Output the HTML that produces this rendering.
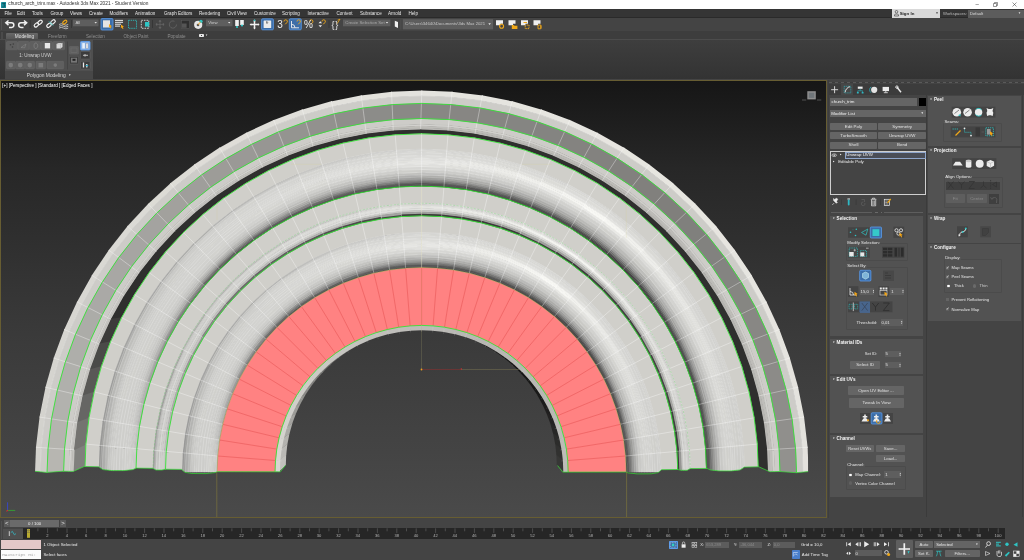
<!DOCTYPE html>
<html><head><meta charset="utf-8"><title>3ds Max</title>
<style>
*{box-sizing:border-box;margin:0;padding:0}
html,body{width:1024px;height:560px;overflow:hidden;background:#444;font-family:"Liberation Sans",sans-serif;font-size:4.6px;color:#e6e6e6;line-height:1}
.a{position:absolute}
.t{position:absolute;white-space:nowrap;line-height:1}
#title{left:0;top:0;width:1024px;height:9px;background:#fff}
#menu{left:0;top:9px;width:1024px;height:9px;background:#353535;border-bottom:.8px solid #2a2a2a}
#tool{left:0;top:18px;width:1024px;height:13px;background:#444}
#ribtab{left:0;top:31px;width:1024px;height:8.5px;background:#3d3d3d}
#rib{left:0;top:39.5px;width:1024px;height:39.3px;background:linear-gradient(#3e3e3e,#333)}
#vp{left:0;top:80.1px;width:826.9px;height:437.7px;background:#675d32;overflow:hidden}
#vpin{left:.8px;top:.8px;width:825.3px;height:436.1px;background:linear-gradient(#161616 0%,#272727 20%,#313131 40%,#3b3b3b 60%,#444 85%,#4a4a4a 100%);overflow:hidden}
#cmd{left:828px;top:80px;width:196px;height:438px;background:#444}
.ro{position:absolute;background:#525252}
.btn{position:absolute;background:#656565;border-radius:.6px;text-align:center;color:#e6e6e6}
.fld{position:absolute;background:#666}
.dk{position:absolute;background:#3a3a3a}
.b{font-weight:bold;color:#fff}
#menu,#tool,#ribtab,#rib,#cmd,#bot,#title,#vp{will-change:transform}
</style></head><body>
<div id="title" class="a">
 <svg class="a" style="left:.8px;top:1.6px" width="5.6" height="6.4" viewBox="0 0 5.6 6.4"><rect width="5.6" height="6.4" rx=".8" fill="#1b8e9c"/><path d="M1.3 1.4h2.8l-1.4 1.7c1.9 0 1.9 2.3-1.4 1.9" stroke="#0c4f5a" stroke-width=".9" fill="none"/></svg>
 <span class="t" style="left:8.3px;top:2.2px;color:#2e2e2e;font-size:4.78px">church_arch_trim.max - Autodesk 3ds Max 2021 - Student Version</span>
 <span class="t" style="left:975.5px;top:1.2px;color:#222;font-size:6px">–</span>
 <svg class="a" style="left:993px;top:2px" width="5" height="5" viewBox="0 0 5 5"><path d="M.5 1.5h3v3h-3zM1.5 1.5v-1h3v3h-1" stroke="#333" stroke-width=".5" fill="none"/></svg>
 <svg class="a" style="left:1012px;top:2px" width="5" height="5" viewBox="0 0 5 5"><path d="M.5 .5l4 4M4.5 .5l-4 4" stroke="#333" stroke-width=".5" fill="none"/></svg>
</div>
<div id="menu" class="a">
 <span class="t" style="left:4.5px;top:2.9px">File</span>
 <span class="t" style="left:17px;top:2.9px">Edit</span>
 <span class="t" style="left:32px;top:2.9px">Tools</span>
 <span class="t" style="left:50.5px;top:2.9px">Group</span>
 <span class="t" style="left:70px;top:2.9px">Views</span>
 <span class="t" style="left:89px;top:2.9px">Create</span>
 <span class="t" style="left:109.5px;top:2.9px">Modifiers</span>
 <span class="t" style="left:135px;top:2.9px">Animation</span>
 <span class="t" style="left:164px;top:2.9px">Graph Editors</span>
 <span class="t" style="left:199px;top:2.9px">Rendering</span>
 <span class="t" style="left:227px;top:2.9px">Civil View</span>
 <span class="t" style="left:254px;top:2.9px">Customize</span>
 <span class="t" style="left:282px;top:2.9px">Scripting</span>
 <span class="t" style="left:307.5px;top:2.9px">Interactive</span>
 <span class="t" style="left:336.5px;top:2.9px">Content</span>
 <span class="t" style="left:360px;top:2.9px">Substance</span>
 <span class="t" style="left:388px;top:2.9px">Arnold</span>
 <span class="t" style="left:408.5px;top:2.9px">Help</span>
 <div class="a" style="left:892px;top:0;width:48px;height:9px;background:#d9d9d9"></div>
 <svg class="a" style="left:893.5px;top:1.2px" width="5" height="6.5" viewBox="0 0 5 6.5"><circle cx="2.5" cy="1.8" r="1.3" fill="none" stroke="#333" stroke-width=".6"/><path d="M.4 6v-1.2c0-1 4.2-1 4.2 0V6z" fill="none" stroke="#333" stroke-width=".6"/></svg>
 <span class="t" style="left:899.7px;top:2.9px;color:#222;font-weight:bold;font-size:4.4px">Sign In</span>
 <span class="t" style="left:935.5px;top:3px;color:#222;font-size:3px">&#9660;</span>
 <span class="t" style="left:943px;top:2.9px;color:#bdbdbd;font-size:4.2px">Workspaces:</span>
 <div class="a" style="left:967.5px;top:.5px;width:56.5px;height:8px;background:#5c5c5c"></div>
 <span class="t" style="left:970px;top:2.9px;color:#ddd;font-size:4.2px">Default</span>
 <span class="t" style="left:1018px;top:3px;color:#ddd;font-size:3px">&#9660;</span>
</div>
<div id="tool" class="a">
<svg class="a" style="left:0;top:0" width="1024" height="13" viewBox="0 18 1024 13">
<g fill="#6a6a6a"><rect x="1.2" y="19" width=".7" height="11" opacity=".6"/></g>
<!-- undo / redo -->
<path d="M8.5 20.5L5.8 22.8L8.5 25.1M6.2 22.8H11.6c3 0 3 4.6 0 4.6H9" stroke="#f0f0f0" stroke-width="1.5" fill="none"/>
<path d="M24 20.5L26.7 22.8L24 25.1M26.3 22.8H20.9c-3 0 -3 4.6 0 4.6H23.5" stroke="#f0f0f0" stroke-width="1.5" fill="none"/>
<rect x="29.8" y="20" width=".6" height="8" fill="#2e2e2e"/>
<!-- link / unlink / bind -->
<g stroke="#f0f0f0" stroke-width="1.2" fill="none"><rect x="34" y="23.4" width="5" height="3" rx="1.5" transform="rotate(-40 36.5 24.9)"/><rect x="37.5" y="20.8" width="5" height="3" rx="1.5" transform="rotate(-40 40 22.3)"/>
<rect x="46.5" y="23.8" width="5" height="3" rx="1.5" transform="rotate(-40 49 25.3)"/><rect x="50.5" y="20.4" width="5" height="3" rx="1.5" transform="rotate(-40 53 21.9)"/></g>
<path d="M49 21.5l4 4" stroke="#35c6c6" stroke-width=".9"/>
<path d="M59 24.5q2.3-1.5 4.6 0t4.6 0M59 26.3q2.3-1.5 4.6 0t4.6 0M59 28.1q2.3-1.5 4.6 0t4.6 0" stroke="#e8e8e8" stroke-width=".7" fill="none"/>
<rect x="62.5" y="20.8" width="4.6" height="2.6" rx="1.3" transform="rotate(-40 64.8 22.1)" stroke="#f0a818" stroke-width="1.1" fill="none"/>
<rect x="71.3" y="20" width=".6" height="8" fill="#2e2e2e"/>
<!-- All dropdown -->
<rect x="73" y="19.5" width="25.5" height="6.8" fill="#5e5e5e"/>
<path d="M94.5 22l1.2 1.5l1.2-1.5z" fill="#e8e8e8"/>
<!-- select object active -->
<rect x="101" y="18.6" width="12" height="11.4" rx="1" fill="#3d6ea8" stroke="#5b9bea" stroke-width=".8"/>
<rect x="103" y="20.3" width="7" height="7.2" fill="#e4e4e4"/>
<path d="M109 24l3 2.2l-1.3.3l.8 1.7l-.9.4l-.8-1.7l-.9.9z" fill="#f5a614"/>
<!-- select by name -->
<path d="M115 20.4h8M115 22.3h8M115 24.2h6M115 26.1h5" stroke="#ececec" stroke-width="1"/>
<path d="M121 24.5l3 2.2l-1.3.3l.8 1.7l-.9.4l-.8-1.7l-.9.9z" fill="#f5a614"/>
<!-- rect region -->
<rect x="128.5" y="20.3" width="8" height="8" fill="none" stroke="#2fc4c4" stroke-width=".8" stroke-dasharray="1.4 .8"/>
<!-- window crossing -->
<rect x="141.3" y="20.3" width="7.5" height="8" fill="none" stroke="#efefef" stroke-width=".8" stroke-dasharray="1.6 1"/>
<rect x="145" y="22" width="4.2" height="4.6" fill="#2fc4c4"/>
<rect x="152.3" y="20" width=".6" height="8" fill="#2e2e2e"/>
<!-- move rotate scale (dim) -->
<path d="M160 20.4v8M156 24.4h8M160 20.2l-1 1.2h2zM160 28.6l-1-1.2h2zM155.8 24.4l1.2-1v2zM164.2 24.4l-1.2-1v2z" stroke="#666" stroke-width=".7" fill="#666"/>
<path d="M176.5 24.5a3.6 3.6 0 1 1-2-3.2" stroke="#666" stroke-width=".8" fill="none"/>
<rect x="181.5" y="20.3" width="8" height="8" fill="#2f2f2f" stroke="#5a5a5a" stroke-width=".5"/><rect x="182" y="23.5" width="4.6" height="4.3" fill="#555"/>
<!-- placement -->
<circle cx="198.2" cy="24.8" r="4.1" fill="#e6e6e6"/><circle cx="198" cy="25" r="1.3" fill="#555"/><circle cx="201" cy="21.3" r="1.6" fill="#2fc4c4"/><path d="M198 24.8l2.6-3" stroke="#f0a010" stroke-width=".9"/>
<!-- View dropdown -->
<rect x="206" y="19.5" width="26.5" height="6.8" fill="#5e5e5e"/>
<path d="M228 22l1.2 1.5l1.2-1.5z" fill="#e8e8e8"/>
<!-- pivot -->
<rect x="235.2" y="20" width="3.6" height="6" fill="#efefef"/><rect x="240.2" y="20" width="3.6" height="5" fill="#efefef"/><circle cx="237" cy="27" r="1.1" fill="#2fc4c4"/><circle cx="242" cy="25.5" r="1.1" fill="#2fc4c4"/>
<!-- move gizmo -->
<path d="M254.5 21v7M251 24.5h7.4" stroke="#f2f2f2" stroke-width="1.5"/><path d="M254.5 19.6l-1.3 1.6h2.6zM254.5 29.4l-1.3-1.6h2.6zM249.6 24.5l1.6-1.3v2.6zM259.6 24.5l-1.6-1.3v2.6z" fill="#f2f2f2"/><circle cx="254.5" cy="20.3" r=".9" fill="#2fc4c4"/>
<!-- active kbd -->
<rect x="261.6" y="18.8" width="11.8" height="11" rx="1" fill="#3d6ea8" stroke="#5b9bea" stroke-width=".8"/>
<rect x="263.6" y="20.4" width="7.6" height="7.6" rx=".6" fill="#ececec"/><path d="M267 21.7v2.2M266.2 22.4l.8-.8l.8.8" stroke="#333" stroke-width=".7" fill="none"/>
<!-- angle snap active bg -->
<rect x="289.3" y="18.8" width="12" height="11" rx="1" fill="#3d6ea8" stroke="#5b9bea" stroke-width=".8"/>
<path d="M291.5 21v6.8h7.5M291.5 24.3a3.5 3.5 0 0 1 3.5 3.5" stroke="#efefef" stroke-width=".9" fill="none"/>
<g stroke="#f0a818" stroke-width=".9" fill="none"><path d="M284 21.5a1.7 1.7 0 1 1 2.2 1.6l-1 1.2"/><path d="M297 21.5a1.7 1.7 0 1 1 2.2 1.6l-1 1.2"/><path d="M309.6 21.5a1.7 1.7 0 1 1 2.2 1.6l-1 1.2"/><path d="M322 21.5a1.7 1.7 0 1 1 2.2 1.6l-1 1.2"/></g>
<path d="M337.5 20.2l2.5-1l-3 4.5" stroke="#f0a818" stroke-width=".8" fill="none"/>
<path d="M318.5 23.2l1.8-2l1.8 2zM318.5 25.3l1.8 2l1.8-2z" fill="#e8e8e8"/>
<rect x="328.7" y="20" width=".6" height="8" fill="#2e2e2e"/>
<!-- create selection set -->
<rect x="343" y="19.5" width="47.4" height="6.8" fill="#5e5e5e"/>
<path d="M385.8 22l1.2 1.5l1.2-1.5z" fill="#e8e8e8"/>
<!-- mirror -->
<path d="M394.8 20.8l3.2 1.2v6l-3.2-1.6z" fill="#f0f0f0"/>
<rect x="400.6" y="19.5" width=".6" height="10" fill="#5a5a5a"/>
<!-- path dropdown -->
<rect x="402.8" y="19.2" width="90.3" height="10.2" fill="#5e5e5e"/>
<path d="M488.3 23.3l1.3 1.6l1.3-1.6z" fill="#e8e8e8"/>
<!-- right icons -->
<g fill="#efefef"><path d="M496 20.3h7v3.4h-2.5v1.6h-4.5z"/><path d="M508.5 20.3h7v3.4h-2.5v1.6h-4.5z"/><path d="M521 20.3h7v3.4h-2.5v1.6h-4.5z"/><path d="M533.5 20.3h7v3.4h-2.5v1.6h-4.5z"/></g>
<circle cx="501.6" cy="26.2" r="2" fill="none" stroke="#f0a818" stroke-width="1.1"/>
<path d="M511.8 25h2l.6.8h3v3.2h-5.6z" fill="#f0a818"/>
<rect x="525.2" y="25" width="3.8" height="3.6" fill="none" stroke="#f0a818" stroke-width=".9" stroke-dasharray="1.2 .6"/><rect x="523.5" y="22" width="3.5" height="1" fill="#f0a818"/>
<path d="M538 25h2.8v3.8h-2.8zM541 25.5v3" stroke="#f0a818" stroke-width=".9" fill="none"/>
</svg>
<span class="t" style="left:75.5px;top:3.1px;color:#cfcfcf;font-size:4.3px">All</span>
<span class="t" style="left:208.3px;top:3.1px;color:#cfcfcf;font-size:4.3px">View</span>
<span class="t" style="left:277.3px;top:2.2px;color:#efefef;font-size:10px">3</span>
<span class="t" style="left:304px;top:2.2px;color:#efefef;font-size:10px">%</span>
<span class="t" style="left:331.6px;top:2.6px;color:#e8e8e8;font-size:9px;letter-spacing:.6px">{}</span>
<span class="t" style="left:345.3px;top:3.1px;color:#a9a9a9;font-size:4.3px">Create Selection Set</span>
<span class="t" style="left:405px;top:4.2px;color:#c6c6c6;font-size:4.250px">C:\Users\34640\Documents\3ds Max 2021</span>
</div>
<div id="ribtab" class="a">
<div class="a" style="left:1px;top:1px;width:1.6px;height:47px;background:#4a4a4a"></div><div class="a" style="left:0;top:7.6px;width:1024px;height:.7px;background:#4c4c4c"></div>
<div class="a" style="left:6px;top:1.7px;width:32px;height:6.8px;background:linear-gradient(#686868,#565656);border-radius:1px 1px 0 0"></div>
<span class="t" style="left:14.8px;top:3.5px;color:#e2e2e2;font-size:4.75px">Modeling</span>
<span class="t" style="left:48px;top:3.6px;color:#8e8e8e;font-size:4.6px">Freeform</span>
<span class="t" style="left:86px;top:3.6px;color:#8e8e8e;font-size:4.6px">Selection</span>
<span class="t" style="left:123.5px;top:3.6px;color:#8e8e8e;font-size:4.6px">Object Paint</span>
<span class="t" style="left:167.5px;top:3.6px;color:#8e8e8e;font-size:4.6px">Populate</span>
<div class="a" style="left:198.8px;top:3.2px;width:5px;height:3.2px;background:#e8e8e8;border-radius:.8px"></div>
<div class="a" style="left:200.6px;top:4.2px;width:1.4px;height:1.2px;background:#444"></div>
<span class="t" style="left:205.3px;top:3.6px;color:#ddd;font-size:2.6px">&#9660;</span>
</div>
<div id="rib" class="a">
<div class="a" style="left:5px;top:0;width:88px;height:39.2px;background:#4f4f4f"></div>
<div class="a" style="left:5px;top:30.5px;width:88px;height:8.7px;background:#474747"></div>
<span class="t" style="left:26.8px;top:33.6px;color:#d8d8d8;font-size:4.9px">Polygon Modeling</span>
<span class="t" style="left:68.3px;top:34.2px;color:#ddd;font-size:3px">&#9660;</span>
<span class="t" style="left:19.3px;top:13.7px;color:#cfcfcf;font-size:4.5px">1: Unwrap UVW</span>
<svg class="a" style="left:0;top:0" width="100" height="41" viewBox="0 39.5 100 41">
<g fill="#5f5f5f" stroke="#6f6f6f" stroke-width=".4">
<rect x="6.5" y="41" width="11" height="8.3" rx=".8"/><rect x="18" y="41" width="11" height="8.3" rx=".8"/><rect x="29.5" y="41" width="11" height="8.3" rx=".8"/><rect x="41" y="41" width="11.5" height="8.3" rx=".8"/><rect x="53" y="41" width="11.5" height="8.3" rx=".8"/>
<rect x="6.5" y="60.8" width="8.7" height="7.6" rx=".8"/><rect x="15.7" y="60.8" width="9" height="7.6" rx=".8"/><rect x="25.2" y="60.8" width="9.3" height="7.6" rx=".8"/><rect x="36" y="60.8" width="9.6" height="7.6" rx=".8"/><rect x="47" y="60.8" width="16.6" height="7.6" rx=".8"/>
<rect x="69.4" y="46" width="9.2" height="7.6" rx=".6"/>
<rect x="69.4" y="55.8" width="9.2" height="7.7" rx=".6" fill="#3c3c3c"/>
<rect x="80.5" y="51" width="9.5" height="7.5" rx=".6" fill="#3c3c3c"/><rect x="80.5" y="60.8" width="9.5" height="7.7" rx=".6" fill="#3c3c3c"/>
</g>
<rect x="67.2" y="41" width=".5" height="28" fill="#3a3a3a"/>
<g fill="#3e3e3e"><circle cx="10.5" cy="44.3" r=".8"/><circle cx="13.3" cy="43.5" r=".8"/><circle cx="12.5" cy="46.5" r=".8"/></g>
<path d="M21 47l5-3.5l-1.3 3.8z" stroke="#8a8a8a" stroke-width=".5" fill="none"/>
<path d="M35.5 42.5c3 0 3 5.5 0 5.5c-2 0-2-5.5 0-5.5z" stroke="#8a8a8a" stroke-width=".6" fill="none"/>
<rect x="44.8" y="42.5" width="5.3" height="5.4" fill="#e9e9e9"/>
<path d="M56.5 43.5l2-1h4v4l-2 1.5h-4z" fill="#dadada"/><path d="M56.5 43.5h4v4.5M60.5 43.5l2-1" stroke="#aaa" stroke-width=".4" fill="none"/>
<g fill="#7c7c7c"><circle cx="10.8" cy="64.6" r="2.3"/><circle cx="20.2" cy="64.6" r="2.4"/><circle cx="29.8" cy="64.6" r="2.3"/><rect x="38.5" y="62.5" width="4.6" height="4.4"/><circle cx="55.3" cy="64.6" r="1.8"/></g>
<rect x="71" y="47.5" width="6" height="4.5" fill="none" stroke="#6e6e6e" stroke-width=".6"/>
<rect x="71" y="57.3" width="6" height="4.8" fill="#777"/><rect x="72.5" y="58.3" width="3" height="2" fill="#222"/>
<rect x="80.5" y="41" width="9.5" height="8.5" rx=".8" fill="#8db4e6" stroke="#5b9bea" stroke-width=".9"/>
<rect x="82.3" y="42.6" width="2.6" height="5.4" fill="#e8f0fa"/><rect x="86" y="42.6" width="2" height="5.4" fill="#f2f2f2" stroke="#667" stroke-width=".3"/>
<path d="M83 54.8h5M85 53.5v2.6" stroke="#ccc" stroke-width=".9"/>
<path d="M83.5 62v5M86.8 63.5v3.5" stroke="#eaeaea" stroke-width="1.3"/><rect x="85.6" y="64.5" width="2.6" height="1.2" fill="#2fa8c4"/>
</svg>
</div>
<div id="vp" class="a"><div id="vpin" class="a">
<svg class="a" style="left:-.8px;top:-80.9px" width="1024" height="560" viewBox="0 0 1024 560">
<defs><clipPath id="cl"><path d="M33 80L33 300L35 471.3L46.7 472.4L63.5 471.2L73.3 471.4L84.3 466.5L98.7 466.8L103 469.6L112 470.6L124 470.6L133 469.6L136.1 468.1L152.8 468.3L156 470L162 470L165.4 469.2L181.5 469.4L185 472.3L192 473.5L206 473.6L215 472.6L217.2 471.7L275 471.8L280.4 471.8L285.5 465.2L557.6 465.5L562.7 472.1L568.1 472.1L625.9 472L628.1 472.9L637.1 473.9L651.1 473.8L658.1 472.6L661.6 469.7L677.7 469.5L681.1 470.3L687.1 470.3L690.3 468.6L707 468.4L710.1 469.9L719.1 470.9L731.1 470.9L740.1 469.9L744.4 467.1L758.8 466.8L769.8 471.7L779.6 471.5L796.4 472.7L808.1 471.6L810.1 300L811 80Z"/></clipPath></defs>
<g clip-path="url(#cl)">
<path fill="#373736" d="M564.8 472.2L564.4 460.6L556.4 454.5L556.8 465.5Z"/>
<path fill="#313130" d="M564.4 461L563.1 449.4L555.2 443.9L556.4 454.9Z"/>
<path fill="#2c2c2b" d="M563.1 449.8L560.8 438.4L553.1 433.5L555.2 444.3Z"/>
<path fill="#272726" d="M560.9 438.8L557.8 427.5L550.2 423.2L553.1 433.8Z"/>
<path fill="#232222" d="M557.9 427.9L553.9 417L546.5 413.3L550.3 423.6Z"/>
<path fill="#1f1e1e" d="M554 417.4L549.1 406.8L542 403.6L546.6 413.6Z"/>
<path fill="#1b1b1b" d="M549.3 407.1L543.6 397L536.8 394.3L542.2 403.9Z"/>
<path fill="#191918" d="M543.8 397.3L537.4 387.6L530.9 385.5L537 394.6Z"/>
<path fill="#171716" d="M537.6 388L530.4 378.8L524.3 377.1L531.1 385.8Z"/>
<path fill="#151515" d="M530.7 379.1L522.8 370.6L517 369.3L524.5 377.4Z"/>
<path fill="#151414" d="M523 370.8L514.5 362.9L509.2 362.1L517.3 369.6Z"/>
<path fill="#141414" d="M514.8 363.2L505.6 356L500.8 355.5L509.5 362.3Z"/>
<path fill="#151514" d="M506 356.2L496.3 349.8L492 349.6L501.1 355.7Z"/>
<path fill="#161616" d="M496.6 350L486.5 344.3L482.7 344.4L492.3 349.8Z"/>
<path fill="#181817" d="M486.8 344.5L476.2 339.6L473 340L483 344.6Z"/>
<path fill="#1b1b1a" d="M476.6 339.7L465.7 335.7L463 336.3L473.3 340.1Z"/>
<path fill="#1e1e1d" d="M466.1 335.8L454.8 332.7L452.8 333.5L463.4 336.4Z"/>
<path fill="#222121" d="M455.2 332.8L443.8 330.5L442.3 331.4L453.1 333.5Z"/>
<path fill="#262625" d="M444.2 330.5L432.6 329.2L431.7 330.2L442.7 331.4Z"/>
<path fill="#2b2b2a" d="M433 329.2L421.4 328.8L421.1 329.8L432.1 330.2Z"/>
<path fill="#30302f" d="M421.8 328.8L410.2 329.2L410.5 330.2L421.5 329.8Z"/>
<path fill="#363635" d="M410.6 329.2L399 330.5L399.9 331.4L410.9 330.2Z"/>
<path fill="#3c3c3b" d="M399.4 330.5L388 332.8L389.5 333.5L400.3 331.4Z"/>
<path fill="#434341" d="M388.4 332.7L377.1 335.8L379.2 336.4L389.8 333.5Z"/>
<path fill="#4a4a48" d="M377.5 335.7L366.6 339.7L369.3 340.1L379.6 336.3Z"/>
<path fill="#525150" d="M367 339.6L356.4 344.5L359.6 344.6L369.6 340Z"/>
<path fill="#5a5957" d="M356.7 344.3L346.6 350L350.3 349.8L359.9 344.4Z"/>
<path fill="#62615f" d="M346.9 349.8L337.2 356.2L341.5 355.7L350.6 349.6Z"/>
<path fill="#6a6967" d="M337.6 356L328.4 363.2L333.1 362.3L341.8 355.5Z"/>
<path fill="#72716f" d="M328.7 362.9L320.2 370.8L325.3 369.6L333.4 362.1Z"/>
<path fill="#7a7a77" d="M320.4 370.6L312.5 379.1L318.1 377.4L325.6 369.3Z"/>
<path fill="#83827f" d="M312.8 378.8L305.6 388L311.5 385.8L318.3 377.1Z"/>
<path fill="#8b8a87" d="M305.8 387.6L299.4 397.3L305.6 394.6L311.7 385.5Z"/>
<path fill="#93938f" d="M299.6 397L293.9 407.1L300.4 403.9L305.8 394.3Z"/>
<path fill="#9c9b97" d="M294.1 406.8L289.2 417.4L296 413.6L300.6 403.6Z"/>
<path fill="#a4a39f" d="M289.3 417L285.3 427.9L292.3 423.6L296.1 413.3Z"/>
<path fill="#ababa7" d="M285.4 427.5L282.3 438.8L289.5 433.8L292.4 423.2Z"/>
<path fill="#b3b2ae" d="M282.4 438.4L280.1 449.8L287.4 444.3L289.5 433.5Z"/>
<path fill="#bab9b5" d="M280.1 449.4L278.8 461L286.2 454.9L287.4 443.9Z"/>
<path fill="#c1c0bc" d="M278.8 460.6L278.4 472.2L285.8 465.5L286.2 454.5Z"/>
<path fill="#e3e1dc" d="M808.8 478.1L807.6 446.7L802.1 447.1L803.3 478.1Z"/>
<path fill="#e3e2dd" d="M807.7 447.8L804 416.5L798.6 417.4L802.2 448.2ZM422.3 90.6L390.9 91.8L391.3 97.3L422.3 96.1Z"/>
<path fill="#e4e3de" d="M804.2 417.6L798 386.7L792.7 388L798.7 418.4ZM452.7 91.8L421.3 90.6L421.3 96.1L452.3 97.3Z"/>
<path fill="#e5e3de" d="M798.3 387.8L789.7 357.5L784.5 359.2L792.9 389Z"/>
<path fill="#e5e4df" d="M790.1 358.5L779.2 329L774.1 331.1L784.8 360.2ZM512.7 101.4L481.8 95.2L481 100.7L511.4 106.7Z"/>
<path fill="#e6e4df" d="M779.6 330L766.4 301.4L761.5 303.9L774.5 332.1Z"/>
<path fill="#e6e5e0" d="M766.9 302.4L751.5 274.9L746.8 277.8L762 304.9ZM752.1 275.8L734.6 249.7L730.2 252.9L747.4 278.7ZM598 133L569.4 119.8L567.3 124.9L595.5 137.9ZM570.4 120.2L540.9 109.3L539.2 114.6L568.3 125.3Z"/>
<path fill="#e7e5e0" d="M735.2 250.5L715.8 225.8L711.6 229.4L730.8 253.8ZM624.5 147.9L597 132.5L594.5 137.4L621.6 152.6Z"/>
<path fill="#e7e6e0" d="M716.5 226.6L695.1 203.5L691.2 207.4L712.3 230.2ZM695.9 204.3L672.8 182.9L669.2 187.1L692 208.2ZM673.6 183.6L648.9 164.2L645.6 168.6L670 187.8ZM649.7 164.8L623.6 147.3L620.7 152L646.5 169.2Z"/>
<path fill="#e6e5df" d="M541.9 109.7L511.6 101.1L510.4 106.5L540.2 114.9Z"/>
<path fill="#e5e4de" d="M482.9 95.4L451.6 91.7L451.2 97.2L482 100.8Z"/>
<path fill="#e3e2dc" d="M392 91.7L360.7 95.4L361.6 100.8L392.4 97.2Z"/>
<path fill="#e2e1dc" d="M361.8 95.2L330.9 101.4L332.2 106.7L362.6 100.7Z"/>
<path fill="#e1e0db" d="M332 101.1L301.7 109.7L303.4 114.9L333.2 106.5Z"/>
<path fill="#e0dfda" d="M302.7 109.3L273.2 120.2L275.3 125.3L304.4 114.6Z"/>
<path fill="#dfded9" d="M274.2 119.8L245.6 133L248.1 137.9L276.3 124.9Z"/>
<path fill="#dfddd8" d="M246.6 132.5L219.1 147.9L222 152.6L249.1 137.4Z"/>
<path fill="#dedcd7" d="M220 147.3L193.9 164.8L197.1 169.2L222.9 152Z"/>
<path fill="#dddcd6" d="M194.7 164.2L170 183.6L173.6 187.8L198 168.6Z"/>
<path fill="#dcdbd5" d="M170.8 182.9L147.7 204.3L151.6 208.2L174.4 187.1Z"/>
<path fill="#dbdad5" d="M148.5 203.5L127.1 226.6L131.3 230.2L152.4 207.4Z"/>
<path fill="#dad9d4" d="M127.8 225.8L108.4 250.5L112.8 253.8L132 229.4Z"/>
<path fill="#d9d8d3" d="M109 249.7L91.5 275.8L96.2 278.7L113.4 252.9Z"/>
<path fill="#d8d7d2" d="M92.1 274.9L76.7 302.4L81.6 304.9L96.8 277.8ZM275.2 460.3L274.8 472.2L279.9 472.2L280.3 460.7Z"/>
<path fill="#d7d6d1" d="M77.2 301.4L64 330L69.1 332.1L82.1 303.9ZM276.6 448.8L275.2 460.7L280.3 461.1L281.6 449.6Z"/>
<path fill="#d6d5d0" d="M64.4 329L53.5 358.5L58.8 360.2L69.5 331.1ZM278.9 437.5L276.5 449.2L281.6 450L283.8 438.7Z"/>
<path fill="#d5d4cf" d="M53.9 357.5L45.3 387.8L50.7 389L59.1 359.2Z"/>
<path fill="#d4d3ce" d="M45.6 386.7L39.4 417.6L44.9 418.4L50.9 388ZM282 426.4L278.8 437.9L283.7 439.1L286.8 428Z"/>
<path fill="#d3d2cd" d="M39.6 416.5L35.9 447.8L41.4 448.2L45 417.4ZM286 415.6L281.9 426.8L286.7 428.4L290.7 417.6Z"/>
<path fill="#d2d1cc" d="M36 446.7L34.8 478.1L40.3 478.1L41.5 447.1Z"/>
<path fill="#cdccc8" d="M803.8 478.1L802.6 447.1L795.4 448.5L796.5 478.9ZM802.7 448.2L799.1 417.3L791.9 419.3L795.4 449.5ZM799.2 418.4L793.2 387.9L786.1 390.4L792 420.3ZM793.4 388.9L785 359L778 362.1L786.3 391.4ZM785.3 360L774.6 330.9L767.8 334.5L778.4 363.1ZM775 331.9L762 303.7L755.5 307.8L768.2 335.5ZM762.5 304.6L747.3 277.5L741.1 282.1L755.9 308.7ZM747.8 278.4L730.6 252.6L724.7 257.7L741.6 283ZM731.2 253.5L712 229.1L706.4 234.6L725.3 258.6ZM712.7 229.9L691.6 207.1L686.4 213L707.1 235.4ZM692.3 207.8L669.5 186.7L664.8 193.1L687.2 213.8ZM670.3 187.4L645.9 168.2L641.6 174.9L665.6 193.8ZM646.8 168.8L621 151.6L617.2 158.6L642.5 175.5ZM621.9 152.1L594.8 136.9L591.5 144.3L618.1 159.1ZM595.7 137.4L567.5 124.4L564.7 132L592.4 144.7ZM568.5 124.8L539.4 114.1L537.1 121.8L565.7 132.4ZM540.4 114.4L510.5 106L508.8 113.9L538.1 122.2ZM511.5 106.2L481 100.2L479.9 108.2L509.8 114.1ZM482.1 100.3L451.2 96.7L450.7 104.8L480.9 108.3ZM452.3 96.8L421.3 95.6L421.3 103.7L451.7 104.8ZM422.3 95.6L391.3 96.8L391.9 104.8L422.3 103.7ZM392.4 96.7L361.5 100.3L362.7 108.3L392.9 104.8ZM362.6 100.2L332.1 106.2L333.8 114.1L363.7 108.2ZM333.1 106L303.2 114.4L305.5 122.2L334.8 113.9ZM304.2 114.1L275.1 124.8L277.9 132.4L306.5 121.8ZM276.1 124.4L247.9 137.4L251.2 144.7L278.9 132ZM248.8 136.9L221.7 152.1L225.5 159.1L252.1 144.3ZM222.6 151.6L196.8 168.8L201.1 175.5L226.4 158.6ZM197.7 168.2L173.3 187.4L178 193.8L202 174.9ZM174.1 186.7L151.3 207.8L156.4 213.8L178.8 193.1ZM152 207.1L130.9 229.9L136.5 235.4L157.2 213ZM131.6 229.1L112.4 253.5L118.3 258.6L137.2 234.6ZM113 252.6L95.8 278.4L102 283L118.9 257.7ZM96.3 277.5L81.1 304.6L87.7 308.7L102.5 282.1ZM81.6 303.7L68.6 331.9L75.4 335.5L88.1 307.8ZM69 330.9L58.3 360L65.2 363.1L75.8 334.5ZM58.6 359L50.2 388.9L57.3 391.4L65.6 362.1ZM50.4 387.9L44.4 418.4L51.6 420.3L57.5 390.4ZM44.5 417.3L40.9 448.2L48.2 449.5L51.7 419.3ZM41 447.1L39.8 478.1L47.1 478.9L48.2 448.5ZM780.4 477.4L779.3 448.3L773.8 449.4L774.9 478.1ZM779.4 449.3L776 420.3L770.5 421.9L773.9 450.4ZM776.1 421.3L770.4 392.7L765.1 394.7L770.7 422.8ZM770.7 393.7L762.7 365.6L757.5 368L765.3 395.6ZM763.1 366.5L753 339.2L747.9 342L757.8 368.9ZM753.3 340.1L741.1 313.6L736.2 316.8L748.3 342.9ZM741.6 314.5L727.3 289.1L722.7 292.7L736.7 317.7ZM727.9 289.9L711.7 265.7L707.2 269.6L723.2 293.5ZM712.2 266.5L694.2 243.6L690 247.9L707.8 270.4ZM694.8 244.4L675 222.9L671.2 227.5L690.7 248.6ZM675.8 223.7L654.3 203.9L650.8 208.7L671.9 228.2ZM655.1 204.5L632.2 186.5L629 191.6L651.5 209.4ZM633 187L608.8 170.8L605.9 176.2L629.8 192.2ZM609.6 171.4L584.2 157.1L581.7 162.7L606.7 176.7ZM585.1 157.6L558.6 145.4L556.5 151.1L582.6 163.2ZM559.5 145.7L532.2 135.6L530.5 141.6L557.4 151.5ZM533.1 136L505 128L503.8 134.1L531.4 141.9ZM506 128.3L477.4 122.6L476.6 128.7L504.7 134.3ZM478.4 122.7L449.4 119.3L449 125.5L477.5 128.9ZM450.4 119.4L421.3 118.3L421.3 124.5L450 125.6ZM422.3 118.3L393.2 119.4L393.6 125.6L422.3 124.5ZM394.2 119.3L365.2 122.7L366.1 128.9L394.6 125.5ZM366.2 122.6L337.6 128.3L338.9 134.3L367 128.7ZM338.6 128L310.5 136L312.2 141.9L339.8 134.1ZM311.4 135.6L284.1 145.7L286.2 151.5L313.1 141.6ZM285 145.4L258.5 157.6L261 163.2L287.1 151.1ZM259.4 157.1L234 171.4L236.9 176.7L261.9 162.7ZM234.8 170.8L210.6 187L213.8 192.2L237.7 176.2ZM211.4 186.5L188.5 204.5L192.1 209.4L214.6 191.6ZM189.3 203.9L167.8 223.7L171.7 228.2L192.8 208.7ZM168.6 222.9L148.8 244.4L152.9 248.6L172.4 227.5ZM149.4 243.6L131.4 266.5L135.8 270.4L153.6 247.9ZM131.9 265.7L115.7 289.9L120.4 293.5L136.4 269.6ZM116.3 289.1L102 314.5L106.9 317.7L120.9 292.7ZM102.5 313.6L90.3 340.1L95.3 342.9L107.4 316.8ZM90.6 339.2L80.5 366.5L85.8 368.9L95.7 342ZM80.9 365.6L72.9 393.7L78.3 395.6L86.1 368ZM73.2 392.7L67.5 421.3L72.9 422.8L78.5 394.7ZM67.6 420.3L64.2 449.3L69.7 450.4L73.1 421.9ZM64.3 448.3L63.2 477.4L68.7 478.1L69.8 449.4Z"/>
<path fill="#92918e" d="M797 478.9L795.9 448.4L778.8 448.3L779.9 477.4ZM334.7 113.4L305.3 121.7L310.7 136.4L338.7 128.5Z"/>
<path fill="#908f8c" d="M795.9 449.5L792.3 419.2L775.5 420.4L778.9 449.3Z"/>
<path fill="#8e8d8a" d="M792.5 420.2L786.6 390.3L769.9 392.8L775.6 421.4Z"/>
<path fill="#8c8b88" d="M786.8 391.3L778.5 361.9L762.3 365.8L770.2 393.8Z"/>
<path fill="#8a8986" d="M778.8 362.9L768.3 334.3L752.5 339.4L762.6 366.7ZM422.3 103.2L391.8 104.3L393.2 119.9L422.3 118.8Z"/>
<path fill="#888784" d="M768.7 335.3L755.9 307.6L740.7 313.9L752.9 340.3ZM451.8 104.3L421.3 103.2L421.3 118.8L450.4 119.9Z"/>
<path fill="#868682" d="M756.4 308.5L741.5 281.9L726.9 289.3L741.1 314.7ZM509.9 113.6L480 107.7L477.3 123.1L505.9 128.8Z"/>
<path fill="#848481" d="M742 282.8L725.1 257.4L711.3 266L727.4 290.2ZM565.9 131.9L537.3 121.4L532 136.1L559.3 146.2Z"/>
<path fill="#82827f" d="M725.7 258.3L706.8 234.3L693.8 243.9L711.8 266.8Z"/>
<path fill="#80807d" d="M707.5 235.1L686.8 212.7L674.7 223.3L694.5 244.7ZM74.1 449.3L73 477.6L85.2 471L86.2 443.6Z"/>
<path fill="#807f7c" d="M687.5 213.4L665.1 192.7L654 204.2L675.4 224Z"/>
<path fill="#81807d" d="M665.9 193.4L641.9 174.5L631.9 186.9L654.8 204.9Z"/>
<path fill="#82817e" d="M642.8 175.1L617.4 158.2L608.5 171.3L632.7 187.4Z"/>
<path fill="#83827f" d="M618.3 158.7L591.7 143.8L584 157.6L609.4 171.8Z"/>
<path fill="#848380" d="M592.6 144.3L564.9 131.5L558.4 145.8L584.8 158Z"/>
<path fill="#858582" d="M538.3 121.7L508.9 113.4L504.9 128.5L532.9 136.4Z"/>
<path fill="#878683" d="M481 107.9L450.7 104.3L449.4 119.8L478.3 123.2Z"/>
<path fill="#8c8c89" d="M392.9 104.3L362.6 107.9L365.3 123.2L394.2 119.8Z"/>
<path fill="#8f8e8b" d="M363.6 107.7L333.7 113.6L337.7 128.8L366.3 123.1Z"/>
<path fill="#949490" d="M306.3 121.4L277.7 131.9L284.3 146.2L311.6 136.1Z"/>
<path fill="#979693" d="M278.7 131.5L251 144.3L258.8 158L285.2 145.8Z"/>
<path fill="#9a9996" d="M251.9 143.8L225.3 158.7L234.2 171.8L259.6 157.6Z"/>
<path fill="#9d9c98" d="M226.2 158.2L200.8 175.1L210.9 187.4L235.1 171.3Z"/>
<path fill="#9f9e9b" d="M201.7 174.5L177.7 193.4L188.8 204.9L211.7 186.9Z"/>
<path fill="#a2a19d" d="M178.5 192.7L156.1 213.4L168.2 224L189.6 204.2Z"/>
<path fill="#a4a3a0" d="M156.8 212.7L136.1 235.1L149.1 244.7L168.9 223.3Z"/>
<path fill="#a6a5a2" d="M136.8 234.3L117.9 258.3L131.8 266.8L149.8 243.9Z"/>
<path fill="#a8a7a4" d="M118.5 257.4L101.6 282.8L116.2 290.2L132.3 266Z"/>
<path fill="#aaa9a6" d="M102.1 281.9L87.2 308.5L102.5 314.7L116.7 289.3Z"/>
<path fill="#acaca8" d="M87.7 307.6L74.9 335.3L90.7 340.3L102.9 313.9Z"/>
<path fill="#aeaeaa" d="M75.3 334.3L64.8 362.9L81 366.7L91.1 339.4Z"/>
<path fill="#b0b0ac" d="M65.1 361.9L56.8 391.3L73.4 393.8L81.3 365.8Z"/>
<path fill="#b2b2ae" d="M57 390.3L51.1 420.2L68 421.4L73.7 392.8Z"/>
<path fill="#b5b4af" d="M51.3 419.2L47.7 449.5L64.7 449.3L68.1 420.4Z"/>
<path fill="#b7b6b1" d="M47.7 448.4L46.6 478.9L63.7 477.4L64.8 448.3Z"/>
<path fill="#c7c6c1" d="M775.4 478.1L774.3 449.4L771.4 449.4L772.5 477.9ZM774.4 450.3L771 421.8L768.1 422L771.5 450.4ZM394.5 125L366 128.4L366 130.7L394.3 127.3ZM367 128.2L338.8 133.8L338.9 136.1L367 130.5ZM173.1 228.4L153.7 249.4L155.2 250.9L174.5 230Z"/>
<path fill="#c6c5c1" d="M771.2 422.8L765.6 394.6L762.7 395L768.3 423ZM450 125.1L421.3 124L420.9 126.3L449.4 127.4ZM422.3 124L393.6 125.1L393.4 127.4L421.9 126.3ZM345 346.7L335.1 353.3L338.1 357.4L347.7 351Z"/>
<path fill="#c6c5c0" d="M765.8 395.5L758 367.8L755.2 368.5L763 395.9ZM758.3 368.8L748.3 341.8L745.6 342.6L755.5 369.4ZM748.7 342.7L736.7 316.6L734.1 317.6L746 343.5ZM531.6 141.4L503.9 133.6L502.9 135.9L530.4 143.6ZM504.8 133.8L476.6 128.2L475.8 130.5L503.9 136.1ZM477.6 128.4L449.1 125L448.5 127.3L476.8 130.7ZM193.4 209.7L172.4 229.1L173.8 230.7L194.6 211.5Z"/>
<path fill="#c5c4c0" d="M737.1 317.5L723.1 292.4L720.5 293.5L734.5 318.5ZM723.6 293.2L707.6 269.3L705.2 270.6L721.1 294.4ZM708.2 270.1L690.4 247.5L688.1 249L705.8 271.4ZM691 248.3L671.5 227.2L669.4 228.8L688.7 249.8ZM672.2 227.9L651.1 208.4L649.1 210.1L670 229.5ZM651.9 209L629.3 191.2L627.4 193.1L649.8 210.7ZM630.1 191.8L606.2 175.8L604.5 177.8L628.2 193.6ZM607 176.3L581.9 162.3L580.4 164.3L605.3 178.3ZM582.8 162.7L556.7 150.7L555.3 152.8L581.3 164.8ZM557.6 151.1L530.6 141.1L529.4 143.3L556.2 153.2ZM215.1 192.7L192.6 210.4L193.9 212.1L216.2 194.5Z"/>
<path fill="#c7c6c2" d="M339.7 133.6L312 141.4L312.4 143.6L339.9 135.9ZM154.3 248.7L136.6 271.1L138.2 272.4L155.8 250.1ZM137.2 270.3L121.3 294.1L123 295.3L138.8 271.6ZM121.8 293.3L107.9 318.2L109.7 319.2L123.6 294.4ZM108.3 317.4L96.3 343.3L98.2 344.1L110.1 318.3ZM96.7 342.4L86.8 369.2L88.8 369.8L98.6 343.2ZM87.1 368.3L79.4 395.8L81.4 396.2L89.1 368.9ZM79.6 394.9L74 422.9L76.1 423.1L81.6 395.3ZM74.2 421.9L70.8 450.3L72.9 450.4L76.2 422.2ZM70.9 449.4L69.8 477.9L71.9 477.8L73 449.4Z"/>
<path fill="#c8c7c2" d="M313 141.1L286 151.1L286.6 153.2L313.4 143.3ZM286.9 150.7L260.8 162.7L261.5 164.8L287.5 152.8ZM335.4 353.1L326.1 360.5L329.4 364.3L338.4 357.2Z"/>
<path fill="#c8c7c3" d="M261.7 162.3L236.6 176.3L237.5 178.3L262.4 164.3Z"/>
<path fill="#c9c8c3" d="M237.4 175.8L213.5 191.8L214.6 193.6L238.3 177.8Z"/>
<path fill="#c9c8c4" d="M214.3 191.2L191.7 209L193 210.7L215.4 193.1ZM326.4 360.2L317.6 368.3L321.2 371.9L329.7 364.1Z"/>
<path fill="#cac9c4" d="M192.5 208.4L171.4 227.9L172.8 229.5L193.7 210.1ZM172.1 227.2L152.6 248.3L154.1 249.8L173.4 228.8Z"/>
<path fill="#cac9c5" d="M153.2 247.5L135.4 270.1L137 271.4L154.7 249ZM136 269.3L120 293.2L121.7 294.4L137.6 270.6ZM120.5 292.4L106.5 317.5L108.3 318.5L122.3 293.5ZM106.9 316.6L94.9 342.7L96.8 343.5L108.7 317.6ZM95.3 341.8L85.3 368.8L87.3 369.4L97.2 342.6ZM85.6 367.8L77.8 395.5L79.8 395.9L87.6 368.5ZM78 394.6L72.4 422.8L74.5 423L80.1 395ZM72.6 421.8L69.2 450.3L71.3 450.4L74.7 422ZM69.3 449.4L68.2 478.1L70.3 477.9L71.4 449.4Z"/>
<path fill="#c0bfbb" d="M773 477.9L771.9 449.4L769 449.4L770.1 477.8ZM394.3 126.8L365.9 130.2L365.9 132.5L394.1 129.2Z"/>
<path fill="#c0bfba" d="M772 450.3L768.6 421.9L765.8 422.2L769.1 450.4ZM421.9 125.8L393.3 126.9L393.1 129.2L421.5 128.1ZM238.7 178.9L215.1 194.7L216.2 196.5L239.6 180.9Z"/>
<path fill="#bfbeba" d="M768.8 422.9L763.2 394.9L760.4 395.3L765.9 423.1ZM449.5 126.9L420.9 125.8L420.5 128.1L448.9 129.2ZM398.8 326.9L387.1 329.3L388.3 334.2L399.6 332Z"/>
<path fill="#bfbeb9" d="M763.4 395.8L755.7 368.3L752.9 368.9L760.6 396.2ZM476.9 130.2L448.5 126.8L447.9 129.2L476.1 132.5ZM262.7 165.5L237.9 179.4L238.8 181.4L263.4 167.6Z"/>
<path fill="#bebdb9" d="M756 369.2L746.1 342.4L743.4 343.2L753.2 369.8ZM746.5 343.3L734.5 317.4L731.9 318.3L743.8 344.1ZM530.5 143.1L503 135.4L502 137.7L529.4 145.4ZM504 135.6L475.9 130L475.1 132.3L503 137.9ZM568.4 472.2L568 460.3L562.9 460.7L563.3 472.2ZM410.3 325.6L398.4 327L399.2 332L410.7 330.7Z"/>
<path fill="#bebdb8" d="M734.9 318.2L721 293.3L718.4 294.4L732.3 319.2ZM556.4 152.7L529.6 142.8L528.4 145.1L555.1 154.9ZM287.6 154L261.8 165.9L262.6 168L288.2 156.2Z"/>
<path fill="#bdbcb8" d="M721.5 294.1L705.6 270.3L703.2 271.6L719 295.3ZM706.2 271.1L688.5 248.7L686.2 250.1L703.8 272.4ZM689.1 249.4L669.7 228.4L667.5 230L686.8 250.9ZM670.4 229.1L649.4 209.7L647.4 211.5L668.2 230.7ZM650.2 210.4L627.7 192.7L625.8 194.5L648.1 212.1ZM628.5 193.2L604.7 177.3L603 179.3L626.6 195.1ZM605.6 177.9L580.6 163.9L579.1 166L603.8 179.8ZM581.5 164.3L555.5 152.4L554.2 154.5L579.9 166.4ZM568 460.7L566.6 448.8L561.6 449.6L562.9 461.1ZM421.8 325.2L409.9 325.6L410.3 330.7L421.8 330.3Z"/>
<path fill="#c1c0bb" d="M366.9 130L338.8 135.6L339 137.9L366.9 132.3ZM387.5 329.2L376 332.4L377.6 337.2L388.7 334.1Z"/>
<path fill="#c1c0bc" d="M339.8 135.4L312.3 143.1L312.6 145.4L340 137.7ZM215.9 194.1L193.5 211.7L194.8 213.4L216.9 196Z"/>
<path fill="#c2c1bd" d="M313.2 142.8L286.4 152.7L286.9 154.9L313.6 145.1ZM194.3 211.1L173.4 230.4L174.8 232L195.5 212.8Z"/>
<path fill="#c3c2bd" d="M287.3 152.4L261.3 164.3L262.1 166.4L287.8 154.5Z"/>
<path fill="#c4c3be" d="M262.2 163.9L237.2 177.9L238.2 179.8L262.9 166Z"/>
<path fill="#c4c3bf" d="M238.1 177.3L214.3 193.2L215.4 195.1L239 179.3ZM155.4 249.8L137.8 272.1L139.5 273.4L156.9 251.3ZM138.4 271.4L122.6 295L124.4 296.1L140 272.7ZM123.1 294.2L109.2 319L111.1 319.9L124.9 295.3ZM109.7 318.1L97.8 343.9L99.7 344.7L111.5 319.1ZM98.2 343L88.3 369.7L90.3 370.3L100.1 343.8ZM88.6 368.8L80.9 396.1L82.9 396.5L90.6 369.4ZM81.1 395.2L75.6 423.1L77.6 423.3L83.2 395.6ZM75.7 422.1L72.4 450.3L74.5 450.3L77.8 422.3ZM72.5 449.3L71.4 477.8L73.5 477.6L74.6 449.4Z"/>
<path fill="#bab9b5" d="M770.6 477.8L769.5 449.3L766.6 449.4L767.7 477.6ZM561.3 426.8L557.2 415.6L552.5 417.6L556.5 428.4ZM456.1 329.3L444.4 326.9L443.6 332L454.9 334.2Z"/>
<path fill="#b9b8b4" d="M769.6 450.3L766.3 422.1L763.4 422.3L766.7 450.3ZM421.5 127.6L393.1 128.7L392.9 131.1L421.1 130ZM552.5 405.5L546.7 395.1L542.4 397.8L548 407.8ZM478 336.4L466.8 332.3L465.2 337.1L476 341.1ZM467.2 332.4L455.7 329.2L454.5 334.1L465.6 337.2Z"/>
<path fill="#b8b7b3" d="M766.4 423.1L760.9 395.2L758 395.6L763.6 423.3ZM448.9 128.7L420.5 127.6L420.1 130L448.3 131.1ZM546.9 395.4L540.3 385.5L536.2 388.5L542.6 398.1ZM540.5 385.8L533.1 376.5L529.3 379.8L536.4 388.8ZM533.4 376.8L525.3 368L521.7 371.6L529.5 380.1ZM508.1 353.3L498.2 346.7L495.5 351L505.1 357.4ZM498.5 346.9L488.1 341.1L485.8 345.6L495.8 351.2ZM488.5 341.2L477.6 336.2L475.7 341L486.1 345.8Z"/>
<path fill="#b7b7b2" d="M761.1 396.1L753.4 368.8L750.6 369.4L758.3 396.5Z"/>
<path fill="#b7b6b2" d="M753.7 369.7L743.8 343L741.1 343.8L750.9 370.3ZM503.1 137.4L475.2 131.8L474.4 134.1L502.1 139.7ZM476.2 132L447.9 128.7L447.4 131L475.4 134.3Z"/>
<path fill="#b6b5b1" d="M744.2 343.9L732.3 318.1L729.7 319.1L741.5 344.7ZM732.8 319L718.9 294.2L716.3 295.3L730.1 319.9ZM555.3 154.4L528.6 144.6L527.4 146.8L553.9 156.6ZM529.5 144.9L502.1 137.2L501.2 139.4L528.3 147.1Z"/>
<path fill="#b5b4b0" d="M719.4 295L703.6 271.4L701.2 272.7L716.8 296.1ZM704.2 272.1L686.6 249.8L684.3 251.3L701.7 273.4ZM687.2 250.6L667.9 229.7L665.7 231.3L684.9 252ZM668.6 230.4L647.7 211.1L645.7 212.8L666.4 232ZM648.5 211.7L626.1 194.1L624.3 196L646.4 213.4ZM626.9 194.7L603.3 178.9L601.6 180.9L625 196.5ZM604.1 179.4L579.3 165.5L577.8 167.6L602.4 181.4ZM580.2 165.9L554.4 154L553 156.2L578.6 168Z"/>
<path fill="#bab9b4" d="M394.1 128.7L365.8 132L365.8 134.3L393.8 131ZM557.4 416L552.4 405.1L547.8 407.5L552.6 417.9Z"/>
<path fill="#bbbab5" d="M366.8 131.8L338.9 137.4L339.1 139.7L366.8 134.1Z"/>
<path fill="#bbbbb6" d="M339.9 137.2L312.5 144.9L312.9 147.1L340 139.4Z"/>
<path fill="#bdbcb7" d="M313.4 144.6L286.7 154.4L287.3 156.6L313.8 146.8Z"/>
<path fill="#c3c2be" d="M174.1 229.7L154.8 250.6L156.3 252L175.5 231.3ZM365.6 336.2L354.7 341.2L357.1 345.8L367.5 341Z"/>
<path fill="#2f2f2e" d="M768.2 477.6L767.1 449.3L757 443.6L758 471ZM767.2 450.3L763.9 422.2L753.8 417.4L757 444.6ZM764 423.2L758.5 395.5L748.6 391.5L754 418.3ZM758.8 396.4L751.1 369.2L741.4 366.1L748.9 392.4ZM751.4 370.1L741.6 343.6L732.3 341.3L741.7 367ZM742 344.5L730.1 318.8L721.2 317.3L732.6 342.2ZM730.6 319.7L716.8 295L708.2 294.3L721.6 318.2ZM717.3 295.9L701.6 272.4L693.5 272.4L708.7 295.1ZM702.1 273.1L684.6 251L677.1 251.6L694.1 273.1ZM685.3 251.7L666.1 230.9L659.2 232.3L677.7 252.4ZM666.8 231.6L646 212.4L639.7 214.4L659.8 232.9ZM646.7 213.1L624.6 195.6L619 198L640.5 215ZM625.3 196.1L601.8 180.4L597 183.4L619.7 198.6ZM602.7 180.9L578 167.1L573.9 170.5L597.8 183.9ZM578.9 167.6L553.2 155.7L549.9 159.5L574.8 170.9ZM554.1 156.1L527.6 146.3L525.1 150.4L550.8 159.8ZM528.5 146.6L501.3 138.9L499.7 143.2L526 150.7ZM502.2 139.2L474.5 133.7L473.8 138.1L500.6 143.5ZM475.5 133.8L447.4 130.5L447.5 135.1L474.7 138.3ZM448.4 130.6L420.1 129.5L421.1 134.1L448.5 135.1ZM421.1 129.5L392.8 130.6L394.7 135.1L422.1 134.1ZM393.8 130.5L365.7 133.8L368.5 138.3L395.7 135.1ZM366.7 133.7L339 139.2L342.6 143.5L369.4 138.1ZM339.9 138.9L312.7 146.6L317.2 150.7L343.5 143.2ZM313.6 146.3L287.1 156.1L292.4 159.8L318.1 150.4ZM288 155.7L262.3 167.6L268.4 170.9L293.3 159.5ZM263.2 167.1L238.5 180.9L245.4 183.9L269.3 170.5ZM239.4 180.4L215.9 196.1L223.5 198.6L246.2 183.4ZM216.6 195.6L194.5 213.1L202.7 215L224.2 198ZM195.2 212.4L174.4 231.6L183.4 232.9L203.5 214.4ZM175.1 230.9L155.9 251.7L165.5 252.4L184 232.3ZM156.6 251L139.1 273.1L149.1 273.1L166.1 251.6ZM139.6 272.4L123.9 295.9L134.5 295.1L149.7 272.4ZM124.4 295L110.6 319.7L121.6 318.2L135 294.3Z"/>
<path fill="#3c3b3a" d="M111.1 318.8L99.2 344.5L110.6 342.2L122 317.3Z"/>
<path fill="#4a4a48" d="M99.6 343.6L89.8 370.1L101.5 367L110.9 341.3Z"/>
<path fill="#595856" d="M90.1 369.2L82.4 396.4L94.3 392.4L101.8 366.1Z"/>
<path fill="#666664" d="M82.7 395.5L77.2 423.2L89.2 418.3L94.6 391.5Z"/>
<path fill="#747370" d="M77.3 422.2L74 450.3L86.2 444.6L89.4 417.4Z"/>
<path fill="#d0cfca" d="M758.5 471L757.5 443.6L743.1 446.2L744.1 472.5ZM757.5 444.5L754.3 417.3L740.1 421.1L743.2 447.1ZM754.5 418.3L749.1 391.4L735.1 396.3L740.2 422ZM749.3 392.3L741.9 365.9L728.2 371.9L735.3 397.1ZM742.2 366.8L732.7 341.1L719.4 348.1L728.5 372.8ZM733.1 342L721.6 317.1L708.8 325.2L719.8 349ZM722 317.9L708.7 294L696.4 303.1L709.2 326ZM709.1 294.8L693.9 272.1L682.3 282L696.9 303.9ZM694.5 272.8L677.5 251.3L666.6 262.2L682.8 282.8ZM678.1 252L659.5 231.9L649.4 243.6L667.2 262.9ZM660.2 232.6L640.1 214L630.7 226.4L650 244.2ZM640.8 214.6L619.3 197.6L610.8 210.8L631.4 227ZM620 198.2L597.3 183L589.7 196.7L611.6 211.3ZM598.1 183.4L574.2 170.1L567.6 184.4L590.5 197.2ZM575 170.5L550.1 159L544.6 173.8L568.4 184.8ZM551 159.4L525.3 149.9L520.8 165.1L545.5 174.2ZM526.2 150.2L499.8 142.8L496.5 158.3L521.7 165.4ZM500.7 143L473.8 137.6L471.6 153.4L497.3 158.5ZM474.8 137.8L447.6 134.6L446.5 150.4L472.5 153.5ZM448.5 134.6L421.1 133.6L421.1 149.5L447.4 150.5ZM422.1 133.6L394.7 134.6L395.8 150.5L422.1 149.5ZM395.6 134.6L368.4 137.8L370.7 153.5L396.7 150.4ZM369.4 137.6L342.5 143L345.9 158.5L371.6 153.4ZM343.4 142.8L317 150.2L321.5 165.4L346.7 158.3ZM317.9 149.9L292.2 159.4L297.7 174.2L322.4 165.1ZM293.1 159L268.2 170.5L274.8 184.8L298.6 173.8ZM269 170.1L245.1 183.4L252.7 197.2L275.6 184.4ZM245.9 183L223.2 198.2L231.6 211.3L253.5 196.7ZM223.9 197.6L202.4 214.6L211.8 227L232.4 210.8ZM203.1 214L183 232.6L193.2 244.2L212.5 226.4ZM183.7 231.9L165.1 252L176 262.9L193.8 243.6ZM165.7 251.3L148.7 272.8L160.4 282.8L176.6 262.2ZM149.3 272.1L134.1 294.8L146.3 303.9L160.9 282ZM134.5 294L121.2 317.9L134 326L146.8 303.1ZM121.6 317.1L110.1 342L123.4 349L134.4 325.2ZM110.5 341.1L101 366.8L114.7 372.8L123.8 348.1ZM101.3 365.9L93.9 392.3L107.9 397.1L115 371.9ZM94.1 391.4L88.7 418.3L103 422L108.1 396.3ZM88.9 417.3L85.7 444.5L100 447.1L103.1 421.1ZM85.7 443.6L84.7 471L99.1 472.5L100.1 446.2ZM706.7 471.8L705.8 448.6L689.3 450.6L690.1 472.4ZM705.9 449.4L703.2 426.3L686.8 429.6L689.4 451.3ZM703.3 427.1L698.8 404.4L682.6 408.9L686.9 430.4ZM699 405.1L692.7 382.8L676.9 388.7L682.8 409.7ZM692.9 383.5L684.9 361.8L669.6 368.9L677.1 389.4ZM685.2 362.5L675.4 341.4L660.7 349.7L669.9 369.6ZM675.8 342.1L664.5 321.9L650.4 331.4L661 350.4ZM664.9 322.5L652 303.2L638.6 313.8L650.8 332ZM652.4 303.9L638.1 285.6L625.6 297.3L639.1 314.5ZM638.6 286.3L622.8 269.2L611.2 281.8L626.1 297.9ZM623.4 269.8L606.3 254L595.7 267.5L611.8 282.4ZM607 254.5L588.7 240.2L579.1 254.5L596.3 268ZM589.4 240.6L570.1 227.7L561.6 242.8L579.8 255ZM570.7 228.1L550.5 216.8L543.2 232.6L562.2 243.2ZM551.2 217.2L530.1 207.4L524 223.7L543.9 232.9ZM530.8 207.7L509.1 199.7L504.2 216.5L524.7 224ZM509.8 199.9L487.5 193.6L483.9 210.8L504.9 216.7ZM488.2 193.8L465.5 189.3L463.2 206.7L484.7 211ZM466.3 189.4L443.2 186.7L442.3 204.2L464 206.8ZM444 186.8L420.8 185.9L421.2 203.5L443 204.3ZM421.6 185.9L398.4 186.8L400.2 204.3L422 203.5ZM399.2 186.7L376.1 189.4L379.2 206.8L400.9 204.2ZM376.9 189.3L354.2 193.8L358.5 211L380 206.7ZM354.9 193.6L332.6 199.9L338.3 216.7L359.3 210.8ZM333.3 199.7L311.6 207.7L318.5 224L339 216.5ZM312.3 207.4L291.2 217.2L299.3 232.9L319.2 223.7ZM291.9 216.8L271.7 228.1L281 243.2L300 232.6ZM272.3 227.7L253 240.6L263.4 255L281.6 242.8ZM253.7 240.2L235.4 254.5L246.9 268L264.1 254.5ZM236.1 254L219 269.8L231.4 282.4L247.5 267.5ZM219.6 269.2L203.8 286.3L217.1 297.9L232 281.8ZM204.3 285.6L190 303.9L204.1 314.5L217.6 297.3ZM190.4 303.2L177.5 322.5L192.4 332L204.6 313.8ZM177.9 321.9L166.6 342.1L182.2 350.4L192.8 331.4ZM167 341.4L157.2 362.5L173.3 369.6L182.5 349.7ZM157.5 361.8L149.5 383.5L166.1 389.4L173.6 368.9ZM149.7 382.8L143.4 405.1L160.4 409.7L166.3 388.7ZM143.6 404.4L139.1 427.1L156.3 430.4L160.6 408.9ZM139.2 426.3L136.5 449.4L153.8 451.3L156.4 429.6ZM136.6 448.6L135.7 471.8L153.1 472.4L153.9 450.6ZM678 472.4L677.2 451.5L660 452.9L660.7 472.3ZM677.3 452.2L674.8 431.5L657.8 434.3L660 453.6ZM674.9 432.2L670.9 411.8L654.1 415.8L657.9 434.9ZM671 412.5L665.4 392.4L648.9 397.8L654.2 416.5ZM665.6 393.1L658.4 373.5L642.4 380.2L649.1 398.4ZM658.7 374.2L649.9 355.3L634.5 363.1L642.7 380.8ZM650.3 355.9L640.1 337.7L625.3 346.8L634.8 363.7ZM640.4 338.3L628.9 321L614.9 331.2L625.7 347.3ZM629.3 321.6L616.4 305.2L603.2 316.4L615.3 331.7ZM616.8 305.7L602.7 290.4L590.5 302.7L603.7 316.9ZM603.2 290.9L587.9 276.8L576.7 289.9L590.9 303.1ZM588.4 277.2L572 264.3L561.9 278.3L577.2 290.4ZM572.6 264.7L555.3 253.2L546.3 267.9L562.4 278.7ZM555.9 253.5L537.7 243.3L529.9 258.8L546.8 268.3ZM538.3 243.7L519.4 234.9L512.8 250.9L530.5 259.1ZM520.1 235.2L500.5 228L495.2 244.5L513.4 251.2ZM501.2 228.2L481.1 222.6L477.1 239.4L495.8 244.7ZM481.8 222.7L461.4 218.7L458.7 235.7L477.8 239.5ZM462.1 218.8L441.4 216.3L440 233.6L459.3 235.8ZM442.1 216.4L421.2 215.6L421.3 232.9L440.7 233.6ZM422 215.6L401.1 216.4L402.5 233.6L421.9 232.9ZM401.8 216.3L381.1 218.8L383.9 235.8L403.2 233.6ZM381.8 218.7L361.4 222.7L365.4 239.5L384.5 235.7ZM362.1 222.6L342 228.2L347.4 244.7L366.1 239.4ZM342.7 228L323.1 235.2L329.8 251.2L348 244.5ZM323.8 234.9L304.9 243.7L312.7 259.1L330.4 250.9ZM305.5 243.3L287.3 253.5L296.4 268.3L313.3 258.8ZM287.9 253.2L270.6 264.7L280.8 278.7L296.9 267.9ZM271.2 264.3L254.8 277.2L266 290.4L281.3 278.3ZM255.3 276.8L240 290.9L252.3 303.1L266.5 289.9ZM240.5 290.4L226.4 305.7L239.5 316.9L252.7 302.7ZM226.8 305.2L213.9 321.6L227.9 331.7L240 316.4ZM214.3 321L202.8 338.3L217.5 347.3L228.3 331.2ZM203.1 337.7L192.9 355.9L208.4 363.7L217.9 346.8ZM193.3 355.3L184.5 374.2L200.5 380.8L208.7 363.1ZM184.8 373.5L177.6 393.1L194.1 398.4L200.8 380.2ZM177.8 392.4L172.2 412.5L189 416.5L194.3 397.8ZM172.3 411.8L168.3 432.2L185.3 434.9L189.1 415.8ZM168.4 431.5L165.9 452.2L183.2 453.6L185.4 434.3ZM166 451.5L165.2 472.4L182.5 472.3L183.2 452.9ZM296.5 395.1L290.7 405.5L295.2 407.8L300.8 397.8Z"/>
<path fill="#ccccc9" d="M744.6 472.5L743.6 446.2L741.6 446.3L742.6 472.4ZM396.7 149.9L370.6 153L370.9 154.9L396.8 151.9ZM254 197.6L232.2 212.1L233.6 214L255.2 199.6ZM143.5 329.7L132.9 352.8L135.1 353.6L145.6 330.8ZM115.1 422.8L112.1 447.9L114.8 448.1L117.7 423.2ZM715.5 401.5L708.9 377.8L705.5 378.9L712.1 402.2ZM709.1 378.6L700.6 355.5L697.4 356.8L705.8 379.6ZM700.9 356.3L690.7 334L687.5 335.5L697.7 357.6ZM492.4 177.7L468.3 172.9L467.7 176.3L491.5 181.1ZM469.1 173L444.7 170.1L444.4 173.6L468.5 176.4ZM245.7 229.1L226.6 244.2L228.6 246.5L247.5 231.6ZM132.8 401.9L128.1 425.6L130.8 426L135.5 402.5ZM130.4 425.1L127.6 448.8L130 449L132.8 425.4ZM129.5 448.1L128.6 471.9L130.6 471.9L131.5 448.3ZM176.1 369.9L168.6 390.2L170.9 390.9L178.3 370.8ZM321.6 229.7L302.3 238.6L303.4 240.7L322.5 231.9ZM164.6 430.9L162.1 451.9L164.5 452.1L167 431.3ZM661.2 472.3L660.5 452.9L658.6 453L659.4 472.3ZM403.1 233.1L383.8 235.4L384.1 237.2L403.3 235ZM297.4 268.7L281.3 279.4L282.6 281.3L298.6 270.6ZM217.2 367.5L209.4 384.5L211.5 385.3L219.2 368.5ZM196.7 436.1L194.5 454.4L197.1 454.6L199.2 436.5ZM636 420.8L631.2 403.6L628 404.6L632.8 421.6ZM631.4 404.2L625.2 387.4L622.1 388.6L628.2 405.2ZM625.4 387.9L617.9 371.6L615 373.1L622.3 389.2ZM473.4 257.7L455.8 254.2L455.3 257.5L472.6 260.9ZM456.4 254.3L438.6 252.2L438.3 255.5L455.9 257.6ZM293.9 295.7L280 306.7L281.9 308.9L295.6 298.1ZM212.4 421.5L209 438.6L211.5 439L214.9 422.1ZM211.1 438.4L209.1 455.6L211.3 455.7L213.4 438.7ZM210.9 455.1L210.2 472.3L212.1 472.3L212.8 455.3Z"/>
<path fill="#cdcdca" d="M743.7 447.1L740.6 421L738.6 421.3L741.7 447.2ZM743.1 472.4L742.1 446.3L739.7 446.5L740.7 472.4ZM276 185.3L253.2 198L254.4 200L277.1 187.4ZM741.2 472.4L740.2 446.4L736.7 446.7L737.7 472.3ZM195.8 245.6L178.2 264.7L180.8 266.9L198.3 248ZM167.7 286.9L153.5 308.1L155.5 309.3L169.6 288.3ZM155.5 308.3L143.1 330.5L145.2 331.5L157.5 309.6ZM119.8 398.9L114.9 423.7L117.6 424.1L122.5 399.5ZM117.3 423.1L114.3 448L117.4 448.2L120.3 423.6ZM114.4 447.2L113.4 472.2L116.5 472.1L117.5 447.4ZM117 447.3L116 472.1L119.5 472.1L120.4 447.6ZM445.5 170.2L421 169.2L420.9 172.7L445.2 173.7ZM119.9 447.5L119 472.1L122.4 472L123.4 447.8ZM128.2 424.7L125.4 448.7L128.1 448.9L130.9 425.1ZM690.6 472.4L689.8 450.5L688 450.7L688.9 472.4ZM184.9 351L175.8 370.6L178 371.5L187 352ZM158.4 450.9L157.6 472.4L160 472.4L160.8 451.1ZM302.9 238.3L284.3 248.7L285.6 250.7L304 240.4ZM660.5 453.5L658.2 434.2L656.4 434.5L658.6 453.7ZM659.9 472.3L659.1 453L656.9 453.2L657.6 472.3ZM313.7 259.6L296.8 269L298 270.9L314.7 261.6ZM658.1 472.3L657.4 453.1L654.1 453.4L654.8 472.3ZM254.6 304.5L241.5 318.7L244 320.8L256.9 306.9ZM234.7 335.8L224.2 351.4L226.2 352.6L236.5 337.1ZM226.1 351.8L216.9 368.1L218.9 369.1L228 353ZM200.2 418.5L196.6 436.7L199.1 437.1L202.7 419.1ZM198.7 436.4L196.6 454.6L199.5 454.8L201.6 436.8ZM196.6 454L195.9 472.3L198.9 472.3L199.6 454.2ZM199.1 454.2L198.4 472.3L201.6 472.3L202.3 454.4ZM439.2 252.2L421.3 251.5L421.3 254.8L438.9 255.5ZM201.8 454.4L201.1 472.3L204.4 472.3L205.1 454.7ZM209.1 438L207 455.4L209.6 455.6L211.6 438.4Z"/>
<path fill="#cececb" d="M740.7 421.9L735.6 396.1L733.7 396.6L738.8 422.2ZM742.2 447.2L739.1 421.2L736.7 421.6L739.8 447.3ZM298.9 174.7L275.2 185.7L276.3 187.8L299.8 176.9ZM738.2 472.3L737.2 446.6L734.1 446.8L735.1 472.3ZM735.6 472.3L734.6 446.8L732.2 446.9L733.2 472.3ZM135 352.6L126.2 376.3L128.8 377.1L137.5 353.7ZM122 399.4L117.1 424L120.2 424.4L125 400.1ZM124.5 400L119.7 424.4L123.1 424.9L127.9 400.8ZM119.8 423.5L116.9 448.2L120.4 448.4L123.2 424ZM398.1 170.1L373.7 173L374.2 176.4L398.3 173.6ZM374.5 172.9L350.4 177.7L351.2 181.1L375 176.3ZM127.4 400.7L122.6 424.8L126 425.3L130.8 401.4ZM122.7 423.9L119.9 448.4L123.3 448.6L126.2 424.4ZM227.2 243.7L209.3 260.2L211.5 262.4L229.2 246ZM209.9 259.6L193.4 277.5L195.7 279.5L212.1 261.8ZM193.9 276.8L178.9 296L181.4 297.8L196.3 278.8ZM179.4 295.3L165.8 315.5L168.5 317.1L181.9 297.1ZM166.3 314.8L154.4 336.1L157.1 337.4L168.9 316.4ZM154.7 335.3L144.6 357.4L147.4 358.6L157.5 336.7ZM144.9 356.7L136.4 379.5L139.4 380.4L147.7 357.8ZM136.7 378.7L130.1 402.1L133.1 402.8L139.7 379.6ZM130.3 401.3L125.5 425.2L128.6 425.6L133.3 402ZM125.7 424.4L122.8 448.5L125.9 448.7L128.7 424.8ZM122.9 447.7L121.9 472L125 472L126 447.9ZM125.5 447.9L124.5 472L127.2 472L128.2 448.1ZM687.4 430.3L683.1 408.8L681.4 409.2L685.7 430.6ZM379.9 206.2L358.4 210.5L358.8 212.2L380.2 207.9ZM689.4 472.4L688.5 450.6L686.2 450.8L687 472.4ZM232.5 282.4L217.7 298.4L219.5 299.9L234.2 284.1ZM195.1 332.8L184.5 351.6L186.6 352.7L197.1 334ZM165 410L160.8 431.1L163.1 431.4L167.3 410.6ZM285 248.3L267.2 260.2L268.6 262.1L286.2 250.4ZM179.6 371.4L172.2 391.3L174.5 392.1L181.8 372.3ZM172.4 390.7L166.6 411.2L169 411.7L174.7 391.4ZM166.8 410.5L162.7 431.4L165 431.7L169.1 411ZM162.8 430.6L160.3 451.8L162.6 452L165.1 431ZM160.3 451.1L159.5 472.4L161.9 472.4L162.7 451.3ZM658.4 434.8L654.6 415.7L652.7 416.2L656.5 435.1ZM659.1 453.6L656.9 434.4L654.7 434.8L656.9 453.8ZM330.7 251.8L313.1 259.9L314.2 261.9L331.6 253.8ZM655.3 472.3L654.6 453.3L651.6 453.6L652.4 472.3ZM652.9 472.3L652.1 453.5L649.9 453.7L650.6 472.3ZM211.3 384.5L204.9 401.9L207.3 402.7L213.7 385.5ZM202.2 419L198.6 437L201.5 437.5L205.1 419.7ZM204.6 419.6L201.1 437.4L204.3 437.9L207.8 420.4ZM201.2 436.8L199 454.8L202.3 455L204.4 437.3ZM404.6 252.2L386.8 254.3L387.3 257.6L404.9 255.5ZM387.4 254.2L369.8 257.7L370.6 260.9L387.9 257.5ZM207.3 420.2L203.8 437.8L207.1 438.3L210.5 421ZM203.9 437.2L201.8 455L205.1 455.3L207.2 437.7ZM280.5 306.3L267.5 318.3L269.6 320.4L282.4 308.5ZM267.9 317.9L255.9 330.9L258.1 332.8L270 320ZM256.3 330.4L245.3 344.3L247.7 346L258.5 332.3ZM245.7 343.8L235.9 358.5L238.4 360.1L248.1 345.5ZM236.2 358L227.5 373.5L230.1 374.8L238.7 359.6ZM227.8 372.9L220.4 389L223.1 390.1L230.4 374.3ZM220.6 388.4L214.5 405L217.3 405.9L223.3 389.6ZM214.7 404.4L209.9 421.5L212.7 422.2L217.5 405.4ZM210 420.9L206.6 438.3L209.5 438.7L212.9 421.6ZM206.7 437.6L204.6 455.2L207.5 455.5L209.6 438.1ZM204.6 454.6L203.9 472.3L206.9 472.3L207.6 454.9ZM207.1 454.8L206.4 472.3L209 472.3L209.7 455Z"/>
<path fill="#cfcfcc" d="M735.8 397L728.7 371.7L726.8 372.3L733.9 397.5ZM729 372.6L719.9 348L718 348.7L727.1 373.2ZM739.2 422.1L734.1 396.5L731.8 397L736.9 422.5ZM322.6 166L298.1 175.1L299 177.2L323.4 168.3ZM197.9 247.7L180.4 266.6L182.8 268.6L200.1 249.8ZM733.7 472.3L732.7 446.9L730.3 447.1L731.3 472.2ZM169.2 288L155.1 309.1L157.1 310.3L171.1 289.4ZM731.8 472.2L730.8 447L728 447.2L729 472.2ZM145.2 330.5L134.6 353.4L137.1 354.5L147.6 331.8ZM137 353.5L128.3 377L131.3 377.9L139.9 354.6ZM726.8 472.1L725.9 447.3L722.3 447.6L723.3 472.1ZM131.1 376.9L124.3 400.8L127.7 401.6L134.4 378ZM351.2 177.5L327.5 184.2L328.6 187.5L352 180.9ZM328.3 183.9L305.3 192.4L306.6 195.6L329.4 187.2ZM142.1 355.5L133.6 378.6L136.9 379.6L145.3 356.8ZM133.9 377.8L127.2 401.5L130.6 402.2L137.2 378.9ZM683.3 409.6L677.4 388.5L675.7 389L681.6 410ZM688.6 451.4L686 429.7L683.7 430.1L686.2 451.5ZM687.5 472.4L686.7 450.8L684.3 451L685.1 472.4ZM206.7 315.4L194.7 333.4L196.7 334.6L208.6 316.8ZM177.8 370.6L170.4 390.8L172.7 391.5L180 371.5ZM170.6 390.1L164.8 410.7L167.1 411.3L172.9 390.8ZM267.8 259.7L251.1 272.9L252.6 274.7L269.2 261.7ZM222.5 301.5L209.3 318.2L211.3 319.6L224.3 303ZM209.8 317.6L197.9 335.4L200 336.6L211.7 319ZM198.3 334.7L187.9 353.3L190 354.4L200.3 336ZM188.2 352.7L179.3 372L181.5 372.9L190.3 353.8ZM654.7 416.4L649.4 397.6L647.6 398.2L652.9 416.8ZM649.6 398.3L642.9 380L641.1 380.7L647.8 398.8ZM657 435.1L653.2 416.1L651 416.6L654.8 435.4ZM348.3 245.3L330.1 252L331 254.1L349 247.4ZM256.6 306.5L243.7 320.5L245.9 322.4L258.6 308.6ZM651.1 472.3L650.4 453.7L648.2 453.9L648.9 472.3ZM236.1 336.8L225.7 352.3L227.6 353.5L237.9 338.1ZM649.4 472.3L648.7 453.8L646.1 454L646.8 472.3ZM218.8 368.3L211 385.1L213.4 386.1L221.1 369.5ZM213.2 385.3L206.9 402.6L209.7 403.5L215.9 386.5ZM644.8 472.3L644.1 454.2L640.9 454.4L641.6 472.3ZM209.4 402.7L204.4 420.2L207.7 421L212.5 403.7ZM370.4 257.6L353.2 262.4L354.2 265.6L371.2 260.8ZM353.8 262.2L337 268.4L338.2 271.5L354.8 265.4ZM218 387.4L211.8 404.2L215 405.2L221.1 388.6ZM212 403.6L207.2 420.8L210.4 421.6L215.2 404.6Z"/>
<path fill="#d0d0cd" d="M720.2 348.8L709.2 324.9L707.4 325.8L718.4 349.5ZM422.1 149L395.8 150L395.9 152L422 150.9ZM734.4 397.3L727.3 372.2L725 372.9L732 397.9ZM347 159.2L321.8 166.3L322.5 168.5L347.5 161.5ZM737.4 422.4L732.3 396.9L728.9 397.7L733.9 422.9ZM734.6 447.7L731.6 422.3L729.3 422.6L732.2 447.8ZM199.7 249.5L182.4 268.2L184.2 269.7L201.4 251.1ZM184.4 268.8L168.7 288.7L170.6 290.1L186.2 270.3ZM170.7 289.1L156.7 310L159 311.4L172.9 290.6ZM157.1 309.3L144.8 331.3L147.2 332.5L159.4 310.7ZM159 310.4L146.8 332.3L149.5 333.7L161.6 312ZM147.2 331.5L136.7 354.3L139.5 355.4L149.9 332.9ZM601.3 224.9L580.6 211.1L578.8 214L599.2 227.7ZM149.5 332.7L139.1 355.2L142.3 356.5L152.6 334.2ZM306 192.1L283.7 202.4L285.3 205.5L307.3 195.3ZM284.5 202L263 214L264.8 217L286 205.1ZM177 293.6L163.3 314L166.3 315.8L179.8 295.6ZM163.7 313.3L151.7 334.7L154.8 336.3L166.7 315.1ZM677.6 389.2L670 368.7L668.4 369.4L675.9 389.8ZM400.9 203.8L379.1 206.3L379.4 208.1L401 205.5ZM219.6 299L206.3 316L208.2 317.4L221.5 300.6ZM186.5 351.8L177.5 371.3L179.8 372.2L188.7 352.9ZM251.6 272.4L236 286.9L237.7 288.6L253.2 274.3ZM643.1 380.6L635 362.9L633.3 363.8L641.4 381.3ZM421.9 232.4L402.5 233.1L402.6 235L421.9 234.2ZM653.3 416.7L648.1 398.1L646 398.8L651.2 417.2ZM366.3 240.3L347.7 245.5L348.4 247.6L366.8 242.4ZM655.2 435.3L651.5 416.5L648.3 417.2L652 435.8ZM652.2 454.2L650 435.5L647.8 435.9L649.9 454.3ZM258.3 308.2L245.5 322L247.2 323.5L259.9 309.8ZM247.3 322.7L235.7 337.3L237.5 338.7L249 324.1ZM237.5 337.9L227.2 353.3L229.4 354.6L239.6 339.4ZM227.5 352.7L218.5 368.9L220.8 370L229.8 354.1ZM229.3 353.8L220.4 369.8L223 371.2L231.8 355.3ZM220.7 369.3L213 385.9L215.7 387L223.3 370.6ZM553.1 291.6L538 281.5L536.3 284.3L551.1 294.2ZM222.8 370.4L215.2 386.9L218.3 388.1L225.8 371.9ZM337.5 268.2L321.2 275.7L322.7 278.6L338.8 271.3ZM321.8 275.4L306.2 284.2L307.9 287L323.3 278.4ZM243.4 342.2L233.5 357.1L236.3 358.8L246.1 344.1ZM233.8 356.6L225 372.2L228 373.7L236.6 358.3Z"/>
<path fill="#d1d1ce" d="M709.6 325.7L696.8 302.8L695.1 303.8L707.8 326.6ZM697.3 303.6L682.7 281.8L681.1 282.9L695.6 304.6ZM718.8 349.3L707.9 325.6L705.7 326.6L716.6 350.2ZM371.7 154.3L346.1 159.4L346.6 161.7L372.1 156.6ZM732.5 397.8L725.5 372.7L722.1 373.8L729.1 398.5ZM214.3 228.6L195.2 246.2L197.7 248.6L216.5 231.2ZM734.4 422.8L729.4 397.5L726.3 398.2L731.3 423.2ZM216.2 230.8L197.3 248.3L199.5 250.5L218.2 233.1ZM732.7 447.8L729.7 422.6L727.4 422.9L730.3 447.9ZM201.1 250.8L183.8 269.4L185.6 270.9L202.7 252.4ZM185.8 269.9L170.2 289.8L172.4 291.3L187.9 271.7ZM172.5 290.3L158.6 311.2L161.2 312.8L175 292.1ZM725.9 448.2L723 423.5L719.5 424L722.4 448.4ZM637.7 256.1L619.4 239.2L617.1 241.8L635.2 258.5ZM581.4 211.5L559.7 199.4L558.1 202.5L579.5 214.5ZM174.6 291.8L160.8 312.5L163.7 314.3L177.4 293.9ZM161.2 311.8L149.1 333.4L152.2 335L164.2 313.6ZM263.7 213.6L243.3 227.3L245.3 230L265.5 216.5ZM244 226.8L224.6 242L226.9 244.6L246 229.5ZM207.8 257.5L191.1 275.6L193.8 277.8L210.3 260ZM191.7 274.9L176.5 294.3L179.3 296.3L194.3 277.2ZM670.3 369.4L661.2 349.5L659.6 350.3L668.7 370.1ZM686.2 430.5L681.9 409.1L679.6 409.7L683.8 430.8ZM248 268.1L232 282.9L233.7 284.6L249.5 269.9ZM686.7 451.5L684.2 430L681.8 430.4L684.3 451.7ZM233.8 283.7L219.2 299.6L221 301.1L235.5 285.4ZM208.2 316.5L196.3 334.4L198.3 335.6L210.2 317.9ZM196.7 333.7L186.2 352.5L188.3 353.6L198.7 335ZM635.3 363.5L625.8 346.5L624.1 347.5L633.6 364.4ZM626.1 347.1L615.3 330.9L613.8 332L624.5 348.1ZM641.8 381.1L633.7 363.5L631.7 364.6L639.8 382ZM384.7 236.6L365.7 240.4L366.2 242.6L385 238.8ZM651.7 417.1L646.4 398.6L643.3 399.6L648.4 417.9ZM268.3 291.9L254.1 305L256.5 307.3L270.4 294.4ZM652.5 435.8L648.8 417.1L645.9 417.8L649.6 436.2ZM270.1 294.1L256.1 307L258.2 309L272 296.3ZM650.4 454.3L648.3 435.8L646 436.1L648.2 454.5ZM259.5 309.5L246.9 323.2L248.6 324.6L261.1 311.1ZM248.6 323.8L237.1 338.4L239.2 339.9L250.6 325.5ZM239.2 339.1L229 354.3L231.5 355.9L241.6 340.8ZM644.2 454.8L642 436.8L638.8 437.3L640.9 455ZM579.7 314.4L566.4 302L564.2 304.5L577.3 316.7ZM538.5 281.8L522.7 272.9L521.2 275.9L536.8 284.6ZM241.2 340.5L231.1 355.6L233.9 357.3L243.8 342.5ZM231.4 355.1L222.5 370.9L225.5 372.4L234.2 356.8ZM306.7 283.9L291.8 293.8L293.7 296.5L308.4 286.7ZM292.3 293.5L278.2 304.6L280.3 307.1L294.2 296.1ZM265.9 315.9L253.8 329.1L256.3 331.2L268.3 318.2ZM254.2 328.6L243.1 342.7L245.7 344.6L256.7 330.7Z"/>
<path fill="#d2d2cf" d="M683.2 282.5L667 261.9L665.4 263.1L681.6 283.6ZM447.4 150L421.1 149L421.1 150.9L447.2 152ZM708.3 326.4L695.5 303.6L693.5 304.8L706.2 327.4ZM725.7 373.6L716.7 349.2L713.5 350.5L722.4 374.6ZM234 213.1L213.6 229.2L215.9 231.8L236 215.8ZM731.8 423.2L726.8 398.1L724.4 398.6L729.4 423.5ZM217.9 232.8L199.1 250.1L200.8 251.7L219.4 234.5ZM219.1 234.2L200.4 251.4L202.1 253L220.6 235.9ZM730.8 447.9L727.9 422.8L725.1 423.2L728.1 448.1ZM202.4 252.1L185.2 270.6L187.3 272.3L204.3 254ZM203.9 253.6L186.9 272L189.3 274L206.1 255.8ZM187.5 271.4L172 291L174.5 292.8L189.8 273.4ZM668.8 292.5L653.4 273L650.7 275.3L665.9 294.5ZM653.9 273.7L637.1 255.4L634.6 257.9L651.2 275.9ZM560.5 199.8L537.9 189.4L536.5 192.6L558.8 202.8ZM189.4 273L174.1 292.5L176.9 294.5L192.1 275.3ZM661.5 350.2L650.8 331.1L649.3 332L659.9 351ZM422 203L400.1 203.8L400.3 205.6L422 204.7ZM682.1 409.8L676.2 388.9L673.9 389.6L679.8 410.4ZM264.5 255.1L247.4 268.6L249 270.4L265.9 257.1ZM249.2 269.6L233.3 284.2L235 285.9L250.7 271.4ZM684.8 451.7L682.3 430.3L679.9 430.7L682.4 451.8ZM221.1 300.3L207.8 317.1L209.7 318.5L222.9 301.8ZM615.7 331.4L603.6 316.1L602.2 317.3L614.1 332.5ZM440.7 233.1L421.3 232.4L421.3 234.2L440.6 235ZM634 364.1L624.6 347.2L622.7 348.4L632 365.1ZM646.6 399.2L640 381.2L636.9 382.5L643.5 400.2ZM282.9 280.5L267.7 292.4L269.9 294.9L284.8 283.1ZM650.1 436.1L646.4 417.7L644.2 418.2L647.9 436.5ZM271.6 295.9L257.8 308.7L259.4 310.3L273.1 297.6ZM272.8 297.3L259.1 309.9L260.7 311.5L274.2 299ZM648.7 454.4L646.5 436.1L644 436.5L646.1 454.6ZM260.8 310.7L248.2 324.3L250.2 326L262.6 312.5ZM262.2 312.2L249.8 325.7L252 327.6L264.3 314.3ZM250.2 325.2L238.8 339.6L241.2 341.3L252.4 327.1ZM602.4 341L591.2 326.8L588.7 328.9L599.7 343ZM591.6 327.2L579.2 313.9L576.9 316.3L589.1 329.4ZM523.2 273.2L506.7 265.6L505.5 268.7L521.7 276.2ZM252 326.8L240.8 341L243.5 343L254.5 328.9Z"/>
<path fill="#d3d3d0" d="M667.5 262.5L649.7 243.3L648.3 244.6L666 263.8ZM650.3 243.9L631.1 226.1L629.7 227.6L648.9 245.3ZM521.9 164.9L496.6 157.8L496.1 159.7L521.2 166.8ZM497.5 158L471.7 152.9L471.4 154.8L497 159.9ZM696 304.3L681.5 282.6L679.5 284L693.9 305.6ZM276.8 186.9L254.2 199.6L256 202.5L278.4 190ZM729.6 398.4L722.6 373.6L719.6 374.5L726.5 399.1ZM235.8 215.4L215.5 231.4L217.5 233.7L237.6 217.9ZM237.3 217.5L217.2 233.3L218.7 235.1L238.6 219.4ZM729.9 423.4L724.9 398.5L722.6 399.1L727.5 423.8ZM728.6 448L725.6 423.1L722.5 423.6L725.4 448.2ZM221.7 237.2L203.3 254.2L205.5 256.4L223.7 239.6ZM682.1 312.5L668.3 291.8L665.4 293.9L679 314.3ZM538.7 189.7L515.4 181.1L514.3 184.4L537.3 192.9ZM223.4 239.2L205.1 256.1L207.6 258.5L225.6 241.8ZM205.7 255.4L188.9 273.7L191.5 275.9L208.2 257.9ZM639.5 314.2L625.9 297L624.6 298.1L638.1 315.2ZM282 243.5L263.9 255.6L265.3 257.5L283.2 245.5ZM684.3 430.8L680.1 409.6L677.7 410.1L681.9 431.1ZM250.4 271L234.7 285.6L236.3 287.3L252 272.8ZM604 316.6L590.8 302.3L589.5 303.6L602.6 317.8ZM591.3 302.8L577 289.6L575.8 291L590 304.1ZM496 244.2L477.2 238.9L476.8 240.7L495.4 246ZM477.9 239L458.8 235.2L458.5 237.1L477.4 240.9ZM624.9 347.8L614.2 331.7L612.3 333L623 349ZM314.5 261.1L297.7 270.5L299.5 273.3L316 264.1ZM648.9 417.8L643.8 399.5L641 400.4L646.1 418.4ZM284.5 282.7L269.6 294.5L271.5 296.7L286.2 285.1ZM285.9 284.7L271.2 296.3L272.6 298.1L287.2 286.5ZM648.4 436.4L644.7 418.1L642.5 418.6L646.1 436.8ZM646.6 454.6L644.5 436.4L641.6 436.8L643.7 454.8ZM275.3 300.2L261.8 312.6L263.9 314.7L277.2 302.4ZM612.1 355.6L602 340.5L599.4 342.5L609.3 357.3ZM507.3 265.9L490.3 259.6L489.3 262.7L506.1 268.9ZM276.8 302L263.5 314.4L265.9 316.7L279 304.5ZM264 313.9L251.6 327.2L254.1 329.4L266.3 316.3Z"/>
<path fill="#d4d4d1" d="M631.7 226.6L611.1 210.4L609.9 212L630.4 228.1ZM590.8 196.8L567.9 184L566.9 185.7L589.7 198.5ZM568.7 184.4L544.8 173.4L544 175.2L567.7 186.1ZM682 283.3L665.8 262.8L664 264.3L680 284.7ZM422 150.4L395.9 151.5L396.1 153.8L422 152.8ZM717.1 350L706.2 326.4L703 328L713.8 351.3ZM299.6 176.4L276 187.3L277.6 190.4L300.9 179.6ZM256.4 201.7L235 216L236.8 218.4L258 204.3ZM727 399L720 374.4L717.8 375.1L724.6 399.5ZM238.3 219L218.4 234.7L219.9 236.5L239.7 220.9ZM239.4 220.5L219.6 236.1L221.4 238.2L241 222.7ZM240.7 222.3L221.1 237.8L223.1 240.1L242.5 224.8ZM718.5 400.8L711.8 376.9L708.4 378L715.1 401.6ZM703.8 355.2L693.4 332.7L690.2 334.2L700.5 356.5ZM516.2 181.4L492.3 174.6L491.5 178L515.1 184.7ZM262.2 211.1L241.5 224.9L243.6 227.7L264 214ZM242.2 224.4L222.7 239.7L225 242.4L244.3 227.2ZM626.4 297.6L611.6 281.5L610.3 282.7L625.1 298.7ZM484.8 210.5L463.3 206.2L463 207.9L484.4 212.2ZM464.1 206.3L442.3 203.8L442.2 205.5L463.8 208.1ZM443.1 203.8L421.2 203L421.2 204.7L442.9 205.6ZM676.4 389.6L668.9 369.2L666.7 370.1L674.1 390.3ZM300.4 233.2L281.4 243.9L282.6 245.9L301.4 235.4ZM265.6 256.7L248.6 270L250.2 271.9L267 258.6ZM266.7 258.2L249.9 271.5L251.4 273.3L268.1 260.1ZM577.5 290L562.2 277.9L561.1 279.5L576.3 291.4ZM547.1 267.8L530.1 258.3L529.2 260L546.1 269.5ZM530.7 258.6L513 250.5L512.3 252.2L529.8 260.3ZM614.5 332.2L602.6 317L600.8 318.5L612.7 333.5ZM421.9 233.7L402.6 234.5L402.8 236.7L421.9 236ZM640.2 381.8L632.2 364.3L629.2 365.8L637.2 383.1ZM331.4 253.4L313.9 261.4L315.4 264.4L332.7 256.4ZM299.8 272.6L284 283.1L285.7 285.5L301.3 275.1ZM646.6 418.3L641.5 400.2L639.3 400.9L644.4 418.8ZM286.9 286.1L272.3 297.7L273.7 299.4L288.3 287.9ZM288 287.5L273.4 299L275.1 301L289.5 289.6ZM289.2 289.2L274.8 300.6L276.7 302.8L290.9 291.6ZM638.8 420.2L633.8 402.7L630.7 403.7L635.5 421ZM628 386.9L620.4 370.4L617.4 371.9L624.9 388.1ZM490.9 259.8L473.4 254.8L472.6 258.1L489.9 262.9ZM305.2 281.5L290.1 291.6L292.1 294.2L306.9 284.3ZM290.6 291.2L276.4 302.4L278.5 304.9L292.6 293.9Z"/>
<path fill="#d5d5d1" d="M611.8 210.9L590 196.3L588.9 198L610.7 212.5ZM447.3 151.5L421.1 150.4L421.1 152.8L447.1 153.8ZM323.2 167.8L298.8 176.8L300.1 180L324.2 171.1ZM257.8 203.9L236.6 218L237.9 219.9L259 205.9ZM728 423.7L723.1 398.9L720.4 399.5L725.3 424.1ZM283.1 199.4L261.5 211.5L263.3 214.5L284.7 202.5ZM562.7 278.3L546.5 267.5L545.5 269.1L561.6 279.8ZM440.6 234.5L421.3 233.7L421.3 236L440.4 236.7ZM348.8 247L330.8 253.6L332.1 256.7L349.8 250.1ZM301 274.6L285.4 285.1L286.7 286.9L302.2 276.6ZM646.6 436.7L643 418.5L640.5 419.1L644.1 437.1ZM320.5 272.9L304.7 281.8L306.4 284.6L322 275.9Z"/>
<path fill="#d4d4d0" d="M545.6 173.7L521 164.6L520.4 166.5L544.9 175.5ZM693.7 333.4L681.6 311.8L678.6 313.6L690.6 335ZM513.6 250.7L495.3 244L494.8 245.8L512.9 252.5ZM620.7 370.9L611.8 355.1L609 356.8L617.7 372.4Z"/>
<path fill="#d3d3cf" d="M472.6 153L446.5 149.9L446.3 151.9L472.2 154.9ZM396.8 151.4L370.8 154.5L371.2 156.8L397 153.7ZM254.9 199.1L233.3 213.6L235.3 216.4L256.7 202.1ZM220.3 235.6L201.7 252.7L203.7 254.6L222 237.6ZM723.1 424.4L718.3 400L714.9 400.8L719.7 424.9ZM651.2 331.7L639 313.6L637.6 314.6L649.7 332.7ZM235.2 285.1L220.6 300.8L222.4 302.4L236.9 286.7ZM459.4 235.4L440.1 233.1L439.9 235L459.1 237.2ZM403.2 234.5L384 236.7L384.4 238.9L403.4 236.7ZM298.3 270.2L282.3 280.9L284.3 283.5L300 273ZM273.9 298.6L260.3 311.2L262.1 313L275.6 300.6ZM642.1 437.4L638.6 419.6L635.4 420.4L638.9 437.9Z"/>
<path fill="#c8c8c5" d="M371.5 152.9L345.7 158L346.2 159.9L371.8 154.8ZM151.8 306.1L139.2 328.5L141.9 329.9L154.4 307.7ZM131.5 351.3L122.7 375.2L124.9 375.9L133.7 352.2ZM618.1 242L598.8 226.8L596.7 229.5L615.8 244.6ZM599.5 227.3L579 213.6L577.2 216.5L597.4 230ZM307.1 194.8L285 205L286.4 207.8L308.3 197.7ZM195.9 278.5L181 297.5L183.2 299L198 280.3ZM181.4 296.8L168 316.9L170.4 318.3L183.6 298.4ZM141.3 380.1L134.8 403.2L137.1 403.7L143.5 380.8ZM132.3 425.3L129.5 449L131.4 449.1L134.2 425.6ZM159 430L156.5 451.5L158.9 451.7L161.4 430.4ZM676.6 411.2L670.8 390.7L668.5 391.4L674.2 411.7ZM671 391.3L663.6 371.4L661.4 372.3L668.7 392.1ZM401.4 210.7L380.2 213.2L380.6 215.5L401.6 213ZM384.4 235.2L365.3 239L365.8 240.9L384.7 237.1ZM222.5 349.6L213.2 366.2L215.8 367.5L225 351.1ZM208.1 383.2L201.5 400.8L203.7 401.5L210.1 384.1ZM565 304.6L550.9 293.5L549 296.1L562.9 307.1ZM551.4 293.8L536.5 283.9L534.8 286.7L549.5 296.5ZM338.6 270.8L322.5 278.2L323.9 280.8L339.7 273.5ZM258.1 332L247.3 345.7L249.4 347.3L260.1 333.7ZM247.7 345.3L237.9 359.8L240.2 361.2L249.8 346.8ZM219 405.9L214.3 422.5L216.5 423.1L221.1 406.6ZM212.9 438.6L210.8 455.7L212.7 455.9L214.7 438.9Z"/>
<path fill="#c5c5c2" d="M346.6 157.8L321.3 164.9L321.9 166.8L347.1 159.7ZM139.6 327.7L128.8 351.1L131.7 352.3L142.3 329.1ZM116.2 398.1L111.3 423.2L113.6 423.5L118.5 398.6ZM136.8 402.8L132.1 426.1L134.1 426.4L138.7 403.2ZM133.7 425.5L131 449L132.9 449.2L135.7 425.8ZM299.8 232.1L280.7 242.8L281.6 244.3L300.6 233.7ZM682.9 451.8L680.4 430.6L678.1 431L680.6 452ZM633.9 318.2L620.7 301.5L618.9 303L631.9 319.6ZM502.9 222.8L482.4 217L481.9 219.4L502.2 225.1ZM483.1 217.2L462.2 213.1L461.9 215.4L482.6 219.5ZM189.9 353.5L181 372.8L183.2 373.7L192 354.6ZM164.1 451.4L163.3 472.4L165.7 472.4L166.5 451.6ZM366 238.9L347.2 244.2L347.8 246L366.4 240.7ZM213.5 365.6L205.5 382.9L208.3 384L216.1 366.9ZM196.8 417.7L193.1 436.1L195.3 436.5L199 418.2ZM216.1 422.4L212.8 439.2L214.6 439.5L218 422.8ZM214.2 438.9L212.2 455.8L214.1 456L216.1 439.2Z"/>
<path fill="#c1c1be" d="M322.2 164.6L297.6 173.7L298.3 175.5L322.8 166.5ZM706.2 379.5L697.8 356.7L694.9 357.8L703.2 380.4ZM398.3 173.1L374.1 175.9L374.6 179L398.5 176.2ZM266.6 218.3L246.5 231.7L248.1 233.9L268 220.6ZM183.2 298.1L169.9 318L171.9 319.2L185.1 299.4ZM347.9 244L329.6 250.7L330.3 252.5L348.4 245.8ZM628.7 405L622.6 388.4L619.9 389.6L625.9 405.9ZM404.8 255L387.2 257.1L387.7 260L405.1 257.9ZM309.4 288.3L294.9 298.1L296.4 300.2L310.8 290.6ZM249.4 346.5L239.7 360.9L241.6 362.1L251.2 347.8Z"/>
<path fill="#bdbdba" d="M298.4 173.4L274.5 184.4L275.4 186.1L299.1 175.2ZM663.8 296L648.8 276.8L646.4 278.8L661.3 297.8ZM491.7 180.6L467.8 175.8L467.3 178.9L490.9 183.6ZM213.3 263L197.1 280.6L198.8 282.1L215 264.6ZM247.2 267.2L231.1 282L232.3 283.3L248.3 268.5ZM167 388.9L161.1 409.8L163.4 410.4L169.3 389.6ZM252.9 273.9L237.3 288.2L239 289.9L254.4 275.7ZM330.2 250.5L312.5 258.6L313.4 260.3L330.9 252.2ZM597.9 344.3L586.9 330.4L584.7 332.3L595.5 346ZM472.7 260.4L455.3 257L454.9 259.9L472 263.3ZM271.1 321.1L259.3 333.8L261.1 335.3L272.7 322.7Z"/>
<path fill="#b9b9b6" d="M275.3 184L252.4 196.8L253.5 198.5L276.2 185.7ZM105.9 446.6L104.9 472.3L108 472.3L109 446.8ZM720.8 472L719.8 447.7L716.7 447.9L717.6 472ZM231.6 281.5L216.8 297.6L218.1 298.7L232.9 282.7ZM313.1 258.3L296.1 267.8L297.1 269.5L314 260ZM188.6 453.3L187.9 472.3L190.8 472.3L191.6 453.6ZM639.3 472.3L638.6 454.6L635.6 454.9L636.3 472.3Z"/>
<path fill="#b5b5b2" d="M253.2 196.3L231.4 210.9L232.5 212.5L254.2 198ZM267.7 220.2L247.8 233.5L249.2 235.4L269 222.2ZM184.7 299.2L171.5 318.9L173.2 320L186.3 300.3ZM217.3 297L203.7 314.2L205.1 315.2L218.6 298.1ZM296.7 267.5L280.5 278.3L281.6 279.8L297.7 269.1ZM310.5 290.1L296.1 299.8L297.4 301.6L311.7 292ZM250.8 347.5L241.2 361.8L242.8 362.8L252.3 348.6Z"/>
<path fill="#b1b1af" d="M232.1 210.4L211.5 226.6L212.7 228.1L233.2 212ZM135.3 325.6L124.3 349.3L126.5 350.2L137.4 326.6ZM287.9 208.9L267 220.6L268.3 222.6L289 211ZM199 281.1L184.3 299.8L185.9 301L200.5 282.4ZM162 338.9L152.1 360.4L153.9 361.2L163.8 339.8ZM281 277.9L265.7 290L266.9 291.4L282.1 279.5ZM209.5 363.5L201.4 381.1L203.4 382L211.5 364.6ZM325.1 282L310 290.4L311.2 292.3L326.1 284ZM261.1 334.5L250.4 348L252 349.1L262.5 335.7ZM234.6 376.4L227.5 391.9L229.2 392.6L236.3 377.3Z"/>
<path fill="#aeaeab" d="M212.1 226.1L192.9 243.9L194.3 245.3L213.4 227.6ZM647.3 279.1L630.9 261.4L628.9 263.3L645.2 280.9ZM445 175.7L420.9 174.8L420.9 177.5L444.8 178.4ZM309 199.3L287.2 209.3L288.3 211.4L309.8 201.4ZM214.6 264.3L198.5 281.7L200 283L216 265.7ZM341.5 224.4L321.7 231.7L322.6 233.9L342.3 226.7ZM266.2 289.6L251.9 302.8L253.2 304.1L267.4 291ZM585.4 332.5L573.6 319.6L571.7 321.4L583.5 334.1ZM438.8 257.5L421.3 256.8L421.3 259.4L438.6 260.1ZM340.3 275L324.6 282.2L325.6 284.2L341.2 277.1ZM272.3 322.3L260.7 334.9L262.1 336.2L273.7 323.7Z"/>
<path fill="#aaaaa7" d="M193.5 243.3L175.7 262.5L177.2 263.8L194.9 244.6ZM153.8 360.2L145.6 382.3L147.2 382.8L155.3 360.8ZM252.4 302.3L239.2 316.6L240.6 317.8L253.7 303.6ZM229 391.9L223.1 407.8L224.6 408.3L230.4 392.5Z"/>
<path fill="#a6a6a4" d="M176.2 261.9L160 282.5L161.6 283.6L177.7 263.1ZM718.1 472L717.2 447.9L714.4 448.1L715.3 472ZM239.6 316.1L227.5 331.4L229.1 332.5L241 317.3ZM636.8 472.3L636.1 454.8L633.5 455L634.2 472.3Z"/>
<path fill="#a2a2a0" d="M160.5 281.8L145.9 303.6L147.6 304.6L162.1 282.9ZM701.6 380.9L693.3 358.4L691.1 359.3L699.3 381.6ZM632.3 319.3L619.2 302.7L617.4 304.3L630.4 320.7ZM227.9 330.9L217.1 347.1L218.7 348.1L229.4 332ZM624.4 406.4L618.4 390.2L616.3 391L622.3 407.1Z"/>
<path fill="#9f9f9c" d="M146.4 302.8L133.6 325.7L135.3 326.6L148.1 303.8ZM104.1 421.2L101 447.2L103.3 447.3L106.4 421.6ZM659.8 298.7L645 279.9L643.2 281.5L657.9 300.1ZM288.8 210.6L268 222.2L269 223.9L289.7 212.3ZM217.4 346.5L207.9 363.5L209.6 364.4L219.1 347.5ZM186.3 434.4L184.1 453.6L186.3 453.8L188.5 434.8ZM594.2 347L583.5 333.4L581.8 334.8L592.4 348.3ZM325.9 283.5L310.9 291.9L311.9 293.5L326.8 285.2Z"/>
<path fill="#9b9b99" d="M134 324.9L123 348.8L124.8 349.5L135.7 325.8ZM174.5 319.8L163 340.3L164.4 341L175.8 320.6ZM208.2 362.9L200.1 380.6L201.8 381.3L209.9 363.8ZM243.9 362.8L235.6 377.6L237 378.3L245.2 363.6Z"/>
<path fill="#979795" d="M123.3 348L114.2 372.6L116.1 373.2L125.1 348.7ZM200.3 380L193.6 398.3L195.4 398.8L202.1 380.7Z"/>
<path fill="#949492" d="M114.5 371.7L107.4 397L109.3 397.5L116.4 372.3ZM250.4 235.7L231.8 250.3L233.1 251.8L251.6 237.3ZM187.1 300.9L174 320.5L175.4 321.3L188.4 301.8ZM153.4 450.5L152.6 472.4L154.3 472.4L155.2 450.7ZM193.8 397.6L188.5 416.4L190.3 416.8L195.6 398.2ZM298.4 301.9L285 312.5L286.2 314L299.5 303.5ZM253 349.2L243.6 363.3L244.9 364.1L254.3 350.1Z"/>
<path fill="#90908e" d="M107.6 396.1L102.5 421.9L104.4 422.2L109.5 396.6ZM201.5 336.7L191.3 355L193.4 356.1L203.6 338ZM188.6 415.7L184.8 434.8L186.7 435.1L190.5 416.2Z"/>
<path fill="#8c8c8a" d="M102.6 421L99.5 447.1L101.5 447.2L104.6 421.3ZM706 403.6L699.5 380.7L697.6 381.3L704 404ZM682.2 339L670.6 318.2L668.9 319.3L680.4 339.9ZM185 434.2L182.7 453.5L184.6 453.7L186.8 434.5ZM627.2 422.9L622.5 406.4L620.7 407L625.4 423.4ZM610.1 376.3L601.7 361.3L600.1 362.3L608.4 377.2Z"/>
<path fill="#898987" d="M99.6 446.2L98.6 472.5L100.5 472.4L101.6 446.3ZM658.3 299.8L643.6 281.1L642 282.4L656.7 301ZM175.4 320.3L163.9 340.8L165.4 341.5L176.8 321.2ZM182.7 452.9L182 472.3L183.8 472.3L184.6 453ZM592.8 348L582.1 334.5L580.7 335.7L591.2 349.1ZM244.8 363.3L236.5 378L237.9 378.7L246.1 364.1Z"/>
<path fill="#d1d1cd" d="M727.5 373L718.5 348.5L716.3 349.4L725.3 373.7ZM620.1 239.7L600.6 224.4L598.5 227.2L617.8 242.4ZM648.3 398.7L641.6 380.5L639.5 381.4L646.2 399.4ZM566.8 302.4L552.6 291.2L550.6 293.9L564.7 304.9Z"/>
<path fill="#d5d5d2" d="M666.4 263.5L648.6 244.3L646.9 245.9L664.6 265ZM497.1 159.4L471.4 154.3L471.1 156.6L496.5 161.7ZM472.3 154.5L446.4 151.4L446.2 153.7L471.9 156.8ZM706.6 327.2L693.9 304.5L690.9 306.3L703.4 328.8ZM347.4 161L322.4 168.1L323.4 171.3L348.2 164.4ZM722.8 374.5L713.9 350.3L711 351.5L719.8 375.4ZM278.2 189.5L255.7 202.1L257.3 204.7L279.5 192.3ZM258.7 205.4L237.6 219.5L239 221.4L260 207.4ZM712 377.7L703.4 354.4L700.2 355.7L708.7 378.8ZM493.1 174.8L468.8 170L468.2 173.4L492.3 178.2ZM304.9 189.4L282.4 199.8L283.9 202.8L306.2 192.6ZM612.1 282L596 267.2L594.9 268.5L610.9 283.3ZM544.1 232.4L524.2 223.3L523.5 224.9L543.3 234ZM524.9 223.6L504.4 216L503.8 217.7L524.2 225.2ZM505.1 216.2L484 210.3L483.6 212L504.6 217.9ZM669.1 369.9L660 350.1L657.9 351.2L666.9 370.8ZM319.5 224.5L299.7 233.6L300.8 235.7L320.4 226.7ZM682.4 431.1L678.2 410L675.9 410.6L680.1 431.4ZM593.3 271.5L576.5 258.2L575.1 260.1L591.8 273.3ZM577.1 258.6L559.2 246.7L558 248.7L575.7 260.6ZM284 246.7L266.1 258.6L267.5 260.6L285.2 248.7ZM603 317.5L589.8 303.3L588.3 304.9L601.3 319ZM477.5 240.4L458.5 236.6L458.2 238.8L477 242.6ZM459.2 236.7L440 234.5L439.8 236.7L458.8 238.9ZM632.5 364.9L623.1 348.1L620.3 349.9L629.5 366.4ZM366.7 241.9L348.2 247.2L349.2 250.3L367.5 245.2ZM644 400.1L637.4 382.3L634.7 383.4L641.2 401ZM315.8 263.6L299.2 272.9L300.7 275.4L317.1 266.2ZM301.9 276.1L286.4 286.5L287.7 288.3L303.1 278ZM634 403.3L627.7 386.3L624.7 387.5L630.9 404.3ZM474 255L456.2 251.5L455.7 254.7L473.2 258.2ZM336.5 265.6L320 273.2L321.5 276.2L337.7 268.7Z"/>
<path fill="#d6d6d2" d="M649.3 244.9L630.1 227.2L628.5 229L647.6 246.6ZM521.4 166.3L496.2 159.2L495.6 161.5L520.6 168.5ZM725.1 399.4L718.2 374.9L716 375.7L722.8 399.9ZM260.9 208.9L240 222.8L241.8 225.3L262.5 211.5ZM327.4 181.1L304.1 189.7L305.4 192.9L328.5 184.4ZM596.6 267.7L579.4 254.1L578.4 255.5L595.5 269ZM283 245.1L265 257.1L266.4 259L284.2 247.1ZM590.3 303.8L576.1 290.6L574.6 292.3L588.7 305.3ZM495.5 245.5L476.9 240.3L476.4 242.4L494.8 247.6ZM644.9 418.7L639.8 400.8L637.7 401.5L642.7 419.3ZM303.9 279.4L288.7 289.6L290.4 292L305.5 281.9ZM352.9 259.6L335.9 265.9L337.1 268.9L353.9 262.7Z"/>
<path fill="#d6d6d3" d="M630.8 227.8L610.2 211.6L608.8 213.5L629.2 229.5ZM568 185.7L544.2 174.7L543.3 176.9L566.9 187.8ZM545.1 175.1L520.5 166L519.8 168.3L544.1 177.2ZM694.4 305.3L679.9 283.7L677.1 285.7L691.3 307.1ZM372 156.1L346.5 161.2L347.3 164.6L372.5 159.5ZM300.8 179.2L277.4 189.9L278.8 192.7L301.9 182ZM279.3 191.8L257 204.3L258.3 206.3L280.4 193.9ZM259.7 207L238.7 221L240.3 223.2L261.1 209.3ZM725.8 424L720.9 399.4L717.8 400.1L722.6 424.4ZM469.6 170.1L445 167.2L444.6 170.6L469 173.5ZM374.1 170L349.7 174.8L350.5 178.2L374.6 173.4ZM350.5 174.6L326.6 181.4L327.7 184.7L351.3 178ZM580 254.6L561.9 242.4L560.9 243.9L579 256ZM562.5 242.8L543.4 232.1L542.6 233.7L561.6 244.3ZM339.2 217.2L318.8 224.7L319.7 226.9L339.9 219.5ZM680.2 410.3L674.4 389.5L672.1 390.2L677.9 410.8ZM622.6 300.8L608 285.1L606.3 286.7L620.8 302.4ZM608.5 285.6L592.8 271L591.2 272.8L606.9 287.3ZM559.9 247.1L541.1 236.6L540 238.7L558.6 249.1ZM302.1 236.6L283.3 247.1L284.6 249.1L303.2 238.7ZM576.6 291L561.4 279.1L560.1 280.9L575.1 292.8ZM530.1 259.9L512.5 251.8L511.6 253.8L529 261.9ZM513.1 252L494.9 245.3L494.2 247.4L512.2 254.1ZM623.4 348.7L612.7 332.7L610.1 334.7L620.6 350.4ZM384.9 238.4L366.1 242.1L366.8 245.3L385.4 241.6ZM332.5 255.9L315.2 263.9L316.5 266.5L333.6 258.7ZM316.9 265.8L300.5 275L301.7 276.9L317.9 267.8ZM302.9 277.6L287.5 287.9L289 290L304.2 279.8ZM644.6 437L641 419L638.1 419.7L641.7 437.5ZM456.8 251.6L438.8 249.4L438.6 252.7L456.3 254.8ZM387 251.5L369.2 255L370 258.2L387.5 254.7ZM369.8 254.8L352.3 259.8L353.3 262.9L370.6 258.1Z"/>
<path fill="#d7d7d4" d="M610.9 212.1L589.2 197.6L588 199.6L609.5 214ZM680.4 284.4L664.4 264L661.7 266.2L677.6 286.4ZM422 152.3L396 153.3L396.3 156.7L422 155.7ZM714.3 351.1L703.5 327.7L700.7 329.1L711.4 352.3ZM324.1 170.6L299.9 179.5L301.1 182.3L325 173.5ZM720.3 375.2L711.5 351.3L709.3 352.2L718 375.9ZM301.7 181.5L278.5 192.2L279.6 194.3L302.6 183.7ZM280.1 193.5L258 205.9L259.2 207.9L281.2 195.6ZM723.3 399.8L716.4 375.5L713.8 376.3L720.6 400.4ZM282 197.1L260.1 209.3L261.7 211.9L283.4 199.8ZM445.8 167.3L421 166.3L421 169.7L445.5 170.7ZM421.8 166.3L397 167.3L397.3 170.7L421.8 169.7ZM397.9 167.2L373.2 170.1L373.7 173.5L398.1 170.6ZM660.4 350.8L649.7 331.8L647.7 333L658.2 351.8ZM359.4 211.5L338.5 217.4L339.2 219.7L360 213.8ZM301.2 234.9L282.4 245.5L283.6 247.5L302.3 237ZM678.4 410.7L672.6 390.1L670.3 390.8L676.1 411.3ZM646.9 334.4L635 316.5L633 317.9L644.9 335.6ZM541.8 236.9L522.3 227.9L521.4 230.2L540.7 239.1ZM340.4 220.8L320.2 228.2L321.1 230.4L341.1 223.1ZM561.9 279.4L545.8 268.7L544.6 270.6L560.6 281.3ZM613.1 333.3L601.2 318.1L598.7 320.3L610.5 335.2ZM421.9 235.5L402.7 236.2L403 239.5L421.9 238.8ZM637.7 382.9L629.7 365.6L627.1 366.9L634.9 384ZM349.7 249.6L331.9 256.2L333 258.9L350.6 252.4ZM641.7 400.8L635.1 383.2L633.1 384.1L639.5 401.5ZM333.4 258.2L316.3 266.1L317.3 268.1L334.2 260.3ZM317.7 267.3L301.4 276.5L302.6 278.4L318.7 269.3ZM643.2 419.1L638.1 401.3L635.7 402.1L640.6 419.7ZM319.4 270.8L303.4 279.7L304.9 282.2L320.8 273.4ZM439.4 249.5L421.3 248.8L421.3 252L439.2 252.7ZM421.9 248.8L403.8 249.5L404 252.7L421.9 252ZM404.4 249.4L386.4 251.6L386.9 254.8L404.6 252.7Z"/>
<path fill="#d7d7d3" d="M590 198L567.2 185.3L566.1 187.4L588.7 200ZM396.9 153.2L371.1 156.3L371.6 159.7L397.2 156.7ZM635.4 317.1L622.1 300.3L620.3 301.8L633.5 318.5ZM320.9 227.9L301.4 236.9L302.5 239.1L321.8 230.2ZM546.4 269L529.5 259.6L528.5 261.6L545.2 270.9ZM403.4 236.2L384.3 238.5L384.8 241.7L403.6 239.5Z"/>
<path fill="#cacac7" d="M232.9 211.6L212.4 227.8L213.9 229.5L234.3 213.5ZM178.8 264L162.7 284.4L165.5 286.4L181.4 266.2ZM165.6 285.4L151.3 306.8L153.9 308.4L168.1 287.2ZM141.9 328.9L131.2 352.1L133.4 353L144 329.9ZM124.7 374.9L117.8 399.4L120.1 399.9L127 375.7ZM722.9 448.4L720 423.9L716.5 424.4L719.4 448.6ZM666.3 294.3L651.1 274.9L648.4 277.2L663.4 296.3ZM537.5 192.4L514.4 183.9L513.3 187.2L536.1 195.6ZM157.1 336.5L147 358.4L149.5 359.4L159.5 337.7ZM135 402.4L130.3 425.9L132.6 426.2L137.3 402.9ZM168.8 389.5L163 410.3L165.3 410.8L171.1 390.2ZM360.8 217L340.3 222.8L341 225.1L361.3 219.4ZM168.6 410.9L164.5 431.6L166.9 432L171 411.5ZM281.8 279.1L266.6 291L268.1 292.8L283.1 280.9ZM242 318.1L230.1 333.3L232.7 335.2L244.5 320.3ZM232.7 334.4L222.2 350.2L224.7 351.7L235.1 336.1ZM215.7 366.7L207.8 383.8L209.9 384.6L217.7 367.7ZM203.4 400.8L198.3 418.7L200.5 419.3L205.5 401.5ZM641.4 455L639.3 437.2L636 437.7L638.1 455.3ZM600.1 342.7L589 328.6L586.5 330.7L597.5 344.6ZM506.2 268.4L489.4 262.2L488.4 265.4L505 271.5ZM230 374L222.6 389.9L225 390.9L232.3 375.2ZM214.4 422L211.1 439L213.3 439.3L216.6 422.5Z"/>
<path fill="#c9c9c6" d="M213.1 227.2L193.9 244.9L195.6 246.6L214.6 229ZM118 398.5L113.1 423.4L115.4 423.8L120.3 399.1ZM723.8 472.1L722.8 447.5L719.3 447.8L720.3 472ZM635.5 258.1L617.5 241.4L615.2 244L633 260.5ZM579.8 214L558.3 202L556.7 205.1L577.9 217ZM559.1 202.4L536.7 192.1L535.4 195.3L557.4 205.5ZM285.8 204.6L264.5 216.5L266.2 219.2L287.2 207.4ZM168.5 316.1L156.7 337.2L159.1 338.4L170.8 317.6ZM131 448.2L130.1 471.9L132.1 471.9L133 448.4ZM338.8 216L318.3 223.6L319 225.2L339.4 217.7ZM205.2 314.3L193.1 332.4L195.1 333.6L207.1 315.7ZM163.1 409.6L158.9 430.8L161.3 431.1L165.5 410.1ZM381 213.1L360.1 217.2L360.6 219.5L381.3 215.4ZM174.2 391.2L168.5 411.6L170.8 412.2L176.5 392ZM267.1 290.6L252.9 303.8L254.5 305.3L268.6 292.3ZM198.5 418.1L194.8 436.4L197.1 436.8L200.7 418.6ZM642.1 472.3L641.4 454.4L638.1 454.7L638.8 472.3ZM577.7 316.3L564.5 304.2L562.4 306.7L575.4 318.7ZM537 284.2L521.4 275.4L519.9 278.4L535.3 287ZM522 275.7L505.7 268.2L504.4 271.3L520.5 278.6ZM323.1 277.9L307.6 286.6L309.2 289.1L324.4 280.5ZM238.3 359.3L229.7 374.6L232 375.7L240.5 360.7ZM212.3 455.2L211.6 472.3L213.5 472.3L214.2 455.4Z"/>
<path fill="#c4c4c1" d="M194.5 244.3L176.8 263.5L178.6 265L196.2 245.9ZM351.9 180.4L328.4 187L329.4 189.9L352.6 183.4ZM247.2 231.2L228.2 246.2L230 248.2L248.8 233.4ZM159 337.5L149 359.2L151.2 360.1L161.1 338.5ZM683.7 472.4L682.9 451.1L680.5 451.3L681.3 472.4ZM621.2 302L606.7 286.4L605 288.1L619.3 303.6ZM522.2 230L502.3 222.6L501.5 224.9L521.3 232.2ZM199.9 335.7L189.6 354.2L191.7 355.3L201.9 337ZM253.4 303.3L240.2 317.5L241.9 319L254.9 304.9ZM371.1 260.3L354 265.1L355 267.9L371.8 263.1ZM295.3 297.7L281.6 308.5L283.3 310.5L296.9 299.8ZM231.8 375L224.6 390.7L226.7 391.6L233.8 376Z"/>
<path fill="#bfbfbc" d="M177.4 262.8L161.2 283.3L163.1 284.7L179.2 264.3ZM136.9 326.4L126.1 350L129.3 351.3L140 328ZM688.3 336.1L676.4 314.8L673.7 316.4L685.5 337.4ZM286.9 206.9L265.9 218.7L267.3 221L288.2 209.4ZM197.6 279.9L182.8 298.7L184.7 300.1L199.4 281.5ZM151 359.1L142.8 381.5L144.7 382.1L152.9 359.9ZM237.8 287.7L223.5 303.3L225.3 304.8L239.5 289.4ZM240.6 317L228.7 332.2L230.5 333.5L242.4 318.5ZM211 364.3L203 381.8L206 383.1L214 365.8ZM615.7 373.5L607 358L604.5 359.6L613.1 374.8ZM324.2 280.1L308.9 288.7L310.3 290.9L325.3 282.4ZM259.7 333.4L249 347L250.8 348.3L261.4 334.8ZM226.4 390.8L220.5 407L222.3 407.5L228.2 391.6Z"/>
<path fill="#bbbbb8" d="M161.7 282.6L147.2 304.3L149.2 305.6L163.6 284ZM633.4 260.2L615.5 243.7L613.4 246L631.1 262.4ZM557.7 205L535.5 194.8L534.3 197.7L556.2 207.8ZM230.3 247.3L212.7 263.6L214.4 265.2L231.8 249.1ZM160.7 338.3L150.7 359.9L152.6 360.6L162.5 339.2ZM144.5 381.1L138 403.9L140 404.4L146.3 381.7ZM136.3 425.9L133.5 449.2L135.1 449.3L137.9 426.1ZM229 331.7L218.3 347.8L220.2 349L230.9 333ZM575.7 318.3L562.7 306.3L560.8 308.5L573.6 320.4ZM520.7 278.2L504.6 270.8L503.5 273.5L519.3 280.8ZM283.4 309.7L270.7 321.5L272.3 323.1L284.9 311.5ZM233.4 375.8L226.2 391.4L227.9 392.1L235.1 376.6ZM222 406.8L217.3 423.3L219.2 423.7L223.8 407.4ZM216.7 439.2L214.7 456L216.2 456.1L218.2 439.5Z"/>
<path fill="#b6b6b3" d="M147.7 303.6L134.9 326.4L137 327.4L149.7 304.8ZM152.4 359.7L144.2 381.9L146.1 382.5L154.2 360.4ZM218.6 347.2L209.2 364.1L211.2 365.1L220.5 348.4ZM227.7 391.4L221.8 407.4L223.6 408L229.5 392.1Z"/>
<path fill="#adadaa" d="M124.7 348.5L115.6 373L117.9 373.7L126.9 349.4ZM631.5 262L613.8 245.6L612 247.7L629.5 263.9ZM513.4 189.4L490.2 182.9L489.5 185.5L512.6 192ZM491 183.1L467.3 178.4L466.9 181.1L490.3 185.7ZM192.4 331.1L181.7 350.2L183.3 351L193.9 332ZM201.6 380.5L194.9 398.7L197 399.4L203.7 381.4ZM574 320L561.1 308.2L559.5 310.1L572.2 321.9ZM488.4 267.4L471.5 262.7L470.9 265.2L487.6 269.9ZM472.1 262.8L455 259.4L454.6 261.9L471.5 265.3Z"/>
<path fill="#a8a8a5" d="M115.9 372.2L108.8 397.3L111.1 397.9L118.1 372.9ZM185.9 300L172.8 319.7L174.5 320.7L187.5 301.2ZM195.1 398.1L189.9 416.7L192 417.2L197.2 398.8ZM251.9 348.3L242.4 362.5L244 363.5L253.4 349.5Z"/>
<path fill="#a3a3a1" d="M109 396.5L103.9 422.1L106.2 422.5L111.3 397ZM643.7 336.3L631.9 318.7L630 320.2L641.6 337.6ZM190 416.1L186.2 435.1L188.4 435.4L192.2 416.6Z"/>
<path fill="#9a9a98" d="M101.1 446.3L100 472.4L102.4 472.4L103.4 446.5ZM681.1 451.9L678.6 430.9L676.2 431.3L678.7 452.1ZM184.1 453L183.3 472.3L185.6 472.3L186.3 453.2Z"/>
<path fill="#cfcfcb" d="M740.3 447.3L737.2 421.5L733.7 422L736.8 447.5ZM183 267.6L167.2 287.6L169.1 289L184.8 269.1ZM128.6 376.2L121.8 400.3L124.8 400.9L131.5 377.1ZM657.4 453.8L655.1 434.7L651.9 435.2L654.1 454ZM245.9 321.6L234.3 336.3L236.1 337.6L247.7 323ZM207.1 402L202.1 419.6L204.9 420.3L209.9 402.9Z"/>
<path fill="#d9d9d5" d="M664.9 264.7L647.3 245.6L644.8 248L662.2 266.9ZM472 156.3L446.2 153.2L445.9 156.7L471.4 159.7ZM324.9 173L300.9 181.9L301.8 184L325.6 175.3ZM302.4 183.2L279.4 193.9L280.4 196L303.3 185.4ZM650.1 332.4L638 314.3L636.1 315.7L648.1 333.6ZM401 205L379.3 207.6L379.7 209.9L401.1 207.4ZM672.8 390.8L665.4 370.6L663.2 371.5L670.5 391.5ZM601.7 318.7L588.6 304.5L586.3 306.9L599.2 320.8ZM458.9 238.5L439.8 236.2L439.6 239.5L458.4 241.7ZM350.4 251.9L332.8 258.5L333.7 260.5L351.1 254.1ZM334.1 259.8L317.1 267.6L318.1 269.6L334.9 261.9Z"/>
<path fill="#dadad6" d="M647.9 246.2L628.8 228.6L626.5 231.2L645.4 248.6ZM520.8 168.1L495.8 161L494.9 164.4L519.7 171.3ZM716.7 376.3L708 352.6L705.4 353.7L714.1 377.1ZM326.7 178.7L303.2 187.3L304.3 190.2L327.6 181.6ZM422 204.2L400.2 205.1L400.4 207.4L422 206.6ZM589.1 305L574.9 291.9L572.8 294.4L586.7 307.3ZM495 247.2L476.5 241.9L475.7 245.2L494 250.3ZM638.3 401.9L631.9 384.5L629.5 385.5L635.9 402.7ZM352.2 257.3L334.9 263.6L336.1 266.3L353.1 260.1Z"/>
<path fill="#dbdbd8" d="M629.5 229.2L609.1 213.1L607 215.8L627.2 231.8ZM589 199.6L566.3 186.9L564.7 190L587.1 202.5ZM691.8 306.8L677.5 285.4L674.9 287.2L689.1 308.4ZM422 155.2L396.2 156.2L396.5 159.3L421.9 158.3ZM711.8 352.1L701.1 328.9L699 329.9L709.6 353ZM372.8 161.6L347.8 166.6L348.3 168.9L373.2 163.9ZM714.5 377L705.9 353.5L703 354.6L711.5 377.9ZM706.2 354.3L695.7 331.5L692.9 332.9L703.3 355.4ZM696.1 332.3L683.9 310.4L681.2 312L693.3 333.7ZM684.3 311.2L670.4 290.3L667.9 292.1L681.6 312.8ZM670.9 291L655.4 271.4L653 273.4L668.4 292.8ZM656 272L639 253.6L636.7 255.8L653.6 274ZM639.6 254.2L621.2 237.2L619.1 239.6L637.3 256.4ZM621.8 237.8L602.2 222.3L600.3 224.8L619.8 240.1ZM602.9 222.8L582 208.9L580.4 211.5L601 225.3ZM349.9 172.1L325.8 178.9L326.8 181.8L350.6 175.1ZM463.9 207.6L442.2 205L442.1 207.4L463.5 209.9ZM442.7 208.8L421.2 208L421.2 210.4L442.5 211.2ZM422 208L400.5 208.8L400.7 211.2L422 210.4ZM575.5 292.4L560.3 280.5L558.4 283.1L573.3 294.9ZM545.5 270.5L528.7 261.1L527.2 264.1L543.7 273.3ZM621 350.2L610.5 334.4L608.1 336.1L618.5 351.7ZM421.9 238.3L402.9 239L403.2 242L421.9 241.2ZM635.4 383.8L627.5 366.7L625.5 367.7L633.3 384.6ZM385.7 243.5L367.3 247.2L367.8 249.4L386.1 245.7ZM636.3 402.6L630 385.3L627.3 386.5L633.5 403.5ZM630.2 385.9L622.5 369.3L619.9 370.6L627.5 387ZM622.8 369.8L613.9 353.8L611.4 355.3L620.2 371.2ZM614.2 354.3L604 339.1L601.6 340.8L611.7 355.9ZM604.4 339.6L593 325.2L590.8 327.1L602 341.3ZM593.4 325.7L581 312.2L578.9 314.3L591.2 327.6ZM581.4 312.6L567.9 300.2L566 302.4L579.3 314.7ZM568.4 300.6L554 289.2L552.3 291.6L566.5 302.8ZM554.5 289.6L539.3 279.4L537.7 281.9L552.8 292ZM369.2 252.5L351.6 257.5L352.5 260.3L369.9 255.3Z"/>
<path fill="#dcdcd8" d="M609.8 213.6L588.2 199.1L586.4 202.1L607.7 216.4ZM708.3 353.4L697.7 330.5L695.3 331.8L705.7 354.5ZM560.9 280.9L544.9 270.2L543.2 273L558.9 283.5ZM632.2 385.1L624.4 368.3L622.1 369.5L629.8 386.1Z"/>
<path fill="#dbdbd7" d="M567.1 187.3L543.5 176.4L542.1 179.6L565.5 190.4ZM339.8 219L319.5 226.5L320.4 228.7L340.5 221.3ZM529.3 261.4L511.8 253.4L510.5 256.4L527.8 264.4Z"/>
<path fill="#dadad7" d="M544.3 176.8L519.9 167.8L518.8 171.1L542.9 180ZM397.1 156.2L371.6 159.2L372 162.2L397.3 159.2ZM348.6 166.4L324 173.3L324.8 175.5L349.1 168.7ZM325.4 174.8L301.6 183.6L302.5 185.7L326.1 177ZM303.1 185L280.2 195.5L281.4 197.9L304.1 187.5ZM638.5 314.9L625 297.8L623.2 299.4L636.5 316.3ZM443 205.1L421.2 204.2L421.2 206.6L442.8 207.4ZM463.3 211.3L441.9 208.8L441.8 211.2L462.9 213.7ZM401.3 208.8L379.9 211.3L380.3 213.7L401.4 211.2ZM512.4 253.6L494.4 247L493.4 250.1L511.1 256.7ZM403.6 239L384.7 241.2L385.2 244.1L403.8 241.9ZM367.9 247L349.8 252.1L350.5 254.3L368.4 249.2ZM351 253.6L333.5 260.1L334.3 262.1L351.7 255.7ZM334.7 261.4L317.9 269.2L319.1 271.5L335.7 263.8Z"/>
<path fill="#d9d9d6" d="M496.6 161.2L471.1 156.1L470.6 159.5L495.8 164.6ZM703.9 328.5L691.3 306.1L688.6 307.7L701.1 329.9ZM372.4 159.1L347.2 164.1L347.9 167.1L372.9 162.1ZM718.5 375.8L709.7 352L707.5 352.8L716.2 376.5ZM721.1 400.3L714.3 376.2L711.3 377.1L718 400.9ZM674.6 390.2L667.1 369.9L664.9 370.8L672.3 390.9ZM320.2 226.2L300.6 235.3L301.6 237.4L321.1 228.4ZM483.6 215.4L462.5 211.2L462.2 213.5L483 217.7ZM380.7 211.2L359.6 215.4L360.2 217.7L381 213.5ZM477.1 242.1L458.3 238.4L457.8 241.6L476.4 245.3ZM630 366.2L620.7 349.6L618.2 351.1L627.4 367.5ZM385.4 241.1L366.7 244.8L367.4 247.7L385.8 244ZM640 401.4L633.5 383.9L631.5 384.7L637.9 402.1ZM641.1 419.6L636.1 402L633.3 402.9L638.3 420.3Z"/>
<path fill="#d8d8d5" d="M447.1 153.3L421.1 152.3L421.1 155.7L446.8 156.7ZM348 163.9L323.3 170.9L324.2 173.8L348.7 166.9ZM281 195.1L259 207.4L260.4 209.8L282.2 197.5ZM304 187L281.2 197.5L282.6 200.2L305.1 189.8ZM380.1 207.4L358.7 211.7L359.3 214L380.4 209.8ZM665.7 371.3L656.7 351.8L654.5 352.9L663.4 372.2ZM503.5 221L482.9 215.2L482.3 217.5L502.8 223.3ZM360.3 215.2L339.7 221L340.4 223.3L360.9 217.5ZM440.5 236.2L421.3 235.5L421.3 238.8L440.2 239.5ZM367.4 244.7L349.1 249.8L350 252.6L368 247.5ZM318.5 268.9L302.3 277.9L303.7 280.2L319.6 271.2ZM335.5 263.4L318.9 271.1L320.2 273.7L336.6 266.1Z"/>
<path fill="#c6c6c3" d="M163.2 283.7L148.8 305.3L151.7 307.1L166 285.7ZM123 374.4L116 399L118.3 399.5L125.2 375.1ZM110.3 446.9L109.3 472.3L111.7 472.2L112.7 447.1ZM329.2 186.7L306.4 195.1L307.5 198L330.2 189.7ZM228.9 245.6L211.2 262L213.1 263.9L230.6 247.7ZM149.3 358.4L141 380.9L143.3 381.6L151.5 359.3ZM193.5 331.8L182.8 350.8L185 351.8L195.5 333ZM680.5 431.4L676.4 410.5L674.1 411L678.2 431.7ZM645.3 335.4L633.4 317.6L631.5 319L643.2 336.6ZM463 213.2L441.8 210.7L441.6 213L462.6 215.5ZM230.5 332.7L219.8 348.7L222.6 350.4L233.1 334.7ZM201.7 400.2L196.6 418.3L198.8 418.8L203.9 400.9ZM192.8 453.7L192.1 472.3L194.3 472.3L195 453.9ZM354.6 264.9L338 271L339.2 273.7L355.5 267.7ZM282.1 308.2L269.2 320L271 321.9L283.7 310.1ZM224.8 390.2L218.8 406.4L220.9 407.1L226.9 391Z"/>
<path fill="#c3c3c0" d="M149.2 304.5L136.5 327.2L139.6 328.8L152.2 306.3ZM129.1 350.3L120.2 374.5L123.2 375.4L132 351.5ZM111.4 422.3L108.4 447.7L110.7 447.8L113.7 422.6ZM374.9 175.8L351 180.6L351.7 183.6L375.4 178.9ZM183.2 350.1L174.1 369.9L176.3 370.8L185.3 351.2ZM607.2 286.9L591.6 272.4L590 274.3L605.5 288.6ZM558.9 248.7L540.3 238.3L539.2 240.4L557.6 250.7ZM540.9 238.6L521.6 229.7L520.7 231.9L539.8 240.7ZM220.1 348.1L210.7 364.9L213.7 366.4L222.9 349.9ZM205.8 382.3L199.2 400.1L202 401L208.5 383.4ZM193.2 435.5L191 454.2L193.3 454.3L195.4 435.9ZM387.9 257L370.5 260.4L371.2 263.3L388.3 259.9Z"/>
<path fill="#bcbcb9" d="M126.4 349.2L117.4 373.6L120.7 374.6L129.6 350.5ZM108.8 421.9L105.8 447.5L108.9 447.7L111.9 422.4ZM649.3 277.5L632.8 259.6L630.5 261.8L646.9 279.5ZM536.3 195.1L513.5 186.7L512.5 189.7L535.1 198ZM308.1 197.2L286.2 207.3L287.4 209.7L309.1 199.7ZM203.2 381.2L196.6 399.2L199.7 400.2L206.3 382.5ZM190.8 435.1L188.6 454L191.5 454.2L193.7 435.6ZM587.3 330.9L575.3 317.9L573.2 320L585.1 332.8ZM505.2 271L488.6 264.9L487.7 267.7L504 273.7ZM339.5 273L323.6 280.4L324.8 282.7L340.5 275.4Z"/>
<path fill="#b8b8b5" d="M117.7 372.7L110.6 397.8L114 398.5L121 373.8ZM248.5 233L229.7 247.8L231.2 249.6L249.9 234.9ZM171.9 318.2L160.3 339L162.1 339.9L173.6 319.3ZM196.8 398.6L191.5 417.1L194.8 417.9L199.9 399.6ZM296.6 299.4L283 310.1L284.4 311.8L297.9 301.2ZM241.5 361.3L233.1 376.3L234.8 377.2L243.1 362.3Z"/>
<path fill="#b4b4b2" d="M110.8 396.9L105.8 422.4L109.2 422.9L114.2 397.7ZM375.3 178.4L351.6 183.1L352.3 185.7L375.7 181.1ZM154.7 450.6L153.8 472.4L156.2 472.4L157 450.8ZM191.7 416.5L188 435.3L191.2 435.8L194.9 417.2ZM388.2 259.4L371.1 262.8L371.7 265.3L388.6 261.9Z"/>
<path fill="#b1b1ae" d="M105.9 421.5L102.8 447.3L106.3 447.5L109.3 422ZM145.9 381.6L139.5 404.2L141 404.6L147.4 382.1ZM140.7 403.7L136.2 426.7L137.8 426.9L142.3 404.1ZM204.2 313.6L192 331.7L193.5 332.7L205.6 314.6ZM322.4 231.4L303.1 240.3L304.2 242.4L323.3 233.6ZM188.1 434.7L185.8 453.8L189.1 454L191.3 435.2ZM223.3 407.3L218.7 423.6L220.2 423.9L224.8 407.7ZM219.9 423.3L216.6 439.8L218.1 440.1L221.4 423.6Z"/>
<path fill="#adadab" d="M102.9 446.4L101.9 472.4L105.4 472.3L106.4 446.7ZM468.2 178.5L444.2 175.7L444 178.4L467.7 181.2ZM185.8 453.1L185.1 472.3L188.4 472.3L189.1 453.4ZM455.6 259.5L438.2 257.4L438 260L455.2 262Z"/>
<path fill="#d0d0cc" d="M737.3 447.5L734.2 421.9L731.1 422.4L734.1 447.7ZM729.5 472.2L728.5 447.2L725.4 447.4L726.3 472.1ZM139.4 354.4L130.8 377.7L134.1 378.8L142.6 355.7ZM152.1 334L141.8 356.3L145 357.6L155.2 335.5ZM685.6 472.4L684.8 450.9L682.4 451.1L683.2 472.4ZM236.5 286.4L222 302L223.9 303.6L238.2 288.1ZM654.6 454L652.4 435.1L649.5 435.6L651.7 454.2ZM647.3 472.3L646.6 454L643.6 454.2L644.3 472.3ZM215.5 386.3L209.2 403.3L212.3 404.3L218.5 387.5ZM225.3 371.6L217.8 387.9L220.9 389.2L228.2 373.1Z"/>
<path fill="#ddddda" d="M678 286.1L662 265.9L659.6 267.9L675.4 287.9ZM471.5 159.2L445.9 156.2L445.7 159.2L471 162.2ZM710.1 352.8L699.4 329.7L697.3 330.8L707.8 353.6ZM539.7 187.3L516.2 178.7L515.2 181.6L538.5 190.2ZM504.7 217.4L483.8 211.5L483.2 213.8L504 219.7ZM610.9 334.9L599.1 320L596.9 321.9L608.5 336.6ZM458.5 241.2L439.6 239L439.4 241.9L458 244.1ZM633.8 384.5L626 367.5L624 368.5L631.7 385.3ZM508.3 263.6L491 257.3L490.1 260.1L507.1 266.3Z"/>
<path fill="#dfdfdc" d="M662.6 266.6L645.1 247.7L642.9 249.8L660.2 268.6ZM397.4 160.6L372.2 163.6L372.6 165.9L397.6 162.9ZM446 164.7L421 163.7L421 166.8L445.8 167.8ZM421.9 163.7L396.8 164.7L397.1 167.8L421.8 166.8ZM595.8 268.6L578.7 255.1L577.3 257.1L594.2 270.4ZM561.8 243.9L542.8 233.2L541.8 235.4L560.6 245.9ZM599.5 320.5L586.6 306.5L584.6 308.6L597.3 322.4ZM403.9 243.2L385.4 245.3L385.7 247.6L404.1 245.4ZM439.6 247L421.3 246.3L421.3 249.3L439.4 250ZM421.9 246.3L403.6 247L403.8 250L421.9 249.3Z"/>
<path fill="#e1e1de" d="M645.8 248.3L626.9 230.8L624.8 233.1L643.5 250.5ZM699.8 330.5L687.4 308.3L685.4 309.6L697.7 331.5ZM422 206.1L400.4 206.9L400.6 209.3L422 208.5ZM587.1 307L573.1 294.1L571.2 296.3L585 309ZM626.3 368.1L617.1 351.8L615.2 353L624.3 369.1Z"/>
<path fill="#e3e3e0" d="M627.5 231.4L607.3 215.4L605.4 217.9L625.5 233.7ZM587.4 202.1L564.9 189.5L563.5 192.3L585.7 204.7ZM471.1 161.7L445.7 158.7L445.5 161.1L470.7 164.1ZM446.4 160.6L421 159.7L421 162L446.2 163ZM573.6 294.5L558.7 282.7L557 285.1L571.7 296.7ZM544 272.9L527.4 263.6L526.1 266.2L542.5 275.4ZM458.1 243.6L439.4 241.4L439.3 243.7L457.7 245.8ZM439.9 243.2L421.3 242.5L421.3 244.7L439.7 245.4Z"/>
<path fill="#e4e4e1" d="M608 216L586.6 201.7L585 204.3L606.2 218.4ZM421.9 161.5L396.7 162.5L396.9 165.2L421.9 164.2ZM648.5 333.4L636.5 315.4L634.6 316.8L646.5 334.6ZM559.2 283.1L543.4 272.6L541.9 275.1L557.5 285.5ZM421.9 244.2L403.4 244.9L403.6 247.5L421.9 246.8Z"/>
<path fill="#e2e2de" d="M565.7 189.9L542.3 179.2L541.1 182L564.2 192.7ZM672.8 289.8L657.1 269.9L655 271.7L670.5 291.3ZM528 263.9L510.7 255.9L509.6 258.7L526.7 266.5ZM606.1 338.4L594.6 323.8L592.6 325.5L604 339.9Z"/>
<path fill="#e1e1dd" d="M543.1 179.5L519 170.6L518 173.5L541.9 182.3ZM421.9 159.7L396.6 160.6L396.7 163L421.9 162ZM511.3 256.2L493.5 249.6L492.6 252.4L510.2 258.9ZM421.9 242.5L403.3 243.2L403.5 245.4L421.9 244.7Z"/>
<path fill="#e0e0dc" d="M519.8 170.9L495 163.9L494.3 166.9L518.8 173.8ZM701.5 329.7L689 307.4L687 308.6L699.4 330.7ZM686.3 310L672.2 289.1L670 290.6L683.9 311.4ZM401.1 206.9L379.6 209.4L380 211.8L401.3 209.3ZM494.1 249.8L475.8 244.7L475.2 247.5L493.2 252.6ZM627.8 367.3L618.6 350.9L616.7 352.1L625.8 368.3ZM616 353.3L605.7 337.9L603.6 339.4L613.8 354.6Z"/>
<path fill="#dededb" d="M495.9 164.1L470.6 159.1L470.1 162.1L495.1 167.1ZM421.9 157.8L396.4 158.8L396.6 161.1L421.9 160.2ZM349.4 170L325.2 176.8L326 179.4L350.1 172.6ZM493.8 172.3L469.2 167.4L468.7 170.5L493 175.3ZM380.4 209.3L359.2 213.5L359.7 215.9L380.7 211.7ZM476.5 244.8L457.8 241.1L457.4 244L475.8 247.7ZM421.9 240.7L403.1 241.5L403.3 243.7L421.9 243ZM368.7 250.4L350.9 255.5L351.7 257.9L369.3 253ZM474.6 252.6L456.6 249L456.1 251.9L473.9 255.5Z"/>
<path fill="#dcdcd9" d="M446.8 156.2L421.1 155.2L421.1 158.3L446.5 159.3ZM349 168.2L324.6 175.1L325.3 177.3L349.6 170.5ZM326 176.5L302.3 185.3L303.3 187.8L326.8 179.1ZM582.8 209.3L560.9 197.1L559.5 199.8L581.1 211.9ZM561.7 197.5L538.9 187L537.7 189.8L560.2 200.2ZM373.7 167.4L349.1 172.3L349.8 175.3L374.1 170.5ZM625.5 298.4L610.7 282.4L609 284.1L623.7 299.9ZM484.5 211.7L463.1 207.4L462.8 209.8L483.9 214ZM359.9 213.4L339.1 219.2L339.8 221.5L360.4 215.7ZM440.3 239L421.3 238.3L421.3 241.2L440 242ZM368.3 248.7L350.4 253.8L351.1 255.9L368.9 250.9ZM351.5 255.3L334.1 261.7L335.1 264.1L352.3 257.7ZM539.8 279.7L523.8 270.8L522.4 273.4L538.3 282.2ZM524.3 271.1L507.7 263.4L506.6 266.1L523 273.7ZM386.6 249L368.6 252.6L369.3 255.5L387.1 251.9Z"/>
<path fill="#cdcdc9" d="M181 265.9L165.1 286.1L167.6 287.9L183.4 267.9ZM244.1 320L232.3 334.9L234.7 336.6L246.3 321.9Z"/>
<path fill="#c0c0bd" d="M120.5 373.6L113.5 398.4L116.5 399.1L123.4 374.5ZM712.6 402.1L706 378.7L703 379.6L709.5 402.8ZM698.1 357.4L687.9 335.3L685.1 336.7L695.2 358.6ZM421.8 172.2L397.4 173.2L397.7 176.2L421.7 175.3ZM138.2 403.1L133.6 426.3L135.6 426.6L140.2 403.6ZM135.2 425.8L132.4 449.1L134 449.2L136.8 426ZM135.6 448.5L134.7 471.8L136.2 471.8L137.1 448.6ZM263.8 254.1L246.6 267.7L247.7 269L264.8 255.5ZM174.3 369.2L166.8 389.6L169.1 390.3L176.5 370.1ZM224 302.7L210.9 319.3L212.8 320.7L225.8 304.3ZM199.4 399.5L194.3 417.8L197.1 418.4L202.2 400.4ZM633.3 421.5L628.5 404.4L625.7 405.4L630.5 422.2ZM622.8 389L615.4 372.9L612.8 374.3L620.1 390.1ZM421.9 254.3L404.2 255L404.5 258L421.9 257.3ZM217.5 422.7L214.2 439.4L216 439.7L219.3 423.1ZM215.6 439.1L213.6 455.9L215.2 456L217.2 439.3ZM216.6 455.6L216 472.3L217.4 472.3L218 455.7Z"/>
<path fill="#bebebb" d="M113.7 397.5L108.7 422.8L111.7 423.2L116.7 398.2ZM717.2 425.2L712.4 401.3L709.3 402L714 425.6ZM676.9 315.5L663.3 295.3L660.8 297.1L674.2 317.1ZM468.6 175.9L444.4 173.1L444.2 176.2L468.1 179ZM194.4 417.1L190.7 435.8L193.6 436.2L197.3 417.8ZM636.6 438.3L633.2 420.9L630.3 421.6L633.7 438.7ZM607.3 358.5L597.5 343.8L595.1 345.5L604.8 360.1ZM456 257.1L438.4 255L438.1 257.9L455.5 260Z"/>
<path fill="#e4e4e0" d="M689.5 308.1L675.3 286.9L673.4 288.3L687.5 309.3ZM657.7 270.6L640.6 252.1L638.6 254L655.6 272.3ZM442.8 206.9L421.2 206.1L421.2 208.5L442.6 209.3ZM619 351.4L608.5 335.8L606.7 337.1L617 352.6ZM595 324.3L582.4 310.7L580.6 312.5L593 326Z"/>
<path fill="#e8e8e4" d="M675.8 287.6L660 267.6L658.2 269.1L673.9 289ZM623.3 236.1L603.5 220.5L601.9 222.7L621.5 238.2ZM608.9 336.3L597.3 321.6L595.5 323L607.1 337.6ZM569.8 299L555.2 287.5L553.7 289.6L568.1 301Z"/>
<path fill="#ecece8" d="M660.6 268.2L643.3 249.5L641.6 251.1L658.8 269.7ZM518.4 175.1L493.9 168.2L493.4 170.5L517.6 177.3ZM624 299.6L609.4 283.7L607.7 285.4L622.2 301.1ZM597.7 322L584.9 308.2L583.3 309.8L596 323.5ZM492.8 253.8L474.9 248.7L474.3 250.9L492.1 255.9Z"/>
<path fill="#f0f0ec" d="M643.9 250.1L625.1 232.8L623.6 234.5L642.2 251.7ZM564.5 192.2L541.3 181.5L540.4 183.7L563.4 194.3ZM609.9 284.2L594 269.6L592.5 271.4L608.2 285.9ZM585.4 308.7L571.6 295.9L570.1 297.6L583.8 310.3ZM526.9 266.1L509.8 258.2L509 260.3L525.9 268.1Z"/>
<path fill="#f4f4f0" d="M625.8 233.3L605.7 217.5L604.3 219.4L624.2 235.1ZM572 296.3L557.3 284.7L556 286.5L570.6 298.1Z"/>
<path fill="#f6f6f2" d="M606.5 218L585.2 203.9L584 205.9L605 219.9ZM624.6 234.7L604.6 219L603.2 220.9L623 236.5ZM557.8 285.1L542.2 274.6L541 276.6L556.5 286.9ZM570.9 297.7L556.3 286.1L554.9 287.9L569.5 299.4Z"/>
<path fill="#f3f3ef" d="M586 204.3L563.7 191.8L562.6 193.9L584.7 206.3ZM560.8 245.5L542 234.9L540.9 237L559.6 247.5ZM542.7 275L526.3 265.8L525.3 267.8L541.5 276.9Z"/>
<path fill="#edede9" d="M542.1 181.9L518.1 173L517.4 175.3L541.2 184ZM510.4 258.5L492.8 251.9L492.1 254.1L509.5 260.5Z"/>
<path fill="#eaeae6" d="M519 173.3L494.4 166.4L493.8 168.7L518.2 175.5ZM493.4 252.1L475.3 247L474.8 249.2L492.7 254.3Z"/>
<path fill="#e7e7e3" d="M495.2 166.6L470.2 161.6L469.8 163.9L494.7 168.9ZM517.8 176.8L493.5 170L492.8 172.6L516.9 179.4ZM475.9 247.2L457.5 243.5L457.1 245.7L475.4 249.4ZM492.3 255.5L474.5 250.4L473.9 253L491.5 257.9Z"/>
<path fill="#e0e0dd" d="M446.6 158.8L421.1 157.8L421 160.2L446.4 161.1ZM373.4 165.2L348.6 170.2L349.2 172.8L373.8 167.9ZM579.3 255.6L561.2 243.5L560 245.5L577.9 257.5ZM658.7 351.6L648.1 332.8L646.1 334L656.6 352.7ZM440.1 241.5L421.3 240.7L421.3 243L439.9 243.7ZM386.3 247L368.1 250.6L368.7 253.1L386.7 249.5Z"/>
<path fill="#ddddd9" d="M397.3 158.7L371.9 161.7L372.3 164.1L397.5 161.1ZM667.4 370.6L658.3 351L656.2 352L665.2 371.5ZM403.8 241.4L385.1 243.6L385.5 245.8L403.9 243.7Z"/>
<path fill="#cbcbc8" d="M154 307.4L141.5 329.7L143.6 330.7L156 308.6ZM133.2 352L124.5 375.8L126.7 376.5L135.4 352.8ZM112.2 447L111.2 472.2L113.9 472.2L114.9 447.2ZM720.1 424.8L715.4 400.7L711.9 401.4L716.7 425.3ZM691 334.7L679 313.3L676 315.1L687.9 336.3ZM679.5 314L665.8 293.6L662.9 295.6L676.4 315.8ZM515.2 184.2L491.6 177.5L490.7 180.9L514.1 187.5ZM265.3 216.1L245 229.6L246.8 232.1L266.9 218.7ZM147.3 357.6L138.9 380.3L141.5 381.1L149.8 358.6ZM139.2 379.5L132.6 402.7L135.3 403.3L141.8 380.3ZM218.2 297.8L204.7 314.9L206.7 316.3L220 299.4ZM340.9 222.6L321 230L321.9 232.2L341.7 224.9ZM224.6 350.9L215.4 367.3L217.4 368.3L226.5 352.1ZM209.7 383.9L203.2 401.4L205.3 402.1L211.7 384.7ZM194.5 453.8L193.8 472.3L196.4 472.3L197.1 454ZM639.4 437.8L635.9 420.2L632.7 421L636.1 438.3ZM618.2 372.2L609.4 356.6L606.6 358.3L615.2 373.7ZM609.7 357.1L599.8 342.2L597.1 344.1L606.9 358.8ZM490 262.4L472.8 257.6L472 260.8L489 265.6ZM308.1 286.3L293.4 296.1L295.1 298.5L309.7 288.8ZM222.9 389.4L216.8 405.8L219.3 406.6L225.3 390.4ZM217 405.2L212.3 422.1L214.8 422.7L219.5 406Z"/>
<path fill="#c2c2bf" d="M108.5 446.8L107.5 472.3L109.8 472.3L110.8 446.9ZM170.4 317.3L158.7 338.2L160.8 339.2L172.4 318.5ZM143.1 380.7L136.6 403.6L138.5 404L144.9 381.3ZM134.7 448.5L133.8 471.8L135.2 471.8L136.1 448.6ZM281.3 242.4L263.2 254.6L264.2 256L282.3 243.9ZM592.1 272.9L575.4 259.7L574 261.7L590.6 274.7ZM576 260.2L558.2 248.3L557 250.4L574.6 262.1ZM211.3 318.7L199.5 336.3L201.6 337.6L213.2 320.2ZM191.1 453.5L190.3 472.3L192.6 472.3L193.3 453.7ZM240 360.4L231.6 375.5L233.6 376.5L241.9 361.6ZM220.7 406.4L216 422.9L217.8 423.4L222.5 407ZM215.8 455.5L215.1 472.3L216.5 472.3L217.1 455.6Z"/>
<path fill="#e5e5e2" d="M687.9 309.1L673.8 288L671.8 289.4L685.8 310.3ZM446.2 162.5L421 161.5L421 164.2L446 165.2ZM617.5 352.3L607.1 336.8L605.3 338.1L615.6 353.5ZM439.8 244.9L421.3 244.2L421.3 246.8L439.6 247.5Z"/>
<path fill="#e9e9e6" d="M674.3 288.7L658.6 268.8L656.8 270.3L672.4 290.1ZM494.8 168.4L469.9 163.4L469.5 165.7L494.2 170.7ZM604.2 221L583.2 207L581.8 209.3L602.6 223.2ZM607.5 337.3L595.9 322.7L594.2 324.1L605.7 338.7ZM475.5 248.9L457.2 245.2L456.8 247.5L475 251.1ZM555.7 287.9L540.3 277.6L539 279.8L554.2 290Z"/>
<path fill="#ededea" d="M659.1 269.4L641.9 250.8L640.2 252.4L657.3 270.9ZM596.3 323.2L583.7 309.5L582.1 311.1L594.6 324.6Z"/>
<path fill="#f2f2ee" d="M642.5 251.4L623.9 234.2L622.3 235.9L640.8 253ZM563.6 193.9L540.5 183.2L539.6 185.4L562.5 196ZM584.1 309.9L570.4 297.3L569 299L582.5 311.5ZM526.1 267.6L509.1 259.8L508.3 261.9L525.1 269.6Z"/>
<path fill="#f8f8f4" d="M605.3 219.5L584.2 205.4L583 207.4L603.9 221.4ZM556.8 286.5L541.3 276.1L540.1 278L555.5 288.3Z"/>
<path fill="#f5f5f1" d="M585 205.9L562.8 193.5L561.7 195.6L583.7 207.9ZM541.8 276.5L525.5 267.3L524.5 269.3L540.6 278.4Z"/>
<path fill="#efefeb" d="M541.4 183.6L517.5 174.8L516.8 177L540.4 185.7ZM509.7 260.1L492.2 253.6L491.5 255.7L508.9 262.1Z"/>
<path fill="#e6e6e3" d="M470.7 163.6L445.5 160.6L445.3 162.9L470.4 165.9ZM494.3 170.2L469.6 165.2L469.1 167.9L493.7 172.8ZM463.6 209.4L442.1 206.9L441.9 209.3L463.2 211.8ZM457.8 245.3L439.3 243.2L439.1 245.4L457.5 247.6ZM475.1 250.6L456.9 247L456.5 249.5L474.5 253.1Z"/>
<path fill="#dededa" d="M373.1 163.4L348.2 168.4L348.7 170.7L373.4 165.7ZM698.1 331.3L685.8 309.3L683.4 310.7L695.7 332.5ZM517 178.9L492.9 172.1L492.2 175.1L516 181.8ZM397.7 164.6L372.8 167.6L373.3 170.6L397.9 167.7ZM611.2 282.9L595.2 268.1L593.7 269.9L609.5 284.6ZM524.4 224.7L504 217.2L503.3 219.5L523.5 226.9ZM386 245.2L367.7 248.9L368.2 251.1L386.4 247.5ZM624.7 368.9L615.7 352.7L613.4 354.1L622.4 370ZM491.6 257.5L474 252.5L473.3 255.3L490.7 260.3ZM404.2 247L386 249.1L386.4 252L404.4 249.9Z"/>
<path fill="#c7c7c4" d="M113.2 422.6L110.2 447.8L112.6 447.9L115.5 422.9ZM211.7 261.4L195.4 279.1L197.4 280.9L213.7 263.3ZM132.5 448.3L131.6 471.9L133.2 471.9L134.1 448.4ZM319 223.3L299.1 232.4L299.9 234L319.7 224.9ZM156.5 450.8L155.7 472.4L158.1 472.4L158.9 451ZM663.9 372L655 352.7L652.9 353.8L661.7 372.9ZM655.3 353.3L644.9 334.7L642.9 336L653.2 354.4ZM442.5 210.7L421.2 209.9L421.2 212.3L442.3 213.1ZM422 209.9L400.7 210.7L400.9 213.1L422 212.3ZM181.3 372.1L174 391.9L176.3 392.7L183.5 373ZM194.9 435.8L192.8 454.3L195 454.5L197.2 436.1ZM269.6 319.6L257.8 332.5L259.7 334.1L271.5 321.4ZM213.7 455.3L213 472.3L214.6 472.3L215.2 455.5Z"/>
<path fill="#e6e6e2" d="M641.2 252.7L622.7 235.6L620.9 237.6L639.2 254.6ZM470.4 165.4L445.4 162.4L445.1 165.1L470 168.1ZM582.9 311.2L569.3 298.6L567.6 300.6L581.1 313ZM457.5 247.1L439.2 244.9L439 247.5L457.1 249.6Z"/>
<path fill="#e9e9e5" d="M584 207.4L562 195.1L560.7 197.5L582.5 209.8ZM484 213.5L462.8 209.3L462.5 211.7L483.5 215.9ZM540.9 277.9L524.7 268.9L523.6 271.2L539.5 280.2Z"/>
<path fill="#e8e8e5" d="M562.7 195.5L539.8 185L538.7 187.5L561.4 197.9ZM636.9 316L623.6 299L621.7 300.6L635 317.4ZM525.3 269.2L508.5 261.4L507.5 263.8L524.1 271.5Z"/>
<path fill="#e7e7e4" d="M540.6 185.3L516.9 176.5L516.1 179.1L539.5 187.8ZM509.1 261.7L491.7 255.3L490.9 257.7L508.1 264.1Z"/>
<path fill="#e2e2df" d="M397.6 162.4L372.5 165.4L372.9 168.1L397.7 165.1ZM404 244.9L385.7 247.1L386.1 249.6L404.2 247.5Z"/>
<path fill="#cececa" d="M126.5 375.5L119.6 399.8L122.3 400.4L129.1 376.3ZM421.8 169.2L397.2 170.2L397.5 173.7L421.8 172.7ZM127.7 448L126.7 472L129.1 471.9L130 448.2ZM689.8 451.3L687.3 429.5L685.5 429.8L688.1 451.4ZM160.9 430.3L158.4 451.7L160.8 451.8L163.3 430.7ZM162.2 451.2L161.4 472.4L163.8 472.4L164.6 451.4ZM205.1 401.3L200 419.1L202.6 419.7L207.5 402.1ZM421.9 251.5L404 252.2L404.3 255.5L421.9 254.8ZM209.2 455L208.5 472.3L210.7 472.3L211.4 455.2Z"/>
<path fill="#dfdfdb" d="M470.1 167.6L445.2 164.6L444.9 167.7L469.5 170.6ZM543.5 233.6L523.7 224.5L522.8 226.7L542.4 235.7ZM457.2 249.1L439 247L438.8 249.9L456.8 252Z"/>
<path fill="#cacac6" d="M651.6 275.6L634.9 257.5L632.4 260L648.9 277.8ZM589.4 329.1L577.3 315.9L574.9 318.2L586.9 331.2Z"/>
<path fill="#d2d2ce" d="M225.3 241.4L207.2 258.1L209.7 260.5L227.5 244ZM278.7 304.2L265.5 316.3L267.8 318.7L280.8 306.7Z"/>
<path fill="#bbbbb9" d="M719.9 448.5L717 424.4L713.9 424.8L716.7 448.7ZM638.6 455.2L636.5 437.6L633.6 438.1L635.7 455.5Z"/>
<path fill="#babab8" d="M616.1 244.2L597 229.1L595.1 231.6L614.1 246.5ZM578.2 216.5L556.9 204.6L555.5 207.4L576.5 219.2ZM563.2 306.7L549.3 295.7L547.6 298.1L561.3 308.9ZM535.6 286.6L520.1 277.9L518.8 280.5L534 289.1Z"/>
<path fill="#babab7" d="M597.7 229.6L577.4 216.1L575.8 218.7L595.8 232.1ZM330 189.2L307.4 197.5L308.4 200L330.8 191.8ZM161.3 409.1L157 430.5L159.4 430.8L163.6 409.7ZM268.9 261.3L252.3 274.4L253.9 276.2L270.3 263.2ZM549.8 296.1L535.1 286.3L533.5 288.8L548.1 298.5ZM355.4 267.2L339 273.3L340 275.7L356.2 269.7Z"/>
<path fill="#bcbcba" d="M514.3 187L490.8 180.4L490.1 183.4L513.3 189.9ZM166.5 431.2L164 452.1L166.4 452.3L168.9 431.6ZM489.2 265.1L472.1 260.3L471.4 263.1L488.2 267.9Z"/>
<path fill="#bebebc" d="M445.3 173.2L420.9 172.2L420.9 175.3L445 176.2ZM439 255L421.3 254.3L421.3 257.3L438.7 258Z"/>
<path fill="#aaaaa8" d="M717.2 448.7L714.4 424.7L711.7 425.1L714.5 448.9ZM636.2 455.4L634.1 438L631.6 438.4L633.6 455.6Z"/>
<path fill="#aeaeac" d="M714.5 425.6L709.8 401.9L707.1 402.5L711.8 426ZM634.2 438.6L630.8 421.5L628.3 422.1L631.7 439Z"/>
<path fill="#b2b2b0" d="M710 402.7L703.5 379.5L700.8 380.3L707.3 403.3ZM138.3 426.2L135.6 449.3L137 449.4L139.7 426.4ZM630.9 422.1L626.2 405.2L623.7 406L628.4 422.7ZM218.6 439.6L216.6 456.2L218 456.3L219.9 439.8Z"/>
<path fill="#b4b4b1" d="M703.7 380.3L695.4 357.6L692.8 358.6L701.1 381.1ZM303.8 240L285.3 250.3L286.6 252.3L304.9 242.1ZM626.4 405.8L620.3 389.4L617.9 390.4L623.9 406.6Z"/>
<path fill="#b3b3b0" d="M695.7 358.4L685.6 336.5L683.1 337.7L693.1 359.4ZM620.6 389.9L613.2 374L610.9 375.2L618.2 390.9Z"/>
<path fill="#b2b2af" d="M686 337.2L674.2 316.1L671.8 317.6L683.5 338.4ZM398.4 175.7L374.5 178.5L374.9 181.2L398.6 178.4ZM613.5 374.6L604.9 359.3L602.7 360.7L611.2 375.7ZM405 257.4L387.6 259.5L388 262L405.2 260Z"/>
<path fill="#b0b0ae" d="M674.6 316.9L661.2 296.8L658.9 298.4L672.2 318.3ZM605.3 359.8L595.5 345.3L593.4 346.8L603 361.2Z"/>
<path fill="#afafad" d="M661.7 297.5L646.7 278.5L644.6 280.3L659.4 299ZM421.7 174.8L397.6 175.7L397.8 178.4L421.7 177.5ZM595.9 345.7L585.1 332L583.1 333.7L593.8 347.3ZM421.9 256.8L404.4 257.5L404.6 260.1L421.9 259.4Z"/>
<path fill="#acaca9" d="M614.4 246.2L595.4 231.2L593.8 233.4L612.6 248.2ZM556.4 207.3L534.5 197.2L533.4 199.7L555.2 209.7ZM561.6 308.5L547.9 297.7L546.3 299.8L559.9 310.5ZM519.6 280.4L503.7 273L502.7 275.4L518.4 282.7Z"/>
<path fill="#ababa8" d="M596.1 231.7L576 218.3L574.6 220.6L594.5 233.9ZM330.7 191.3L308.2 199.6L309.1 201.7L331.4 193.5ZM231.5 248.7L214 264.9L215.4 266.2L232.8 250.2ZM361.2 218.9L340.8 224.6L341.6 226.9L361.8 221.2ZM176 391.8L170.3 412L172.6 412.6L178.3 392.6ZM548.3 298.1L533.8 288.3L532.4 290.6L546.8 300.2ZM356 269.2L339.8 275.2L340.6 277.3L356.7 271.3ZM284.5 311.1L271.9 322.7L273.3 324.1L285.8 312.5Z"/>
<path fill="#ababa9" d="M576.8 218.7L555.7 206.9L554.4 209.4L575.3 221ZM534.3 288.7L519 280.1L517.9 282.4L532.9 290.9Z"/>
<path fill="#acacaa" d="M535.3 197.5L512.6 189.2L511.8 191.8L534.2 200ZM173.2 319L161.6 339.7L163.4 340.5L174.9 320ZM504.2 273.3L487.8 267.2L487 269.7L503.2 275.7ZM242.7 362L234.4 376.9L236.1 377.8L244.3 363Z"/>
<path fill="#b7b7b4" d="M352.4 182.9L329.2 189.4L330 192L353.1 185.5ZM285.9 249.9L268.3 261.7L269.8 263.6L287.2 252ZM371.7 262.7L354.8 267.4L355.6 269.9L372.3 265.2Z"/>
<path fill="#929290" d="M715.8 472L714.9 448L712.5 448.2L713.5 471.9ZM634.7 472.3L634 455L631.8 455.2L632.5 472.3Z"/>
<path fill="#979794" d="M715 448.8L712.2 425.1L709.8 425.4L712.6 449ZM331.2 193L308.9 201.3L309.6 203.1L331.8 194.9ZM634.1 455.6L632.1 438.4L629.8 438.7L631.9 455.7ZM356.6 270.9L340.4 276.8L341.2 278.6L357.1 272.7Z"/>
<path fill="#9c9c99" d="M712.3 425.9L707.6 402.4L705.3 402.9L709.9 426.2ZM594.8 233.5L574.8 220.2L573.6 222.2L593.3 235.4ZM575.5 220.6L554.7 208.9L553.6 211L574.3 222.6ZM555.4 209.3L533.6 199.3L532.7 201.4L554.3 211.4ZM534.4 199.6L511.9 191.3L511.2 193.5L533.5 201.7ZM512.7 191.5L489.7 185L489.1 187.3L512 193.8ZM490.5 185.2L467 180.6L466.6 182.9L489.9 187.5ZM467.8 180.7L444 177.9L443.8 180.2L467.4 183ZM444.8 177.9L420.9 177L420.9 179.3L444.6 180.3ZM148 382.2L141.6 404.7L143 405L149.3 382.7ZM632.1 439L628.8 422L626.6 422.5L629.9 439.3ZM547.1 299.8L532.7 290.1L531.5 292L545.8 301.6ZM533.2 290.4L518.1 282L517.1 284L532 292.3ZM518.6 282.2L502.9 275L502 277.1L517.6 284.2ZM503.4 275.2L487.2 269.2L486.5 271.3L502.6 277.3ZM487.7 269.4L471.1 264.7L470.5 266.9L487 271.5ZM471.6 264.8L454.6 261.5L454.3 263.7L471.1 267ZM455.2 261.5L438 259.5L437.9 261.7L454.9 263.8ZM438.6 259.6L421.3 258.9L421.3 261.1L438.4 261.8ZM225.3 407.9L220.7 424.1L222.1 424.4L226.6 408.3Z"/>
<path fill="#a0a09e" d="M707.8 403.2L701.3 380.1L699 380.8L705.5 403.7ZM165.8 388.5L159.9 409.6L161.6 410L167.5 389ZM590.9 274.4L574.3 261.3L572.9 263.2L589.3 276.2ZM628.9 422.5L624.2 405.9L622.1 406.6L626.7 423.1Z"/>
<path fill="#a2a29f" d="M693.6 359.2L683.6 337.5L681.4 338.5L691.4 360.1ZM619.7 303.3L605.4 287.7L603.7 289.4L617.9 304.8ZM183.1 372.8L175.8 392.5L178.1 393.2L185.3 373.7ZM618.6 390.7L611.4 375L609.4 376L616.5 391.6Z"/>
<path fill="#a1a19e" d="M683.9 338.2L672.2 317.3L670.2 318.5L681.8 339.2ZM398.6 177.9L374.8 180.7L375.2 183L398.8 180.2ZM605.9 288.2L590.3 273.9L588.8 275.7L604.2 289.9ZM611.6 375.5L603.2 360.4L601.3 361.6L609.6 376.5ZM405.2 259.5L388 261.5L388.3 263.8L405.3 261.7Z"/>
<path fill="#a0a09d" d="M672.7 318L659.3 298.1L657.4 299.4L670.6 319.2ZM521.5 231.7L501.7 224.4L500.9 226.7L520.6 233.9ZM502.4 224.6L482 218.9L481.4 221.2L501.6 226.9ZM482.7 219L462 214.9L461.6 217.3L482.1 221.4ZM462.7 215L441.7 212.5L441.5 214.9L462.3 217.4ZM442.4 212.6L421.2 211.8L421.2 214.2L442.2 215ZM603.5 360.9L593.8 346.5L592 347.8L601.6 362.1Z"/>
<path fill="#9e9e9c" d="M645.5 280.6L629.3 263L627.6 264.6L643.7 282.1ZM215.7 265.3L199.6 282.7L201.1 284L217.1 266.7ZM583.9 333.8L572.1 321.1L570.5 322.7L582.1 335.3ZM273.3 323.3L261.7 335.8L263.2 337.1L274.7 324.7Z"/>
<path fill="#9d9d9b" d="M629.9 263.6L612.3 247.3L610.7 249.1L628.2 265.2ZM421.7 177L397.8 177.9L397.9 180.3L421.7 179.3ZM154.8 360.7L146.7 382.7L148.2 383.1L156.3 361.3ZM572.5 321.5L559.8 309.7L558.3 311.5L570.9 323.1ZM421.9 258.9L404.6 259.6L404.8 261.8L421.9 261.1ZM230 392.3L224.1 408.1L225.6 408.6L231.4 392.9Z"/>
<path fill="#9c9c9a" d="M612.9 247.8L594.1 233L592.7 234.9L611.3 249.6ZM160.1 408.8L155.8 430.3L157.5 430.6L161.8 409.2ZM560.2 310.1L546.6 299.4L545.3 301.2L558.8 311.8Z"/>
<path fill="#a4a4a1" d="M375.6 180.6L352.1 185.2L352.7 187.5L376 182.9ZM674.7 411.6L669 391.2L666.7 392L672.4 412.2ZM388.6 261.5L371.6 264.8L372.1 267L388.9 263.7Z"/>
<path fill="#a7a7a5" d="M352.9 185L329.9 191.5L330.6 193.8L353.5 187.3ZM381.2 214.9L360.5 219L361.1 221.4L381.6 217.3ZM372.1 264.7L355.5 269.4L356.2 271.5L372.7 266.9Z"/>
<path fill="#7b7b79" d="M714 471.9L713 448.1L711 448.3L711.9 471.9ZM633 472.3L632.3 455.1L630.4 455.3L631.1 472.3Z"/>
<path fill="#81817f" d="M713.1 449L710.3 425.3L708.3 425.6L711.1 449.1ZM632.4 455.7L630.3 438.6L628.5 438.9L630.5 455.9Z"/>
<path fill="#868684" d="M710.4 426.1L705.8 402.8L703.8 403.2L708.4 426.4ZM630.4 439.2L627.1 422.4L625.2 422.8L628.6 439.5Z"/>
<path fill="#8e8e8c" d="M699.8 381.5L691.5 359.1L689.7 359.9L697.8 382.1ZM622.7 407L616.8 390.8L615 391.6L620.9 407.5Z"/>
<path fill="#8d8d8b" d="M691.8 359.9L681.9 338.3L680.1 339.2L690 360.6ZM201.2 283L186.7 301.5L188 302.5L202.5 284.1ZM617 391.4L609.8 375.8L608.1 376.6L615.3 392.1ZM263.2 336.3L252.7 349.6L253.9 350.5L264.4 337.3Z"/>
<path fill="#8a8a88" d="M671 318.9L657.8 299.2L656.2 300.3L669.3 320ZM289.4 211.9L268.8 223.4L269.8 225.1L290.3 213.6ZM602 361.8L592.4 347.5L590.9 348.6L600.4 362.8ZM326.5 284.8L311.6 293.1L312.6 294.7L327.4 286.5Z"/>
<path fill="#888886" d="M644.1 281.7L627.9 264.3L626.5 265.7L642.6 283ZM156.7 361.4L148.6 383.3L150 383.7L158 361.9ZM582.5 334.9L570.9 322.3L569.5 323.7L581.1 336.2ZM231.7 393L226 408.7L227.3 409.2L233 393.6Z"/>
<path fill="#878785" d="M628.5 264.9L611 248.7L609.7 250.2L627.1 266.2ZM421.7 178.8L397.9 179.8L398 181.7L421.7 180.8ZM212.8 319.9L201.1 337.3L203.2 338.6L214.7 321.3ZM571.3 322.7L558.7 311.1L557.4 312.5L569.9 324.1ZM421.9 260.6L404.7 261.3L404.9 263.2L421.9 262.5Z"/>
<path fill="#858583" d="M611.7 249.2L593 234.5L591.8 236.1L610.3 250.7ZM593.6 235L573.8 221.8L572.8 223.4L592.4 236.6ZM574.5 222.2L553.8 210.6L552.9 212.3L573.5 223.9ZM554.5 210.9L532.9 201L532.1 202.8L553.6 212.7ZM533.7 201.3L511.3 193L510.7 194.9L532.9 203.1ZM512.1 193.3L489.2 186.8L488.7 188.8L511.5 195.2ZM490 187L466.7 182.4L466.3 184.3L489.5 188.9ZM467.5 182.5L443.8 179.7L443.7 181.7L467.1 184.5ZM444.6 179.8L420.9 178.8L420.9 180.8L444.5 181.7ZM310.2 202.3L288.7 212.2L289.6 214L311 204.1ZM216.7 266.3L200.7 283.6L201.9 284.7L217.8 267.5ZM559.1 311.5L545.6 300.8L544.5 302.4L557.9 312.9ZM546.1 301.2L531.8 291.6L530.8 293.2L545 302.7ZM532.3 291.9L517.3 283.5L516.4 285.2L531.3 293.5ZM517.8 283.8L502.2 276.6L501.5 278.3L517 285.5ZM502.8 276.8L486.6 270.9L486.1 272.7L502 278.6ZM487.2 271.1L470.7 266.4L470.2 268.2L486.6 272.9ZM471.2 266.5L454.4 263.2L454.1 265L470.8 268.4ZM455 263.3L437.9 261.2L437.7 263.1L454.7 265.1ZM438.5 261.3L421.3 260.6L421.3 262.5L438.3 263.2ZM341.5 277.9L326 285L326.9 286.7L342.2 279.6ZM274.3 324.3L262.8 336.8L264 337.8L275.4 325.4Z"/>
<path fill="#8b8b89" d="M398.7 179.7L375.1 182.5L375.4 184.5L398.9 181.7ZM405.3 261.2L388.2 263.3L388.5 265.1L405.5 263.1Z"/>
<path fill="#8f8f8d" d="M375.9 182.4L352.6 187L353 188.9L376.2 184.3ZM269.5 223L249.8 236.2L250.9 237.8L270.5 224.7ZM155.8 361.1L147.7 383L149.1 383.4L157.1 361.6ZM388.8 263.2L372 266.5L372.4 268.4L389.1 265ZM312.1 292.8L297.9 302.3L299.1 303.8L313.1 294.4ZM230.9 392.7L225.1 408.5L226.4 408.9L232.2 393.2Z"/>
<path fill="#939391" d="M353.3 186.8L330.4 193.3L331.1 195.2L353.8 188.8ZM164.3 340.1L154.5 361.4L156 362L165.8 340.8ZM372.5 266.4L356 271.1L356.6 272.9L373 268.2ZM236.8 377.5L229.7 392.8L231.2 393.4L238.2 378.2Z"/>
<path fill="#9b9b98" d="M309.7 201L288 210.9L288.9 212.7L310.4 202.8ZM341 276.6L325.4 283.8L326.2 285.5L341.7 278.3Z"/>
<path fill="#a3a3a0" d="M268.7 221.8L248.9 235L250.1 236.6L269.7 223.4ZM200.1 282.1L185.5 300.7L187.1 301.8L201.6 283.4ZM163.3 339.6L153.5 361L155 361.6L164.8 340.3ZM311.4 291.6L297.1 301.2L298.2 302.7L312.4 293.2ZM262.1 335.4L251.5 348.8L253.1 349.9L263.6 336.6ZM235.9 377L228.8 392.4L230.2 393L237.3 377.7Z"/>
<path fill="#a7a7a4" d="M249.6 234.5L230.9 249.2L232.2 250.7L250.7 236.1ZM146.9 381.9L140.6 404.5L142.1 404.8L148.5 382.4ZM297.6 300.8L284.1 311.5L285.3 312.9L298.7 302.4ZM224.3 407.6L219.7 423.8L221.2 424.2L225.8 408.1Z"/>
<path fill="#646463" d="M712.4 471.9L711.5 448.2L709.5 448.4L710.4 471.9ZM332.1 195.8L310 204L310.6 205.5L332.6 197.4ZM631.6 472.3L630.9 455.2L629 455.4L629.7 472.3ZM357.4 273.5L341.5 279.4L342.1 280.8L357.9 275Z"/>
<path fill="#6a6a69" d="M711.6 449L708.8 425.5L706.8 425.8L709.6 449.2ZM631 455.8L629 438.9L627.1 439.2L629.1 456Z"/>
<path fill="#71716f" d="M708.9 426.3L704.3 403.1L702.3 403.6L706.9 426.6ZM629 439.4L625.7 422.7L623.9 423.1L627.2 439.7Z"/>
<path fill="#777775" d="M704.5 403.9L698.1 381.1L696.1 381.7L702.5 404.4ZM625.9 423.3L621.2 406.8L619.4 407.4L624 423.7Z"/>
<path fill="#797978" d="M698.3 381.9L690.1 359.7L688.3 360.4L696.4 382.5ZM621.4 407.4L615.5 391.4L613.7 392.1L619.6 408Z"/>
<path fill="#777776" d="M690.4 360.4L680.5 338.9L678.7 339.8L688.6 361.2ZM615.7 391.9L608.6 376.4L606.9 377.3L614 392.6Z"/>
<path fill="#757574" d="M680.9 339.7L669.3 319L667.6 320L679.1 340.5ZM608.8 376.9L600.5 362L598.9 363L607.1 377.8Z"/>
<path fill="#737372" d="M669.7 319.7L656.6 300L655 301.2L668 320.7ZM600.8 362.5L591.3 348.3L589.8 349.5L599.2 363.5Z"/>
<path fill="#717170" d="M657.1 300.7L642.4 282.1L640.9 283.4L655.4 301.8ZM591.7 348.8L581.1 335.4L579.6 336.6L590.1 349.9Z"/>
<path fill="#6f6f6e" d="M642.9 282.7L626.9 265.3L625.4 266.7L641.4 284ZM581.5 335.8L569.9 323.3L568.5 324.7L580 337.1Z"/>
<path fill="#6d6d6c" d="M627.4 265.9L610.1 249.8L608.7 251.3L626 267.3ZM570.3 323.7L557.8 312.1L556.5 313.6L568.9 325.1Z"/>
<path fill="#6c6c6a" d="M610.7 250.3L592.1 235.7L590.9 237.3L609.4 251.8ZM217.5 267.1L201.6 284.4L202.8 285.4L218.6 268.3ZM254.1 275.3L238.7 289.6L240.4 291.3L255.6 277.1ZM558.2 312.5L544.8 301.9L543.7 303.5L557 314ZM275.1 325L263.6 337.4L264.8 338.4L276.1 326.1Z"/>
<path fill="#6a6a68" d="M592.7 236.2L573.1 223L572 224.7L591.5 237.8ZM573.7 223.4L553.1 211.9L552.2 213.6L572.7 225.1ZM553.8 212.2L532.3 202.3L531.5 204.1L552.9 214ZM533.1 202.6L510.9 194.4L510.2 196.3L532.3 204.5ZM511.6 194.7L488.8 188.3L488.4 190.2L511 196.6ZM489.6 188.5L466.4 183.8L466.1 185.8L489.1 190.4ZM467.2 184L443.7 181.2L443.5 183.2L466.9 185.9ZM444.5 181.2L420.9 180.3L420.8 182.3L444.3 183.2ZM545.3 302.3L531.1 292.8L530.1 294.4L544.1 303.8ZM531.6 293.1L516.7 284.8L515.8 286.5L530.6 294.7ZM517.2 285L501.7 277.9L501 279.6L516.3 286.7ZM502.2 278.1L486.2 272.2L485.6 274L501.5 279.9ZM486.8 272.4L470.3 267.7L469.9 269.6L486.2 274.2ZM470.9 267.9L454.2 264.6L453.9 266.4L470.5 269.7ZM454.7 264.6L437.8 262.6L437.6 264.5L454.4 266.5ZM438.4 262.7L421.3 262L421.3 263.9L438.2 264.6Z"/>
<path fill="#6d6d6b" d="M421.7 180.3L398 181.2L398.2 183.2L421.6 182.3ZM421.9 262L404.8 262.7L405 264.6L421.9 263.9Z"/>
<path fill="#727270" d="M398.8 181.2L375.3 184L375.6 185.9L399 183.2ZM405.4 262.6L388.5 264.6L388.8 266.5L405.6 264.5Z"/>
<path fill="#767675" d="M376.1 183.8L352.9 188.5L353.3 190.4L376.4 185.8ZM389 264.6L372.3 267.9L372.7 269.7L389.3 266.4Z"/>
<path fill="#7b7b7a" d="M353.7 188.3L330.9 194.7L331.5 196.6L354.1 190.2ZM372.9 267.7L356.4 272.4L357 274.2L373.3 269.6Z"/>
<path fill="#80807e" d="M331.7 194.4L309.5 202.6L310.2 204.5L332.3 196.3ZM357 272.2L341 278.1L341.7 279.9L357.6 274Z"/>
<path fill="#999997" d="M232.5 249.8L215.1 265.9L216.5 267.3L233.7 251.3ZM285.4 312.1L272.9 323.7L274.3 325.1L286.7 313.6Z"/>
<path fill="#494948" d="M710.9 471.9L710 448.3L708.4 448.4L709.3 471.9ZM630.2 472.3L629.5 455.3L628 455.5L628.6 472.3Z"/>
<path fill="#4e4e4d" d="M710.1 449.1L707.3 425.8L705.7 426L708.4 449.2ZM591.8 237.4L572.3 224.3L571.4 225.6L590.9 238.6ZM572.9 224.7L552.4 213.2L551.6 214.6L572.1 226.1ZM553.1 213.5L531.7 203.7L531.1 205.2L552.4 215ZM532.5 204L510.4 195.8L509.9 197.4L531.8 205.5ZM511.1 196.1L488.5 189.7L488.1 191.3L510.6 197.6ZM629.6 455.9L627.6 439.1L626 439.3L628 456ZM544.4 303.4L530.3 294L529.5 295.3L543.5 304.7ZM530.8 294.3L516 286L515.3 287.4L530 295.6ZM516.6 286.3L501.2 279.2L500.6 280.6L515.9 287.7ZM501.7 279.4L485.8 273.5L485.3 275L501.1 280.8ZM486.3 273.7L470 269.1L469.7 270.6L485.9 275.2Z"/>
<path fill="#535351" d="M707.4 426.6L702.8 403.4L701.2 403.8L705.8 426.8ZM627.7 439.7L624.4 423L622.9 423.4L626.1 439.9Z"/>
<path fill="#585856" d="M703 404.2L696.6 381.6L695.1 382.1L701.4 404.6ZM624.5 423.6L619.9 407.3L618.4 407.7L623 423.9Z"/>
<path fill="#5a5a58" d="M696.9 382.3L688.7 360.2L687.2 360.8L695.3 382.8ZM620.1 407.8L614.2 391.9L612.8 392.5L618.6 408.3Z"/>
<path fill="#585857" d="M689 361L679.2 339.6L677.7 340.3L687.5 361.6ZM614.4 392.4L607.3 377L605.9 377.7L613 393Z"/>
<path fill="#575755" d="M679.5 340.3L668 319.8L666.6 320.6L678.1 341ZM607.6 377.6L599.3 362.8L598 363.6L606.2 378.3Z"/>
<path fill="#555554" d="M668.4 320.5L655.4 300.9L654 301.8L667 321.3ZM398.9 182.7L375.5 185.4L375.8 187L399 184.3ZM599.6 363.3L590.2 349.2L588.9 350.1L598.3 364.1ZM405.5 264L388.7 266L388.9 267.6L405.6 265.6Z"/>
<path fill="#545453" d="M655.8 301.5L641.3 283L640 284.1L654.5 302.5ZM590.5 349.6L580 336.3L578.8 337.3L589.3 350.5Z"/>
<path fill="#525251" d="M641.8 283.6L625.8 266.3L624.6 267.5L640.5 284.7ZM290.6 214.2L270.1 225.6L271 227L291.3 215.6ZM342.1 226.2L322.4 233.5L323.3 235.7L342.8 228.5ZM580.4 336.8L568.9 324.3L567.8 325.4L579.2 337.8ZM327.6 286.9L312.9 295.2L313.7 296.5L328.3 288.3Z"/>
<path fill="#515150" d="M626.4 266.9L609.1 250.9L608 252.2L625.2 268.1ZM569.3 324.7L556.8 313.2L555.8 314.4L568.2 325.8Z"/>
<path fill="#4f4f4e" d="M609.7 251.5L591.2 236.9L590.2 238.2L608.6 252.7ZM557.3 313.6L544 303.1L543.1 304.3L556.3 314.8Z"/>
<path fill="#4e4e4c" d="M489.3 189.9L466.2 185.3L465.9 186.9L488.9 191.5ZM470.6 269.2L453.9 265.9L453.7 267.5L470.2 270.7Z"/>
<path fill="#4d4d4c" d="M467 185.4L443.6 182.7L443.4 184.3L466.7 187ZM444.4 182.7L420.8 181.8L420.8 183.4L444.2 184.3ZM311.2 204.7L289.9 214.5L290.6 216L311.8 206.2ZM361.6 220.7L341.4 226.4L342.2 228.7L362.2 223ZM454.5 266L437.7 264L437.6 265.6L454.3 267.6ZM438.3 264.1L421.3 263.4L421.3 265L438.1 265.6ZM342.4 280.1L327.1 287.2L327.8 288.6L343 281.6Z"/>
<path fill="#50504f" d="M421.6 181.8L398.1 182.7L398.2 184.3L421.6 183.4ZM203.6 285.1L189.2 303.3L190.4 304.2L204.7 286ZM421.9 263.4L404.9 264.1L405.1 265.6L421.9 265ZM265.4 338.2L255.1 351.4L256.2 352.2L266.5 339.1Z"/>
<path fill="#5a5a59" d="M376.3 185.3L353.2 189.9L353.6 191.5L376.6 186.9ZM389.3 265.9L372.6 269.2L373 270.7L389.5 267.5Z"/>
<path fill="#5f5f5e" d="M354 189.7L331.3 196.1L331.8 197.6L354.4 191.3ZM373.2 269.1L356.9 273.7L357.3 275.2L373.5 270.6Z"/>
<path fill="#696968" d="M310.8 203.7L289.4 213.5L290.1 215L311.4 205.2ZM342 279.2L326.6 286.3L327.3 287.7L342.6 280.6Z"/>
<path fill="#6e6e6d" d="M290.1 213.2L269.5 224.7L270.4 226.1L290.8 214.6ZM327.2 286L312.4 294.3L313.2 295.6L327.9 287.4Z"/>
<path fill="#747472" d="M270.2 224.3L250.7 237.4L251.6 238.6L271.1 225.6ZM312.9 294L298.8 303.4L299.7 304.7L313.7 295.3Z"/>
<path fill="#797977" d="M251.3 236.9L232.8 251.5L233.9 252.7L252.2 238.2ZM299.2 303.1L285.9 313.6L286.9 314.8L300.1 304.3Z"/>
<path fill="#7e7e7c" d="M233.4 250.9L216.1 266.9L217.3 268.1L234.5 252.2ZM225.4 303.9L212.4 320.4L214.3 321.8L227.2 305.5ZM286.4 313.2L273.9 324.7L275 325.8L287.4 314.4Z"/>
<path fill="#b8b8b6" d="M139.7 403.4L135.1 426.6L136.7 426.8L141.2 403.8ZM218.8 423L215.5 439.7L217.1 439.9L220.3 423.4Z"/>
<path fill="#333332" d="M709.8 471.9L708.9 448.4L707.2 448.5L708.1 471.8ZM489 191L466 186.4L465.7 188L488.6 192.5ZM466.8 186.5L443.5 183.8L443.3 185.4L466.5 188.1ZM444.3 183.8L420.8 182.9L420.8 184.5L444.1 185.4ZM629.1 472.3L628.5 455.4L626.9 455.6L627.6 472.3ZM470.3 270.3L453.8 267L453.5 268.5L470 271.8ZM454.4 267.1L437.6 265.1L437.5 266.6L454.1 268.6ZM438.2 265.1L421.3 264.5L421.3 266L438 266.7Z"/>
<path fill="#353534" d="M708.9 449.2L706.2 425.9L704.5 426.1L707.3 449.3ZM608.9 252.3L590.5 237.8L589.5 239.1L607.9 253.5ZM591.2 238.2L571.7 225.2L570.8 226.6L590.2 239.5ZM421.6 182.9L398.2 183.8L398.3 185.4L421.6 184.5ZM628.5 456L626.5 439.2L625 439.5L627 456.1ZM556.6 314.4L543.4 303.9L542.4 305.2L555.6 315.5ZM543.8 304.3L529.8 294.9L529 296.2L542.9 305.5ZM421.9 264.5L405 265.1L405.2 266.7L421.9 266Z"/>
<path fill="#373737" d="M706.3 426.7L701.7 403.7L700.1 404.1L704.7 426.9ZM654.9 302.2L640.4 283.7L639.1 284.8L653.6 303.1ZM626.6 439.8L623.3 423.3L621.8 423.6L625.1 440.1ZM589.7 350.2L579.2 337L578.1 338L588.4 351.2Z"/>
<path fill="#3a3a39" d="M701.9 404.5L695.5 381.9L694 382.4L700.3 404.8ZM695.8 382.7L687.7 360.7L686.2 361.3L694.2 383.1ZM688 361.4L678.1 340.1L676.7 340.8L686.5 362ZM399 183.8L375.7 186.5L375.9 188.1L399.1 185.4ZM291.1 215.2L270.7 226.6L271.4 227.8L291.7 216.4ZM623.5 423.8L618.9 407.6L617.4 408.1L622 424.2ZM619.1 408.1L613.2 392.3L611.8 392.9L617.6 408.6ZM613.5 392.8L606.4 377.5L605 378.2L612 393.4ZM405.6 265.1L388.8 267.1L389.1 268.6L405.7 266.6ZM328.1 287.9L313.5 296.1L314.2 297.3L328.7 289.1Z"/>
<path fill="#393938" d="M678.5 340.8L667.1 320.3L665.7 321.2L677.1 341.5ZM679.9 472.4L679.1 451.4L676.7 451.6L677.5 472.4ZM606.7 378L598.4 363.3L597.1 364.1L605.3 378.7Z"/>
<path fill="#383837" d="M667.5 321L654.4 301.5L653.1 302.5L666.1 321.9ZM598.7 363.8L589.3 349.8L588.1 350.7L597.4 364.6Z"/>
<path fill="#373736" d="M640.9 284.4L625 267.1L623.8 268.3L639.7 285.4ZM311.6 205.7L290.4 215.5L291 216.8L312.1 207ZM579.6 337.4L568.1 325L567.1 326.1L578.4 338.4ZM342.8 281.1L327.6 288.1L328.2 289.4L343.4 282.4Z"/>
<path fill="#363635" d="M625.6 267.7L608.3 251.8L607.3 253L624.4 268.8ZM568.6 325.5L556.2 314L555.2 315.2L567.5 326.5Z"/>
<path fill="#343434" d="M572.3 225.6L551.9 214.2L551.1 215.6L571.5 227ZM332.8 197.9L310.9 206L311.4 207.4L333.2 199.3ZM235.5 253.3L218.4 269.1L219.4 270.1L236.4 254.4ZM530.3 295.2L515.6 286.9L514.9 288.3L529.5 296.5ZM358.1 275.5L342.3 281.3L342.8 282.6L358.5 276.8ZM288.3 315.5L276 326.8L277 327.8L289.2 316.5Z"/>
<path fill="#343433" d="M552.6 214.5L531.3 204.7L530.7 206.2L551.8 216ZM532 205L510 196.9L509.5 198.4L531.4 206.5ZM516.1 287.2L500.8 280.1L500.2 281.6L515.4 288.6ZM501.3 280.4L485.5 274.5L485 276L500.7 281.8Z"/>
<path fill="#333333" d="M510.8 197.1L488.2 190.8L487.8 192.3L510.3 198.7ZM486 274.7L469.8 270.1L469.4 271.6L485.5 276.2Z"/>
<path fill="#3f3f3e" d="M376.5 186.4L353.5 191L353.8 192.5L376.7 188ZM252.6 238.7L234.2 253.1L235.2 254.2L253.4 239.8ZM604.5 289.6L589.1 275.3L587.6 277.1L602.8 291.3ZM389.4 267L372.9 270.3L373.2 271.8L389.7 268.5ZM300.5 304.8L287.3 315.2L288.2 316.2L301.3 305.9Z"/>
<path fill="#444443" d="M354.3 190.8L331.7 197.1L332.2 198.7L354.6 192.3ZM651.9 355L641.7 336.7L639.6 338L649.8 356.1ZM373.4 270.1L357.2 274.7L357.7 276.2L373.8 271.6Z"/>
<path fill="#484847" d="M332.4 196.9L310.4 205L311 206.5L332.9 198.4ZM381.5 216.8L360.9 220.9L361.5 223.2L381.9 219.1ZM357.7 274.5L341.9 280.4L342.5 281.8L358.2 276Z"/>
<path fill="#575756" d="M270.8 225.2L251.3 238.2L252.2 239.5L271.6 226.6ZM323.1 233.2L304 242L305.1 244.1L324 235.4ZM313.4 294.9L299.4 304.3L300.3 305.5L314.2 296.2Z"/>
<path fill="#5c5c5b" d="M252 237.8L233.5 252.3L234.6 253.5L252.9 239.1ZM202.9 284.5L188.5 302.8L189.6 303.6L204 285.4ZM304.6 241.7L286.3 251.9L287.6 254L305.7 243.8ZM299.8 303.9L286.6 314.4L287.6 315.5L300.8 305.2ZM264.8 337.7L254.4 350.9L255.5 351.7L265.8 338.6Z"/>
<path fill="#626260" d="M234.1 251.8L216.9 267.7L218.1 268.8L235.2 253ZM287 314L274.6 325.5L275.7 326.5L288 315.2Z"/>
<path fill="#767674" d="M202.1 283.7L187.6 302.2L188.9 303.1L203.3 284.8ZM176.4 320.9L164.9 341.3L166.2 341.9L177.6 321.6ZM264 337L253.5 350.2L254.8 351.2L265.1 338ZM245.7 363.9L237.5 378.5L238.7 379.1L246.9 364.6Z"/>
<path fill="#7f7f7e" d="M188 301.5L175 321L176.4 321.9L189.3 302.5ZM253.9 349.8L244.5 363.8L245.8 364.6L255.1 350.7Z"/>
<path fill="#c4c4c2" d="M133.6 448.4L132.7 471.9L134.3 471.8L135.2 448.5ZM214.7 455.4L214.1 472.3L215.6 472.3L216.3 455.6Z"/>
<path fill="#2b2b2b" d="M708.6 471.8L707.7 448.5L706.3 448.6L707.2 471.8ZM628.1 472.3L627.4 455.5L626.1 455.6L626.7 472.3Z"/>
<path fill="#2a2a29" d="M707.8 449.3L705 426.1L703.6 426.3L706.3 449.4ZM627.5 456.1L625.5 439.4L624.2 439.6L626.1 456.2Z"/>
<path fill="#292928" d="M705.2 426.9L700.6 403.9L699.2 404.3L703.7 427.1ZM444.2 184.9L420.8 184L420.8 185.4L444 186.3ZM625.6 440L622.3 423.5L621 423.8L624.2 440.2ZM438.1 266.2L421.3 265.5L421.3 266.9L438 267.5Z"/>
<path fill="#282827" d="M700.8 404.7L694.5 382.2L693.1 382.7L699.4 405ZM466.6 187.6L443.4 184.9L443.3 186.3L466.3 189ZM376.8 188.4L353.9 192.9L354.3 194.3L377 189.8ZM622.5 424.1L617.9 407.9L616.6 408.3L621.1 424.4ZM454.2 268.1L437.5 266.1L437.4 267.5L454 269.4ZM389.7 268.9L373.3 272.1L373.6 273.5L389.9 270.2Z"/>
<path fill="#272726" d="M694.7 383L686.6 361.1L685.3 361.6L693.3 383.4ZM510.4 198.2L487.9 191.9L487.6 193.2L510 199.5ZM618.1 408.5L612.3 392.7L611 393.2L616.8 408.9ZM485.7 275.7L469.5 271.1L469.2 272.5L485.3 277Z"/>
<path fill="#262626" d="M686.9 361.8L677.1 340.6L675.8 341.2L685.6 362.3ZM399.1 185.8L376 188.5L376.2 189.9L399.2 187.2ZM612.5 393.2L605.5 378L604.2 378.6L611.2 393.8ZM405.8 267L389.2 269L389.4 270.3L405.9 268.4Z"/>
<path fill="#262625" d="M677.5 341.3L666.1 320.9L664.8 321.6L676.2 341.9ZM531.6 206L509.7 197.9L509.2 199.3L531 207.4ZM707.7 471.8L706.8 448.5L705.3 448.6L706.2 471.8ZM605.7 378.5L597.5 363.9L596.3 364.6L604.5 379.1ZM500.9 281.3L485.1 275.5L484.7 276.8L500.4 282.6ZM627.2 472.3L626.6 455.6L625.2 455.7L625.8 472.3Z"/>
<path fill="#252525" d="M666.5 321.6L653.5 302.2L652.3 303L665.3 322.3ZM552.1 215.5L530.8 205.7L530.3 207L551.4 216.8ZM706.8 449.3L704.1 426.2L702.7 426.4L705.4 449.4ZM597.8 364.4L588.5 350.4L587.4 351.2L596.6 365.1ZM515.6 288.1L500.4 281.1L499.8 282.4L515 289.4ZM626.6 456.2L624.6 439.6L623.3 439.8L625.2 456.3Z"/>
<path fill="#252524" d="M654 302.8L639.5 284.5L638.4 285.4L652.8 303.6ZM640 285.1L624.2 267.9L623.2 268.9L638.9 286ZM421.6 184.9L398.3 185.8L398.4 187.3L421.6 186.4ZM588.8 350.9L578.4 337.7L577.4 338.6L587.7 351.7ZM578.8 338.1L567.4 325.8L566.4 326.8L577.8 339ZM421.9 266.4L405.2 267L405.3 268.4L421.9 267.8Z"/>
<path fill="#242424" d="M624.7 268.5L607.6 252.6L606.6 253.7L623.7 269.5ZM571.7 226.6L551.4 215.2L550.7 216.4L571 227.8ZM704.2 427L699.7 404.1L698.3 404.5L702.8 427.2ZM567.8 326.2L555.5 314.8L554.6 315.8L566.8 327.2ZM529.7 296.1L515.1 287.9L514.5 289.1L529 297.3ZM624.7 440.1L621.5 423.7L620.1 424L623.4 440.3Z"/>
<path fill="#242423" d="M608.2 253.1L589.8 238.7L589 239.8L607.2 254.2ZM590.5 239.1L571.1 226.2L570.3 227.4L589.6 240.3ZM444.1 185.8L420.8 184.9L420.8 186.4L444 187.3ZM555.9 315.2L542.7 304.8L541.9 305.9L555 316.2ZM543.2 305.1L529.2 295.8L528.5 297L542.4 306.2ZM438 267L421.3 266.4L421.3 267.8L437.9 268.4Z"/>
<path fill="#272727" d="M488.7 192L465.8 187.5L465.6 188.9L488.4 193.4ZM470.1 271.3L453.6 268L453.4 269.4L469.8 272.6Z"/>
<path fill="#2a2a2a" d="M421.6 184L398.3 184.9L398.4 186.3L421.6 185.4ZM421.9 265.5L405.1 266.2L405.2 267.5L421.9 266.9Z"/>
<path fill="#2d2d2c" d="M399.1 184.9L375.9 187.6L376.1 189L399.2 186.3ZM405.7 266.1L389 268.1L389.2 269.4L405.8 267.5Z"/>
<path fill="#2f2f2f" d="M376.7 187.5L353.7 192L354.1 193.4L376.9 188.9ZM271.9 226.9L252.5 239.9L253.3 241L272.6 228.1ZM389.6 268L373.1 271.3L373.4 272.6L389.8 269.4ZM314.4 296.5L300.5 305.8L301.3 306.9L315.1 297.7Z"/>
<path fill="#323231" d="M354.5 191.9L332 198.2L332.5 199.5L354.8 193.2ZM373.7 271.1L357.5 275.7L357.9 277L374 272.5Z"/>
<path fill="#3c3c3b" d="M271.4 226.2L252 239.1L252.8 240.3L272.1 227.4ZM556.9 251.9L538.6 241.7L537.5 243.8L555.6 254ZM539.2 242L520.1 233.2L519.2 235.4L538.1 244.1ZM520.8 233.5L501.1 226.2L500.4 228.5L519.9 235.7ZM501.8 226.4L481.6 220.7L481 223L501 228.7ZM482.3 220.9L461.7 216.8L461.3 219.1L481.7 223.2ZM462.4 216.9L441.5 214.4L441.3 216.8L462 219.3ZM314 295.8L300 305.1L300.8 306.2L314.7 297Z"/>
<path fill="#434342" d="M234.9 252.6L217.7 268.5L218.7 269.5L235.8 253.7ZM401.7 214.4L380.8 216.9L381.2 219.3L401.9 216.8ZM287.7 314.8L275.4 326.2L276.4 327.2L288.6 315.8Z"/>
<path fill="#50504e" d="M218.3 267.9L202.4 285.1L203.5 286L219.3 268.9ZM275.8 325.8L264.4 338.1L265.4 339L276.8 326.8Z"/>
<path fill="#696967" d="M188.9 302.2L175.9 321.6L177.2 322.3L190.1 303ZM254.7 350.4L245.4 364.4L246.6 365.1L255.8 351.2Z"/>
<path fill="#828280" d="M165.3 340.6L155.5 361.8L156.8 362.3L166.6 341.2ZM237.7 378L230.7 393.2L232 393.8L239 378.6Z"/>
<path fill="#a9a9a6" d="M141.8 403.9L137.3 426.9L138.7 427.1L143.2 404.3ZM182 349.5L172.9 369.4L174.5 370.1L183.6 350.3ZM220.9 423.5L217.6 440L219 440.2L222.2 423.8Z"/>
<path fill="#b5b5b3" d="M137.4 426.1L134.6 449.3L136.1 449.4L138.8 426.3ZM217.7 439.4L215.7 456.1L217.1 456.2L219 439.6Z"/>
<path fill="#232323" d="M699.9 404.9L693.6 382.5L692.2 382.9L698.5 405.2ZM466.4 188.5L443.3 185.8L443.2 187.2L466.2 189.9ZM621.6 424.3L617.1 408.2L615.8 408.6L620.3 424.6ZM454 269L437.4 267L437.3 268.4L453.8 270.3Z"/>
<path fill="#232322" d="M693.8 383.3L685.7 361.4L684.4 361.9L692.4 383.7ZM686 362.2L676.3 341L675 341.6L684.7 362.7ZM488.5 192.9L465.6 188.4L465.4 189.8L488.1 194.3ZM617.2 408.7L611.5 393L610.2 393.6L615.9 409.2ZM611.7 393.6L604.7 378.4L603.5 379L610.4 394.1ZM469.9 272.1L453.5 268.9L453.3 270.2L469.6 273.5Z"/>
<path fill="#222222" d="M676.7 341.7L665.3 321.4L664 322.1L675.4 342.3ZM510.1 199.1L487.7 192.8L487.4 194.1L509.7 200.4ZM604.9 378.9L596.8 364.3L595.6 365L603.7 379.5ZM485.4 276.5L469.3 272L469 273.3L485 277.8Z"/>
<path fill="#222221" d="M665.7 322.1L652.7 302.7L651.6 303.5L664.5 322.8ZM531.2 206.9L509.4 198.8L508.9 200.2L530.7 208.2ZM597.1 364.8L587.8 350.9L586.7 351.7L595.9 365.5ZM500.6 282.1L484.9 276.4L484.4 277.7L500 283.4Z"/>
<path fill="#212121" d="M653.2 303.3L638.8 285.1L637.7 286L652 304.2ZM639.3 285.7L623.5 268.6L622.5 269.6L638.2 286.6ZM551.6 216.3L530.5 206.6L529.9 207.9L551 217.6ZM588.1 351.4L577.8 338.2L576.7 339.1L587 352.2ZM578.1 338.7L566.8 326.4L565.8 327.4L577.1 339.6ZM515.2 288.9L500 281.9L499.5 283.2L514.6 290.1Z"/>
<path fill="#212120" d="M624.1 269.1L607 253.3L606 254.4L623 270.1ZM571.2 227.4L550.9 216L550.3 217.2L570.5 228.6ZM567.2 326.8L554.9 315.5L554 316.5L566.2 327.8ZM529.3 296.8L514.7 288.7L514.1 289.9L528.6 298Z"/>
<path fill="#202020" d="M607.6 253.8L589.3 239.4L588.4 240.6L606.6 254.9ZM589.9 239.9L570.6 226.9L569.8 228.1L589.1 241ZM555.4 315.8L542.2 305.5L541.4 306.6L554.5 316.9ZM542.7 305.8L528.8 296.5L528.1 297.7L541.9 306.9Z"/>
<path fill="#292929" d="M354.7 192.8L332.3 199.1L332.7 200.4L355 194.1ZM373.9 272L357.8 276.5L358.2 277.8L374.2 273.3Z"/>
<path fill="#2b2b2a" d="M333.1 198.8L311.2 206.9L311.7 208.2L333.5 200.2ZM358.3 276.4L342.6 282.1L343.2 283.4L358.8 277.7Z"/>
<path fill="#2c2c2c" d="M311.9 206.6L290.8 216.3L291.4 217.6L312.5 207.9ZM343.2 281.9L328 288.9L328.6 290.1L343.7 283.2Z"/>
<path fill="#2e2e2d" d="M291.5 216L271.2 227.4L271.9 228.6L292.1 217.2ZM328.5 288.7L313.9 296.8L314.6 298L329.1 289.9Z"/>
<path fill="#313130" d="M253.1 239.4L234.8 253.8L235.8 254.9L254 240.6ZM301 305.5L287.8 315.8L288.7 316.9L301.8 306.6Z"/>
<path fill="#424241" d="M218.9 268.6L203.1 285.7L204.2 286.6L219.9 269.6ZM642.1 337.3L630.4 319.9L628.5 321.3L640 338.6ZM276.4 326.4L265.1 338.7L266.1 339.6L277.4 327.4Z"/>
<path fill="#5e5e5d" d="M189.7 302.7L176.7 322.1L177.9 322.8L190.8 303.5ZM255.4 350.9L246.1 364.8L247.3 365.5L256.5 351.7Z"/>
<path fill="#6c6c6b" d="M177.1 321.4L165.8 341.7L167 342.3L178.4 322.1ZM246.4 364.3L238.3 378.9L239.5 379.5L247.6 365Z"/>
<path fill="#7a7a79" d="M166.1 341L156.4 362.2L157.7 362.7L167.4 341.6ZM238.5 378.4L231.5 393.6L232.8 394.1L239.7 379Z"/>
<path fill="#969694" d="M148.9 382.5L142.5 404.9L143.9 405.2L150.2 382.9ZM226.1 408.2L221.6 424.3L222.9 424.6L227.4 408.6Z"/>
<path fill="#a4a4a2" d="M142.7 404.1L138.2 427L139.6 427.2L144.1 404.5ZM653.6 354.2L643.3 335.7L641.3 337L651.5 355.3ZM401.5 212.5L380.5 215L380.9 217.4L401.7 214.9ZM221.7 423.7L218.5 440.1L219.8 440.3L223.1 424Z"/>
<path fill="#ccccc8" d="M359.2 210.3L338.1 216.2L338.6 217.9L359.6 212Z"/>
<path fill="#a5a5a2" d="M173.2 368.7L165.6 389.2L167.3 389.8L174.8 369.4ZM662.2 372.8L653.3 353.5L651.2 354.6L660 373.7Z"/>
<path fill="#989896" d="M155.9 429.5L153.4 451.3L155.1 451.4L157.7 429.8Z"/>
<path fill="#b7b7b5" d="M157.2 429.7L154.6 451.4L157 451.5L159.5 430.1Z"/>
<path fill="#f3f3f0" d="M594.6 270L577.6 256.7L576.2 258.6L593 271.9Z"/>
<path fill="#f5f5f2" d="M578.2 257.1L560.2 245.1L559 247.1L576.8 259Z"/>
<path fill="#f0f0ed" d="M542.6 235.3L523 226.2L522.1 228.4L541.6 237.4Z"/>
<path fill="#eeeeea" d="M523.7 226.5L503.4 219L502.7 221.3L522.8 228.7Z"/>
<path fill="#ebebe8" d="M504.1 219.2L483.3 213.4L482.8 215.7L503.4 221.5Z"/>
<path fill="#d8d8d4" d="M657 352.5L646.5 333.7L644.5 335L654.9 353.6ZM523 228.2L502.8 220.8L502.1 223.1L522.1 230.4Z"/>
<path fill="#969693" d="M681.8 472.4L681 451.2L678.6 451.4L679.4 472.4Z"/>
<path fill="#9f9f9d" d="M678.7 431.6L674.6 410.9L672.2 411.5L676.3 432ZM574.9 261.7L557.3 249.9L556 252L573.4 263.6ZM557.9 250.3L539.4 240L538.3 242.1L556.6 252.3ZM540.1 240.3L520.8 231.4L519.9 233.6L539 242.4Z"/>
<path fill="#a6a6a3" d="M669.2 391.9L661.9 372.1L659.7 373L666.9 392.7Z"/>
<path fill="#a1a19f" d="M422 211.8L400.8 212.6L401 215L422 214.2Z"/>
<path fill="#3d3d3c" d="M679.2 452.1L676.7 431.2L674.3 431.6L676.8 452.3ZM573.7 263.2L556.3 251.5L555 253.6L572.3 265.1Z"/>
<path fill="#414140" d="M676.8 431.9L672.7 411.3L670.4 411.9L674.5 432.3ZM630.8 320.4L617.8 303.9L616 305.5L628.9 321.8Z"/>
<path fill="#454544" d="M672.9 412L667.2 391.8L664.9 392.6L670.6 412.6ZM660.4 373.5L651.6 354.4L649.5 355.5L658.2 374.4Z"/>
<path fill="#464645" d="M667.4 392.5L660.1 372.8L657.9 373.7L665.1 393.2Z"/>
<path fill="#40403f" d="M618.3 304.5L604 289.1L602.3 290.8L616.5 306Z"/>
<path fill="#3d3d3d" d="M589.7 275.8L573.2 262.8L571.8 264.7L588.1 277.6Z"/>
<path fill="#3b3b3a" d="M442.2 214.5L421.2 213.7L421.2 216.1L442 216.9Z"/>
<path fill="#3e3e3d" d="M422 213.7L401 214.5L401.2 216.9L422 216.1Z"/>
<path fill="#616160" d="M286.9 251.5L269.5 263.2L270.9 265.1L288.2 253.6Z"/>
<path fill="#666665" d="M270 262.8L253.5 275.8L255.1 277.6L271.4 264.7Z"/>
<path fill="#757573" d="M239.2 289.1L224.9 304.5L226.7 306L240.9 290.8Z"/>
<path fill="#999996" d="M191.6 354.4L182.8 373.5L185 374.4L193.7 355.5Z"/>
<path fill="#b3b3b1" d="M170.5 411.3L166.4 431.9L168.7 432.3L172.8 411.9Z"/>
<path fill="#ff8282" d="M626.3 472.3L625.7 455.7L567.5 460.3L567.9 472.2ZM625.7 456.2L623.8 439.7L566.1 448.9L567.5 460.7ZM623.9 440.3L620.6 423.9L563.9 437.6L566.2 449.3ZM620.8 424.5L616.2 408.5L560.7 426.6L564 438ZM616.4 409L610.7 393.4L556.7 415.8L560.9 427ZM610.9 393.9L603.9 378.8L551.9 405.4L556.9 416.2ZM604.2 379.3L596 364.8L546.3 395.4L552.1 405.7ZM596.3 365.3L587.1 351.4L539.9 385.8L546.5 395.7ZM587.4 351.9L577.1 338.8L532.8 376.8L540.1 386.1ZM577.5 339.2L566.2 327L524.9 368.4L533 377.1ZM566.6 327.4L554.4 316.1L516.5 360.6L525.2 368.7ZM554.8 316.5L541.7 306.2L507.5 353.5L516.8 360.8ZM542.2 306.5L528.3 297.3L497.9 347.1L507.8 353.7ZM528.8 297.6L514.3 289.4L487.9 341.5L498.2 347.3ZM514.8 289.7L499.7 282.7L477.4 336.7L488.2 341.7ZM500.2 282.9L484.6 277.2L466.6 332.7L477.8 336.9ZM485.1 277.4L469.1 272.8L455.6 329.6L467 332.9ZM469.7 273L453.3 269.7L444.3 327.4L456 329.7ZM453.9 269.8L437.4 267.9L432.9 326.1L444.7 327.5ZM437.9 267.9L421.3 267.3L421.4 325.7L433.3 326.1ZM421.9 267.3L405.3 267.9L409.9 326.1L421.8 325.7ZM405.8 267.9L389.3 269.8L398.5 327.5L410.3 326.1ZM389.9 269.7L373.5 273L387.2 329.7L398.9 327.4ZM374.1 272.8L358.1 277.4L376.2 332.9L387.6 329.6ZM358.6 277.2L343 282.9L365.4 336.9L376.6 332.7ZM343.5 282.7L328.4 289.7L355 341.7L365.8 336.7ZM328.9 289.4L314.4 297.6L345 347.3L355.3 341.5ZM314.9 297.3L301 306.5L335.4 353.7L345.3 347.1ZM301.5 306.2L288.4 316.5L326.4 360.8L335.7 353.5ZM288.8 316.1L276.6 327.4L318 368.7L326.7 360.6ZM277 327L265.7 339.2L310.2 377.1L318.3 368.4ZM266.1 338.8L255.8 351.9L303.1 386.1L310.4 376.8ZM256.1 351.4L246.9 365.3L296.7 395.7L303.3 385.8ZM247.2 364.8L239 379.3L291.1 405.7L296.9 395.4ZM239.3 378.8L232.3 393.9L286.3 416.2L291.3 405.4ZM232.5 393.4L226.8 409L282.3 427L286.5 415.8ZM227 408.5L222.4 424.5L279.2 438L282.5 426.6ZM222.6 423.9L219.3 440.3L277 449.3L279.3 437.6ZM219.4 439.7L217.5 456.2L275.7 460.7L277.1 448.9ZM217.5 455.7L216.9 472.3L275.3 472.2L275.7 460.3Z"/>
<path fill="#bcbbb7" d="M566.7 449.2L564.3 437.5L559.4 438.7L561.6 450ZM433.3 325.6L421.4 325.2L421.4 330.3L432.9 330.7Z"/>
<path fill="#bbbab6" d="M564.4 437.9L561.2 426.4L556.4 428L559.5 439.1ZM444.8 327L432.9 325.6L432.5 330.7L444 332Z"/>
<path fill="#b8b7b2" d="M525.6 368.3L516.8 360.2L513.5 364.1L522 371.9ZM517.1 360.5L507.8 353.1L504.8 357.2L513.8 364.3Z"/>
<path fill="#c2c1bc" d="M376.4 332.3L365.2 336.4L367.2 341.1L378 337.1Z"/>
<path fill="#c5c4bf" d="M355.1 341.1L344.7 346.9L347.4 351.2L357.4 345.6Z"/>
<path fill="#cbcac5" d="M317.9 368L309.8 376.8L313.7 380.1L321.5 371.6Z"/>
<path fill="#cdccc7" d="M310.1 376.5L302.7 385.8L306.8 388.8L313.9 379.8Z"/>
<path fill="#cecdc8" d="M302.9 385.5L296.3 395.4L300.6 398.1L307 388.5Z"/>
<path fill="#d1d0cc" d="M290.8 405.1L285.8 416L290.6 417.9L295.4 407.5Z"/>
<path d="M807.4 447.3L766.9 449.8M757.3 444.1L625.5 456M803.8 417.1L763.7 422.8M754.2 417.8L623.6 440M797.9 387.3L758.4 396M749 391.9L620.4 424.3M789.7 358.1L751 369.7M741.8 366.5L616.1 408.8M779.2 329.6L741.6 344.2M732.7 341.7L610.5 393.7M766.4 302L730.1 319.4M721.6 317.6L603.8 379.2M751.6 275.5L716.8 295.6M708.7 294.6L596 365.1M734.7 250.2L701.7 272.9M694 272.6L587 351.8M715.9 226.4L684.8 251.5M677.6 251.8L577.1 339.2M695.3 204.1L666.2 231.5M659.7 232.4L566.2 327.4M673 183.5L646.2 212.9M640.3 214.5L554.4 316.5M649.2 164.7L624.8 196M619.5 198.1L541.8 306.6M623.9 147.8L602.1 180.9M597.5 183.4L528.5 297.6M597.4 133L578.3 167.6M574.5 170.5L514.4 289.8M569.8 120.2L553.5 156.1M550.4 159.4L499.9 283.1M541.3 109.7L528 146.7M525.6 150.3L484.8 277.5M512.1 101.5L501.7 139.3M500.2 143.1L469.3 273.2M482.3 95.6L474.9 134M474.3 137.9L453.6 270M452.1 92L447.9 130.8M448 134.8L437.6 268.1M421.8 90.8L420.6 129.7M421.6 133.8L421.6 267.5M391.5 92L393.3 130.8M395.2 134.8L405.6 268.1M361.3 95.6L366.3 134M368.9 137.9L389.6 270M331.5 101.5L339.5 139.3M343 143.1L373.9 273.2M302.3 109.7L313.2 146.7M317.6 150.3L358.4 277.5M273.8 120.2L287.7 156.1M292.8 159.4L343.3 283.1M246.2 133L262.9 167.6M268.7 170.5L328.8 289.8M219.7 147.8L239.1 180.9M245.7 183.4L314.7 297.6M194.4 164.7L216.4 196M223.7 198.1L301.4 306.6M170.6 183.5L195 212.9M202.9 214.5L288.8 316.5M148.3 204.1L175 231.5M183.5 232.4L277 327.4M127.7 226.4L156.4 251.5M165.6 251.8L266.1 339.2M108.9 250.2L139.5 272.9M149.2 272.6L256.2 351.8M92 275.5L124.4 295.6M134.5 294.6L247.2 365.1M77.2 302L111.1 319.4M121.6 317.6L239.4 379.2M64.4 329.6L99.6 344.2M110.5 341.7L232.7 393.7M53.9 358.1L90.2 369.7M101.4 366.5L227.1 408.8M45.7 387.3L82.8 396M94.2 391.9L222.8 424.3M39.8 417.1L77.5 422.8M89 417.8L219.6 440M36.2 447.3L74.3 449.8M85.9 444.1L217.7 456" stroke="#fff" stroke-opacity=".7" stroke-width=".5" fill="none"/>
<path d="M744.4 472L743.4 446.7L740.4 421.5L735.5 396.6L728.6 372.2L719.8 348.5L709.2 325.5L696.8 303.3L682.8 282.3L667.1 262.4L649.9 243.7L631.2 226.5L611.3 210.8L590.3 196.8L568.1 184.4L545.1 173.8L521.4 165L497 158.1L472.1 153.2L446.9 150.2L421.6 149.2L396.3 150.2L371.1 153.2L346.2 158.1L321.8 165L298.1 173.8L275.1 184.4L252.9 196.8L231.9 210.8L212 226.5L193.3 243.7L176.1 262.4L160.4 282.3L146.4 303.3L134 325.5L123.4 348.5L114.6 372.2L107.7 396.6L102.8 421.5L99.8 446.7L98.8 472M742.9 472L741.9 446.8L738.9 421.7L734 397L727.2 372.7L718.4 349L707.9 326.1L695.5 304.1L681.5 283.1L665.9 263.3L648.8 244.8L630.3 227.7L610.4 212L589.5 198L567.5 185.7L544.5 175.1L520.9 166.4L496.6 159.6L471.8 154.6L446.8 151.7L421.6 150.7L396.4 151.7L371.3 154.6L346.6 159.6L322.3 166.4L298.6 175.1L275.7 185.7L253.7 198L232.7 212L212.9 227.7L194.4 244.8L177.3 263.3L161.6 283.1L147.6 304.1L135.3 326.1L124.7 349L116 372.7L109.2 397L104.2 421.7L101.3 446.8L100.3 472M741 471.9L740 446.9L737.1 422L732.2 397.4L725.4 373.2L716.7 349.7L706.2 326.9L693.9 305L680 284.2L664.5 264.5L647.4 246.1L629 229.1L609.3 213.5L588.5 199.6L566.6 187.3L543.8 176.8L520.3 168.2L496.1 161.3L471.5 156.5L446.6 153.5L421.6 152.5L396.5 153.5L371.6 156.5L347 161.3L322.9 168.2L299.3 176.8L276.5 187.3L254.7 199.6L233.8 213.5L214.1 229.1L195.7 246.1L178.7 264.5L163.1 284.2L149.2 305L137 326.9L126.5 349.7L117.8 373.2L111 397.4L106.1 422L103.1 446.9L102.1 471.9M738 471.9L737 447.1L734.1 422.4L729.2 398L722.5 374.1L713.9 350.8L703.5 328.2L691.3 306.6L677.5 285.9L662.1 266.4L645.3 248.2L627 231.3L607.5 215.9L586.9 202.1L565.2 190L542.6 179.6L519.3 171L495.4 164.2L471 159.4L446.4 156.4L421.5 155.5L396.7 156.4L372 159.4L347.7 164.2L323.8 171L300.4 179.6L277.9 190L256.2 202.1L235.5 215.9L216 231.3L197.8 248.2L180.9 266.4L165.5 285.9L151.7 306.6L139.6 328.2L129.2 350.8L120.6 374.1L113.8 398L109 422.4L106.1 447.1L105.1 471.9M735.3 471.9L734.3 447.2L731.4 422.8L726.6 398.6L719.9 374.9L711.4 351.8L701.1 329.4L689.1 307.9L675.4 287.4L660.1 268.1L643.4 250L625.3 233.2L606 218L585.5 204.3L564 192.3L541.6 181.9L518.5 173.4L494.8 166.7L470.6 161.9L446.1 159L421.5 158.1L396.9 159L372.4 161.9L348.2 166.7L324.5 173.4L301.4 181.9L279 192.3L257.5 204.3L237.1 218L217.7 233.2L199.6 250L182.9 268.1L167.6 287.4L153.9 307.9L141.9 329.4L131.6 351.8L123.1 374.9L116.4 398.6L111.6 422.8L108.7 447.2L107.7 471.9M733.4 471.8L732.4 447.4L729.6 423L724.8 399L718.1 375.4L709.7 352.5L699.4 330.2L687.4 308.8L673.8 288.5L658.7 269.2L642 251.3L624.1 234.6L604.8 219.5L584.5 205.9L563.1 193.9L540.9 183.6L517.9 175.2L494.3 168.5L470.3 163.7L446 160.9L421.5 159.9L397 160.9L372.7 163.7L348.7 168.5L325.1 175.2L302.1 183.6L279.9 193.9L258.5 205.9L238.1 219.5L218.9 234.6L200.9 251.3L184.3 269.2L169.1 288.5L155.5 308.8L143.6 330.2L133.3 352.5L124.8 375.4L118.2 399L113.4 423L110.5 447.4L109.6 471.8M731.5 471.8L730.6 447.5L727.7 423.3L722.9 399.4L716.3 376L707.9 353.1L697.7 331L685.8 309.8L672.3 289.6L657.2 270.4L640.7 252.6L622.8 236L603.7 221L583.5 207.4L562.2 195.5L540.1 185.3L517.3 176.9L493.8 170.3L470 165.6L445.8 162.7L421.5 161.7L397.1 162.7L373 165.6L349.1 170.3L325.7 176.9L302.8 185.3L280.7 195.5L259.5 207.4L239.2 221L220.1 236L202.2 252.6L185.7 270.4L170.6 289.6L157.1 309.8L145.2 331L135 353.1L126.6 376L120 399.4L115.2 423.3L112.4 447.5L111.4 471.8M729.2 471.8L728.3 447.6L725.5 423.6L720.7 399.9L714.2 376.6L705.8 354L695.7 332L683.9 310.9L670.5 290.8L655.5 271.9L639.1 254.1L621.3 237.7L602.4 222.7L582.3 209.3L561.2 197.5L539.2 187.4L516.6 179L493.3 172.5L469.6 167.7L445.6 164.9L421.4 164L397.3 164.9L373.3 167.7L349.6 172.5L326.3 179L303.7 187.4L281.7 197.5L260.6 209.3L240.5 222.7L221.5 237.7L203.8 254.1L187.4 271.9L172.4 290.8L159 310.9L147.2 332L137.1 354L128.7 376.6L122.1 399.9L117.4 423.6L114.6 447.6L113.6 471.8M726.6 471.7L725.6 447.8L722.8 424L718.2 400.5L711.7 377.4L703.4 354.9L693.3 333.2L681.6 312.3L668.3 292.3L653.5 273.5L637.2 255.9L619.6 239.7L600.8 224.8L580.9 211.5L560 199.8L538.2 189.8L515.7 181.5L492.7 175L469.2 170.3L445.4 167.5L421.4 166.5L397.5 167.5L373.7 170.3L350.2 175L327.1 181.5L304.6 189.8L282.9 199.8L262 211.5L242 224.8L223.2 239.7L205.6 255.9L189.4 273.5L174.5 292.3L161.2 312.3L149.5 333.2L139.5 354.9L131.2 377.4L124.7 400.5L120 424L117.2 447.8L116.2 471.7M723.6 471.7L722.6 448L719.8 424.4L715.2 401.1L708.8 378.3L700.6 356L690.6 334.5L679 313.8L665.8 294.1L651.2 275.4L635 258L617.6 241.9L599 227.2L579.3 214L558.6 202.4L537 192.5L514.8 184.3L491.9 177.8L468.7 173.2L445.1 170.4L421.4 169.5L397.7 170.4L374.1 173.2L350.8 177.8L328 184.3L305.7 192.5L284.2 202.4L263.5 214L243.8 227.2L225.1 241.9L207.7 258L191.6 275.4L176.9 294.1L163.7 313.8L152.1 334.5L142.2 356L134 378.3L127.6 401.1L122.9 424.4L120.1 448L119.2 471.7M720.5 471.6L719.6 448.1L716.8 424.8L712.3 401.8L705.9 379.2L697.7 357.1L687.9 335.8L676.4 315.3L663.4 295.8L648.8 277.3L632.9 260.1L615.6 244.1L597.2 229.6L577.7 216.5L557.2 205.1L535.8 195.2L513.8 187.1L491.2 180.7L468.1 176.1L444.8 173.4L421.3 172.4L397.9 173.4L374.5 176.1L351.5 180.7L328.9 187.1L306.9 195.2L285.5 205.1L265 216.5L245.5 229.6L227 244.1L209.8 260.1L193.9 277.3L179.3 295.8L166.3 315.3L154.8 335.8L144.9 357.1L136.8 379.2L130.4 401.8L125.9 424.8L123.1 448.1L122.2 471.6M717.9 471.6L717 448.3L714.2 425.2L709.7 402.4L703.4 379.9L695.3 358.1L685.5 336.9L674.2 316.6L661.2 297.3L646.8 279L631 261.9L613.9 246.1L595.6 231.7L576.3 218.7L556 207.4L534.8 197.6L513 189.5L490.5 183.2L467.7 178.7L444.6 175.9L421.3 175L398.1 175.9L374.9 178.7L352.1 183.2L329.7 189.5L307.8 197.6L286.7 207.4L266.4 218.7L247 231.7L228.7 246.1L211.6 261.9L195.8 279L181.4 297.3L168.5 316.6L157.1 336.9L147.3 358.1L139.3 379.9L133 402.4L128.4 425.2L125.7 448.3L124.8 471.6M715.6 471.5L714.7 448.5L712 425.5L707.5 402.8L701.2 380.6L693.2 358.9L683.5 337.9L672.2 317.8L659.4 298.6L645.1 280.4L629.4 263.4L612.4 247.8L594.3 233.5L575.1 220.6L554.9 209.3L533.9 199.6L512.2 191.6L490 185.4L467.3 180.9L444.4 178.2L421.3 177.2L398.2 178.2L375.3 180.9L352.6 185.4L330.4 191.6L308.7 199.6L287.7 209.3L267.5 220.6L248.3 233.5L230.2 247.8L213.2 263.4L197.5 280.4L183.2 298.6L170.4 317.8L159.1 337.9L149.4 358.9L141.4 380.6L135.1 402.8L130.6 425.5L127.9 448.5L127 471.5M713.7 471.5L712.8 448.6L710.1 425.8L705.6 403.2L699.4 381.1L691.4 359.6L681.8 338.8L670.6 318.7L657.9 299.6L643.6 281.6L628.1 264.7L611.2 249.2L593.2 234.9L574.1 222.2L554 211L533.2 201.3L511.6 193.4L489.5 187.2L467 182.7L444.2 180L421.3 179.1L398.3 180L375.5 182.7L353 187.2L330.9 193.4L309.4 201.3L288.5 211L268.5 222.2L249.4 234.9L231.4 249.2L214.5 264.7L198.9 281.6L184.7 299.6L171.9 318.7L160.7 338.8L151.1 359.6L143.2 381.1L136.9 403.2L132.5 425.8L129.8 448.6L128.9 471.5M712.2 471.5L711.3 448.7L708.6 426L704.1 403.6L697.9 381.6L690 360.2L680.5 339.4L669.3 319.5L656.6 300.5L642.5 282.5L627 265.8L610.2 250.3L592.3 236.1L573.3 223.4L553.3 212.3L532.6 202.7L511.2 194.8L489.2 188.6L466.8 184.1L444.1 181.5L421.3 180.6L398.4 181.5L375.7 184.1L353.3 188.6L331.4 194.8L309.9 202.7L289.2 212.3L269.3 223.4L250.3 236.1L232.3 250.3L215.5 265.8L200 282.5L185.9 300.5L173.2 319.5L162 339.4L152.5 360.2L144.6 381.6L138.4 403.6L133.9 426L131.2 448.7L130.3 471.5M710.7 471.5L709.8 448.8L707.1 426.2L702.7 403.9L696.5 382L688.6 360.7L679.1 340.1L668 320.2L655.4 301.3L641.3 283.5L625.9 266.8L609.2 251.4L591.4 237.3L572.5 224.7L552.6 213.6L532 204.1L510.7 196.2L488.8 190L466.5 185.6L444 182.9L421.2 182L398.5 182.9L376 185.6L353.7 190L331.8 196.2L310.5 204.1L289.8 213.6L270 224.7L251.1 237.3L233.3 251.4L216.6 266.8L201.2 283.5L187.1 301.3L174.5 320.2L163.4 340.1L153.9 360.7L146 382L139.8 403.9L135.4 426.2L132.7 448.8L131.8 471.5M709.5 471.4L708.6 448.8L706 426.3L701.6 404.1L695.4 382.4L687.6 361.1L678.1 340.6L667 320.8L654.5 302L640.5 284.2L625.1 267.6L608.5 252.2L590.7 238.2L571.9 225.6L552.1 214.6L531.6 205.1L510.3 197.3L488.5 191.1L466.3 186.7L443.9 184L421.2 183.1L398.6 184L376.1 186.7L353.9 191.1L332.1 197.3L310.9 205.1L290.3 214.6L270.6 225.6L251.8 238.2L234 252.2L217.4 267.6L202 284.2L188 302L175.4 320.8L164.4 340.6L154.9 361.1L147 382.4L140.9 404.1L136.5 426.3L133.8 448.8L132.9 471.4M708.4 471.4L707.5 448.9L704.9 426.5L700.5 404.4L694.3 382.7L686.5 361.5L677.1 341.1L666.1 321.4L653.5 302.6L639.6 284.9L624.3 268.4L607.7 253.1L590 239.1L571.3 226.6L551.6 215.6L531.1 206.1L510 198.3L488.3 192.2L466.1 187.8L443.8 185.1L421.2 184.3L398.7 185.1L376.3 187.8L354.2 192.2L332.5 198.3L311.3 206.1L290.8 215.6L271.2 226.6L252.4 239.1L234.7 253.1L218.2 268.4L202.9 284.9L188.9 302.6L176.4 321.4L165.3 341.1L155.9 361.5L148.1 382.7L142 404.4L137.6 426.5L134.9 448.9L134 471.4M707.4 471.4L706.6 449L703.9 426.6L699.5 404.6L693.4 383L685.7 361.9L676.2 341.5L665.3 321.9L652.8 303.2L638.9 285.5L623.6 269L607.1 253.8L589.5 239.8L570.8 227.4L551.2 216.4L530.7 207L509.7 199.2L488 193.1L466 188.7L443.7 186.1L421.2 185.2L398.8 186.1L376.4 188.7L354.4 193.1L332.8 199.2L311.7 207L291.3 216.4L271.7 227.4L253 239.8L235.3 253.8L218.8 269L203.6 285.5L189.6 303.2L177.2 321.9L166.2 341.5L156.8 361.9L149 383L142.9 404.6L138.5 426.6L135.9 449L135 471.4M661 472L660.3 453.2L658.1 434.5L654.4 416.1L649.3 398L642.8 380.4L634.9 363.3L625.7 346.9L615.3 331.3L603.6 316.5L590.9 302.7L577.1 290L562.3 278.3L546.7 267.9L530.3 258.7L513.2 250.8L495.6 244.3L477.5 239.2L459.1 235.5L440.4 233.3L421.6 232.6L402.8 233.3L384.1 235.5L365.7 239.2L347.6 244.3L330 250.8L312.9 258.7L296.5 267.9L280.9 278.3L266.1 290L252.3 302.7L239.6 316.5L227.9 331.3L217.5 346.9L208.3 363.3L200.4 380.4L193.9 398L188.8 416.1L185.1 434.5L182.9 453.2L182.2 472M659.6 472L658.9 453.3L656.7 434.8L653 416.4L648 398.5L641.5 380.9L633.7 363.9L624.5 347.6L614.1 332.1L602.6 317.4L589.9 303.7L576.2 291L561.5 279.5L546 269.1L529.7 259.9L512.7 252.1L495.1 245.6L477.2 240.6L458.8 236.9L440.3 234.7L421.6 234L402.9 234.7L384.4 236.9L366 240.6L348.1 245.6L330.5 252.1L313.5 259.9L297.2 269.1L281.7 279.5L267 291L253.3 303.7L240.6 317.4L229.1 332.1L218.7 347.6L209.5 363.9L201.7 380.9L195.2 398.5L190.2 416.4L186.5 434.8L184.3 453.3L183.6 472M657.9 472L657.1 453.5L655 435L651.3 416.8L646.3 399L639.9 381.6L632.1 364.7L623 348.6L612.7 333.1L601.3 318.6L588.7 304.9L575 292.3L560.5 280.9L545 270.6L528.9 261.5L512 253.7L494.6 247.3L476.8 242.3L458.6 238.6L440.1 236.5L421.6 235.7L403.1 236.5L384.6 238.6L366.4 242.3L348.6 247.3L331.2 253.7L314.3 261.5L298.2 270.6L282.7 280.9L268.2 292.3L254.5 304.9L241.9 318.6L230.5 333.1L220.2 348.6L211.1 364.7L203.3 381.6L196.9 399L191.9 416.8L188.2 435L186.1 453.5L185.3 472M655.1 472L654.3 453.7L652.2 435.5L648.6 417.5L643.6 399.9L637.3 382.7L629.6 366L620.7 350L610.5 334.8L599.1 320.4L586.7 306.9L573.2 294.5L558.8 283.1L543.6 272.9L527.6 264L510.9 256.3L493.7 250L476.1 245L458.1 241.4L439.9 239.3L421.6 238.5L403.3 239.3L385.1 241.4L367.1 245L349.5 250L332.3 256.3L315.6 264L299.6 272.9L284.4 283.1L270 294.5L256.5 306.9L244.1 320.4L232.7 334.8L222.5 350L213.6 366L205.9 382.7L199.6 399.9L194.6 417.5L191 435.5L188.9 453.7L188.1 472M652.6 472L651.9 453.9L649.8 435.9L646.2 418.1L641.3 400.6L635 383.6L627.4 367.1L618.6 351.3L608.5 336.2L597.3 322L585 308.6L571.6 296.3L557.4 285.1L542.3 275L526.5 266.2L510 258.6L493 252.3L475.5 247.4L457.7 243.8L439.7 241.7L421.6 241L403.5 241.7L385.5 243.8L367.7 247.4L350.2 252.3L333.2 258.6L316.7 266.2L300.9 275L285.8 285.1L271.6 296.3L258.2 308.6L245.9 322L234.7 336.2L224.6 351.3L215.8 367.1L208.2 383.6L201.9 400.6L197 418.1L193.4 435.9L191.3 453.9L190.6 472M650.9 472L650.2 454L648.1 436.1L644.5 418.5L639.7 401.1L633.4 384.3L625.9 367.9L617.1 352.2L607.1 337.2L595.9 323.1L583.7 309.9L570.5 297.7L556.4 286.5L541.4 276.5L525.7 267.7L509.3 260.2L492.5 253.9L475.1 249.1L457.5 245.5L439.6 243.4L421.6 242.7L403.6 243.4L385.7 245.5L368.1 249.1L350.7 253.9L333.9 260.2L317.5 267.7L301.8 276.5L286.8 286.5L272.7 297.7L259.5 309.9L247.3 323.1L236.1 337.2L226.1 352.2L217.3 367.9L209.8 384.3L203.5 401.1L198.7 418.5L195.1 436.1L193 454L192.3 472M649.1 472L648.4 454.1L646.3 436.4L642.8 418.9L638 401.7L631.8 384.9L624.3 368.7L615.6 353.1L605.7 338.3L594.6 324.2L582.5 311.1L569.4 299L555.3 287.9L540.5 278L524.9 269.3L508.7 261.8L491.9 255.6L474.7 250.8L457.2 247.3L439.5 245.2L421.6 244.5L403.7 245.2L386 247.3L368.5 250.8L351.3 255.6L334.5 261.8L318.3 269.3L302.7 278L287.9 287.9L273.8 299L260.7 311.1L248.6 324.2L237.5 338.3L227.6 353.1L218.9 368.7L211.4 384.9L205.2 401.7L200.4 418.9L196.9 436.4L194.8 454.1L194.1 472M647 472L646.3 454.3L644.3 436.7L640.8 419.4L636 402.3L629.9 385.7L622.5 369.7L613.8 354.2L604 339.5L593 325.6L581 312.6L568 300.6L554.1 289.6L539.4 279.8L523.9 271.1L507.9 263.7L491.3 257.6L474.2 252.8L456.9 249.3L439.3 247.3L421.6 246.6L403.9 247.3L386.3 249.3L369 252.8L351.9 257.6L335.3 263.7L319.3 271.1L303.8 279.8L289.1 289.6L275.2 300.6L262.2 312.6L250.2 325.6L239.2 339.5L229.4 354.2L220.7 369.7L213.3 385.7L207.2 402.3L202.4 419.4L198.9 436.7L196.9 454.3L196.2 472M644.6 472L643.9 454.5L641.9 437.1L638.4 419.9L633.7 403.1L627.6 386.7L620.3 370.8L611.7 355.5L602 340.9L591.2 327.2L579.3 314.3L566.4 302.4L552.7 291.6L538.1 281.9L522.8 273.3L506.9 266L490.5 259.9L473.7 255.2L456.5 251.7L439.1 249.7L421.6 249L404.1 249.7L386.7 251.7L369.5 255.2L352.7 259.9L336.3 266L320.4 273.3L305.1 281.9L290.5 291.6L276.8 302.4L263.9 314.3L252 327.2L241.2 340.9L231.5 355.5L222.9 370.8L215.6 386.7L209.5 403.1L204.8 419.9L201.3 437.1L199.3 454.5L198.6 472M641.8 472L641.1 454.7L639.1 437.6L635.7 420.6L631 404L625 387.7L617.8 372L609.4 356.9L599.7 342.6L589 329L577.3 316.3L564.6 304.6L551 293.9L536.7 284.2L521.6 275.8L505.9 268.6L489.6 262.6L473 257.9L456 254.5L438.9 252.5L421.6 251.8L404.3 252.5L387.2 254.5L370.2 257.9L353.6 262.6L337.3 268.6L321.6 275.8L306.5 284.2L292.2 293.9L278.6 304.6L265.9 316.3L254.2 329L243.5 342.6L233.8 356.9L225.4 372L218.2 387.7L212.2 404L207.5 420.6L204.1 437.6L202.1 454.7L201.4 472M639 472L638.3 454.9L636.3 438L633 421.2L628.4 404.8L622.5 388.8L615.3 373.3L607 358.4L597.5 344.2L586.9 330.8L575.3 318.3L562.8 306.7L549.4 296.1L535.2 286.6L520.3 278.3L504.8 271.1L488.8 265.2L472.4 260.6L455.6 257.3L438.7 255.3L421.6 254.6L404.5 255.3L387.6 257.3L370.8 260.6L354.4 265.2L338.4 271.1L322.9 278.3L308 286.6L293.8 296.1L280.4 306.7L267.9 318.3L256.3 330.8L245.7 344.2L236.2 358.4L227.9 373.3L220.7 388.8L214.8 404.8L210.2 421.2L206.9 438L204.9 454.9L204.2 472M636.6 472L635.9 455.1L633.9 438.4L630.6 421.8L626 405.6L620.2 389.7L613.1 374.4L604.9 359.7L595.5 345.6L585.1 332.4L573.6 320L561.2 308.5L548 298.1L533.9 288.7L519.2 280.5L503.9 273.4L488 267.6L471.8 263L455.2 259.7L438.5 257.7L421.6 257L404.7 257.7L388 259.7L371.4 263L355.2 267.6L339.3 273.4L324 280.5L309.3 288.7L295.2 298.1L282 308.5L269.6 320L258.1 332.4L247.7 345.6L238.3 359.7L230.1 374.4L223 389.7L217.2 405.6L212.6 421.8L209.3 438.4L207.3 455.1L206.6 472M634.5 472L633.8 455.3L631.9 438.7L628.6 422.3L624.1 406.2L618.3 390.5L611.3 375.4L603.1 360.8L593.8 346.9L583.5 333.7L572.1 321.5L559.9 310.1L546.7 299.8L532.8 290.5L518.2 282.3L503.1 275.3L487.4 269.5L471.3 265L454.9 261.7L438.3 259.8L421.6 259.1L404.9 259.8L388.3 261.7L371.9 265L355.8 269.5L340.1 275.3L325 282.3L310.4 290.5L296.5 299.8L283.3 310.1L271.1 321.5L259.7 333.7L249.4 346.9L240.1 360.8L231.9 375.4L224.9 390.5L219.1 406.2L214.6 422.3L211.3 438.7L209.4 455.3L208.7 472M632.7 472L632.1 455.4L630.1 439L626.9 422.7L622.4 406.8L616.7 391.2L609.7 376.1L601.6 361.7L592.4 347.9L582.1 334.9L570.9 322.7L558.7 311.5L545.7 301.2L531.9 292L517.5 283.9L502.4 276.9L486.8 271.2L470.9 266.7L454.6 263.5L438.2 261.5L421.6 260.9L405 261.5L388.6 263.5L372.3 266.7L356.4 271.2L340.8 276.9L325.7 283.9L311.3 292L297.5 301.2L284.5 311.5L272.3 322.7L261.1 334.9L250.8 347.9L241.6 361.7L233.5 376.1L226.5 391.2L220.8 406.8L216.3 422.7L213.1 439L211.1 455.4L210.5 472M631.3 472L630.7 455.5L628.8 439.2L625.5 423L621.1 407.2L615.4 391.7L608.5 376.8L600.4 362.4L591.3 348.7L581.1 335.8L569.9 323.7L557.8 312.5L544.9 302.3L531.2 293.2L516.8 285.1L501.9 278.2L486.4 272.5L470.6 268.1L454.4 264.8L438.1 262.9L421.6 262.3L405.1 262.9L388.8 264.8L372.6 268.1L356.8 272.5L341.3 278.2L326.4 285.1L312 293.2L298.3 302.3L285.4 312.5L273.3 323.7L262.1 335.8L251.9 348.7L242.8 362.4L234.7 376.8L227.8 391.7L222.1 407.2L217.7 423L214.4 439.2L212.5 455.5L211.9 472M629.9 472L629.3 455.7L627.4 439.4L624.2 423.4L619.7 407.6L614.1 392.3L607.2 377.4L599.2 363.1L590.1 349.5L580 336.7L568.9 324.7L556.9 313.6L544.1 303.5L530.5 294.4L516.2 286.4L501.3 279.5L486 273.9L470.2 269.4L454.2 266.2L437.9 264.3L421.6 263.7L405.3 264.3L389 266.2L373 269.4L357.2 273.9L341.9 279.5L327 286.4L312.7 294.4L299.1 303.5L286.3 313.6L274.3 324.7L263.2 336.7L253.1 349.5L244 363.1L236 377.4L229.1 392.3L223.5 407.6L219 423.4L215.8 439.4L213.9 455.7L213.3 472M628.9 472L628.3 455.7L626.3 439.6L623.2 423.6L618.7 407.9L613.1 392.7L606.3 377.9L598.3 363.7L589.3 350.2L579.2 337.4L568.2 325.4L556.2 314.4L543.4 304.3L529.9 295.3L515.7 287.3L500.9 280.5L485.7 274.9L470 270.4L454 267.3L437.9 265.3L421.6 264.7L405.3 265.3L389.2 267.3L373.2 270.4L357.5 274.9L342.3 280.5L327.5 287.3L313.3 295.3L299.8 304.3L287 314.4L275 325.4L264 337.4L253.9 350.2L244.9 363.7L236.9 377.9L230.1 392.7L224.5 407.9L220 423.6L216.9 439.6L214.9 455.7L214.3 472M627.8 472L627.2 455.8L625.3 439.7L622.1 423.9L617.8 408.3L612.1 393.1L605.4 378.4L597.5 364.2L588.5 350.8L578.4 338.1L567.4 326.2L555.5 315.2L542.8 305.1L529.4 296.1L515.2 288.2L500.5 281.5L485.3 275.8L469.7 271.5L453.9 268.3L437.8 266.4L421.6 265.8L405.4 266.4L389.3 268.3L373.5 271.5L357.9 275.8L342.7 281.5L328 288.2L313.8 296.1L300.4 305.1L287.7 315.2L275.8 326.2L264.8 338.1L254.7 350.8L245.7 364.2L237.8 378.4L231.1 393.1L225.4 408.3L221.1 423.9L217.9 439.7L216 455.8L215.4 472M627 472L626.3 455.9L624.4 439.9L621.3 424.1L616.9 408.5L611.3 393.4L604.6 378.8L596.7 364.7L587.7 351.3L577.8 338.6L566.8 326.8L555 315.8L542.3 305.9L528.9 296.9L514.8 289L500.2 282.3L485.1 276.7L469.5 272.3L453.7 269.2L437.7 267.3L421.6 266.6L405.5 267.3L389.5 269.2L373.7 272.3L358.1 276.7L343 282.3L328.4 289L314.3 296.9L300.9 305.9L288.2 315.8L276.4 326.8L265.4 338.6L255.5 351.3L246.5 364.7L238.6 378.8L231.9 393.4L226.3 408.5L221.9 424.1L218.8 439.9L216.9 455.9L216.2 472M690.4 472L689.6 450.9L687.1 430L683 409.2L677.2 388.9L669.9 369.1L661.1 350L650.8 331.6L639.1 314L626 297.4L611.7 281.9L596.2 267.6L579.6 254.5L562 242.8L543.6 232.5L524.5 223.7L504.7 216.4L484.4 210.6L463.6 206.5L442.7 204L421.6 203.2L400.5 204L379.6 206.5L358.8 210.6L338.5 216.4L318.7 223.7L299.6 232.5L281.2 242.8L263.6 254.5L247 267.6L231.5 281.9L217.2 297.4L204.1 314L192.4 331.6L182.1 350L173.3 369.1L166 388.9L160.2 409.2L156.1 430L153.6 450.9L152.8 472M687.2 472L686.4 451.2L684 430.4L679.9 410L674.2 389.9L667 370.3L658.3 351.4L648.1 333.2L636.5 315.9L623.6 299.5L609.4 284.2L594.1 270L577.7 257.1L560.4 245.5L542.2 235.3L523.3 226.6L503.7 219.4L483.6 213.7L463.2 209.6L442.4 207.2L421.6 206.4L400.8 207.2L380 209.6L359.6 213.7L339.5 219.4L319.9 226.6L301 235.3L282.8 245.5L265.5 257.1L249.1 270L233.8 284.2L219.6 299.5L206.7 315.9L195.1 333.2L184.9 351.4L176.2 370.3L169 389.9L163.3 410L159.2 430.4L156.8 451.2L156 472M684.1 472L683.3 451.4L680.9 430.9L676.8 410.7L671.3 390.9L664.1 371.5L655.5 352.8L645.4 334.8L634 317.7L621.2 301.5L607.2 286.4L592.1 272.4L575.9 259.6L558.8 248.2L540.8 238.1L522.1 229.5L502.7 222.3L482.9 216.8L462.7 212.7L442.2 210.3L421.6 209.5L401 210.3L380.5 212.7L360.3 216.8L340.5 222.3L321.1 229.5L302.4 238.1L284.4 248.2L267.3 259.6L251.1 272.4L236 286.4L222 301.5L209.2 317.7L197.8 334.8L187.7 352.8L179.1 371.5L171.9 390.9L166.4 410.7L162.3 430.9L159.9 451.4L159.1 472M803.6 477.6L802.4 447.6L798.9 417.9L793.1 388.5L784.9 359.6L774.5 331.5L762 304.3L747.3 278.1L730.7 253.2L712.1 229.6L691.8 207.6L669.8 187.3L646.2 168.7L621.3 152.1L595.1 137.4L567.9 124.9L539.8 114.5L510.9 106.3L481.5 100.5L451.8 97L421.8 95.8L391.8 97L362.1 100.5L332.7 106.3L303.8 114.5L275.7 124.9L248.5 137.4L222.3 152.1L197.4 168.7L173.8 187.3L151.8 207.6L131.5 229.6L112.9 253.2L96.3 278.1L81.6 304.3L69.1 331.5L58.7 359.6L50.5 388.5L44.7 417.9L41.2 447.6L40 477.6M774.2 477.6L773.1 450L769.9 422.5L764.5 395.3L757 368.7L747.4 342.7L735.8 317.6L722.3 293.5L706.9 270.5L689.8 248.7L671 228.4L650.7 209.6L628.9 192.5L605.9 177.1L581.8 163.6L556.7 152L530.7 142.4L504.1 134.9L476.9 129.5L449.4 126.3L421.8 125.2L394.2 126.3L366.7 129.5L339.5 134.9L312.9 142.4L286.9 152L261.8 163.6L237.7 177.1L214.7 192.5L192.9 209.6L172.6 228.4L153.8 248.7L136.7 270.5L121.3 293.5L107.8 317.6L96.2 342.7L86.6 368.7L79.1 395.3L73.7 422.5L70.5 450L69.4 477.6" stroke="#fff" stroke-opacity=".5" stroke-width=".45" fill="none"/>
<path d="M625.5 456L567.7 460.5M623.6 440L566.4 449.1M620.4 424.3L564.1 437.8M616.1 408.8L561 426.7M610.5 393.7L557 415.9M603.8 379.2L552.2 405.4M596 365.1L546.6 395.4M587 351.8L540.2 385.8M577.1 339.2L533.1 376.8M566.2 327.4L525.3 368.3M554.4 316.5L516.8 360.5M541.8 306.6L507.8 353.4M528.5 297.6L498.2 347M514.4 289.8L488.2 341.4M499.9 283.1L477.7 336.6M484.8 277.5L466.9 332.6M469.3 273.2L455.8 329.5M453.6 270L444.5 327.2M437.6 268.1L433.1 325.9M421.6 267.5L421.6 325.4M405.6 268.1L410.1 325.9M389.6 270L398.7 327.2M373.9 273.2L387.4 329.5M358.4 277.5L376.3 332.6M343.3 283.1L365.5 336.6M328.8 289.8L355 341.4M314.7 297.6L345 347M301.4 306.6L335.4 353.4M288.8 316.5L326.4 360.5M277 327.4L317.9 368.3M266.1 339.2L310.1 376.8M256.2 351.8L303 385.8M247.2 365.1L296.6 395.4M239.4 379.2L291 405.4M232.7 393.7L286.2 415.9M227.1 408.8L282.2 426.7M222.8 424.3L279.1 437.8M219.6 440L276.8 449.1M217.7 456L275.5 460.5" stroke="#e24e4e" stroke-width=".5" fill="none"/>
<path d="M567.7 460.5L561.2 461M566.4 449.1L559.9 450.1M564.1 437.8L557.7 439.3M561 426.7L554.7 428.7M557 415.9L550.9 418.4M552.2 405.4L546.3 408.4M546.6 395.4L541 398.9M540.2 385.8L534.9 389.7M533.1 376.8L528.1 381.1M525.3 368.3L520.6 373M516.8 360.5L512.5 365.5M507.8 353.4L503.9 358.7M498.2 347L494.7 352.6M488.2 341.4L485.2 347.3M477.7 336.6L475.2 342.7M466.9 332.6L464.9 338.9M455.8 329.5L454.3 335.9M444.5 327.2L443.5 333.7M433.1 325.9L432.6 332.4M421.6 325.4L421.6 332M410.1 325.9L410.6 332.4M398.7 327.2L399.7 333.7M387.4 329.5L388.9 335.9M376.3 332.6L378.3 338.9M365.5 336.6L368 342.7M355 341.4L358 347.3M345 347L348.5 352.6M335.4 353.4L339.3 358.7M326.4 360.5L330.7 365.5M317.9 368.3L322.6 373M310.1 376.8L315.1 381.1M303 385.8L308.3 389.7M296.6 395.4L302.2 398.9M291 405.4L296.9 408.4M286.2 415.9L292.3 418.4M282.2 426.7L288.5 428.7M279.1 437.8L285.5 439.3M276.8 449.1L283.3 450.1M275.5 460.5L282 461" stroke="#fff" stroke-opacity=".3" stroke-width=".4" fill="none"/>
<path d="M626.1 472L625.5 456L623.6 440L620.4 424.3L616.1 408.8L610.5 393.7L603.8 379.2L596 365.1L587 351.8L577.1 339.2L566.2 327.4L554.4 316.5L541.8 306.6L528.5 297.6L514.4 289.8L499.9 283.1L484.8 277.5L469.3 273.2L453.6 270L437.6 268.1L421.6 267.5L405.6 268.1L389.6 270L373.9 273.2L358.4 277.5L343.3 283.1L328.8 289.8L314.7 297.6L301.4 306.6L288.8 316.5L277 327.4L266.1 339.2L256.2 351.8L247.2 365.1L239.4 379.2L232.7 393.7L227.1 408.8L222.8 424.3L219.6 440L217.7 456L217.1 472" stroke="#5ad84a" stroke-opacity=".6" stroke-width=".55" fill="none"/>
<path d="M796.8 478.4L795.6 449L792.2 419.7L786.4 390.9L778.4 362.5L768.3 334.9L755.9 308.2L741.5 282.5L725.2 258L707 234.9L687 213.2L665.3 193.2L642.2 175L617.7 158.7L592 144.3L565.3 131.9L537.7 121.8L509.3 113.8L480.5 108L451.2 104.6L421.8 103.4L392.4 104.6L363.1 108L334.3 113.8L305.9 121.8L278.3 131.9L251.6 144.3L225.9 158.7L201.4 175L178.3 193.2L156.6 213.2L136.6 234.9L118.4 258L102.1 282.5L87.7 308.2L75.3 334.9L65.2 362.5L57.2 390.9L51.4 419.7L48 449L46.8 478.4M780.2 476.9L779.1 448.8L775.8 420.8L770.3 393.2L762.7 366.1L752.9 339.7L741.1 314.2L727.4 289.6L711.8 266.2L694.3 244.1L675.2 223.5L654.6 204.4L632.5 186.9L609.1 171.3L584.5 157.6L559 145.8L532.6 136L505.5 128.4L477.9 122.9L449.9 119.6L421.8 118.5L393.7 119.6L365.7 122.9L338.1 128.4L311 136L284.6 145.8L259.1 157.6L234.5 171.3L211.1 186.9L189 204.4L168.4 223.5L149.3 244.1L131.8 266.2L116.2 289.6L102.5 314.2L90.7 339.7L80.9 366.1L73.3 393.2L67.8 420.8L64.5 448.8L63.4 476.9M758.3 470.5L757.3 444.1L754.2 417.8L749 391.9L741.8 366.5L732.7 341.7L721.6 317.6L708.7 294.6L694 272.6L677.6 251.8L659.7 232.4L640.3 214.5L619.5 198.1L597.5 183.4L574.5 170.5L550.4 159.4L525.6 150.3L500.2 143.1L474.3 137.9L448 134.8L421.6 133.8L395.2 134.8L368.9 137.9L343 143.1L317.6 150.3L292.8 159.4L268.7 170.5L245.7 183.4L223.7 198.1L202.9 214.5L183.5 232.4L165.6 251.8L149.2 272.6L134.5 294.6L121.6 317.6L110.5 341.7L101.4 366.5L94.2 391.9L89 417.8L85.9 444.1L84.9 470.5M706.5 471.4L705.6 449L703 426.8L698.6 404.8L692.5 383.2L684.8 362.2L675.4 341.9L664.5 322.3L652 303.7L638.1 286.1L622.9 269.7L606.5 254.5L588.9 240.6L570.3 228.1L550.7 217.2L530.4 207.8L509.4 200.1L487.8 194L465.8 189.6L443.6 187L421.2 186.1L398.8 187L376.6 189.6L354.6 194L333 200.1L312 207.8L291.7 217.2L272.1 228.1L253.5 240.6L235.9 254.5L219.5 269.7L204.3 286.1L190.4 303.7L177.9 322.3L167 341.9L157.6 362.2L149.9 383.2L143.8 404.8L139.4 426.8L136.8 449L135.9 471.4M677.8 472L677 451.9L674.6 431.9L670.7 412.2L665.3 392.8L658.3 374L649.9 355.7L640 338.1L628.9 321.4L616.4 305.6L602.8 290.8L588 277.2L572.2 264.7L555.5 253.6L537.9 243.7L519.6 235.3L500.8 228.3L481.4 222.9L461.7 219L441.7 216.6L421.6 215.8L401.5 216.6L381.5 219L361.8 222.9L342.4 228.3L323.6 235.3L305.3 243.7L287.7 253.6L271 264.7L255.2 277.2L240.4 290.8L226.8 305.6L214.3 321.4L203.2 338.1L193.3 355.7L184.9 374L177.9 392.8L172.5 412.2L168.6 431.9L166.2 451.9L165.4 472M568.2 472L567.7 460.5L566.4 449.1L564.1 437.8L561 426.7L557 415.9L552.2 405.4L546.6 395.4L540.2 385.8L533.1 376.8L525.3 368.3L516.8 360.5L507.8 353.4L498.2 347L488.2 341.4L477.7 336.6L466.9 332.6L455.8 329.5L444.5 327.2L433.1 325.9L421.6 325.4L410.1 325.9L398.7 327.2L387.4 329.5L376.3 332.6L365.5 336.6L355 341.4L345 347L335.4 353.4L326.4 360.5L317.9 368.3L310.1 376.8L303 385.8L296.6 395.4L291 405.4L286.2 415.9L282.2 426.7L279.1 437.8L276.8 449.1L275.5 460.5L275 472" stroke="#38e438" stroke-width=".9" fill="none"/>
<path d="M690.4 472L689.6 450.9L687.1 430L683 409.2L677.2 388.9L669.9 369.1L661.1 350L650.8 331.6L639.1 314L626 297.4L611.7 281.9L596.2 267.6L579.6 254.5L562 242.8L543.6 232.5L524.5 223.7L504.7 216.4L484.4 210.6L463.6 206.5L442.7 204L421.6 203.2L400.5 204L379.6 206.5L358.8 210.6L338.5 216.4L318.7 223.7L299.6 232.5L281.2 242.8L263.6 254.5L247 267.6L231.5 281.9L217.2 297.4L204.1 314L192.4 331.6L182.1 350L173.3 369.1L166 388.9L160.2 409.2L156.1 430L153.6 450.9L152.8 472" stroke="#35e035" stroke-opacity=".45" stroke-width=".5" stroke-dasharray="2 1.5" fill="none"/>
</g>
<path d="M35 471.3L46.7 472.4L63.5 471.2L73.3 471.4L84.3 466.5L98.7 466.8L103 469.6L112 470.6L124 470.6L133 469.6L136.1 468.1L152.8 468.3L156 470L162 470L165.4 469.2L181.5 469.4L185 472.3L192 473.5L206 473.6L215 472.6L217.2 471.7L275 471.8L280.4 471.8L285.5 465.2M557.6 465.5L562.7 472.1L568.1 472.1L625.9 472L628.1 472.9L637.1 473.9L651.1 473.8L658.1 472.6L661.6 469.7L677.7 469.5L681.1 470.3L687.1 470.3L690.3 468.6L707 468.4L710.1 469.9L719.1 470.9L731.1 470.9L740.1 469.9L744.4 467.1L758.8 466.8L769.8 471.7L779.6 471.5L796.4 472.7L808.1 471.6" stroke="#35e035" stroke-width=".7" fill="none"/>
<path d="M216.8 472V517M626.6 472V517" stroke="#857a3a" stroke-width=".6" fill="none"/>
<path d="M217 204V220M291 164.3H321.5M522 164.3H552M626.3 204V238" stroke="#d8d080" stroke-opacity=".4" stroke-width=".4" fill="none"/>
<path d="M421.5 187V370" stroke="#c9c27a" stroke-opacity=".45" stroke-width=".4" fill="none"/>
<path d="M421.5 369.5H461" stroke="#a02c2c" stroke-width=".45" fill="none"/><path d="M461 369.5H519" stroke="#8a8458" stroke-width=".4" fill="none"/>
<circle cx="421.5" cy="369.5" r=".9" fill="#e8a020"/><circle cx="461.3" cy="369" r=".7" fill="#d03030"/>
<path d="M7.6 510.4V502.3" stroke="#3348e0" stroke-width=".8"/><path d="M7.6 510.4H15.2" stroke="#2fb02f" stroke-width=".8"/><path d="M7.9 510.1l-1.5 1.3" stroke="#d82c2c" stroke-width="1.1"/>
<rect x="807.3" y="91.2" width="8.5" height="8.2" fill="#8e8e8e"/><rect x="808.8" y="92.7" width="5.5" height="5.2" fill="#70767a"/><path d="M802 100H806.3M817 100H821.3" stroke="#777" stroke-width=".6"/>
</svg>
<span class="t" style="left:1.4px;top:3.1px;color:#fff;font-size:4.6px">[+] [Perspective ] [Standard ] [Edged Faces ]</span>
</div></div>
<div id="cmd" class="a">
<div class="a" style="left:0.2px;top:0.0px;width:0.6px;height:438.0px;background:#3e3e3e;"></div>
<div class="a" style="left:1.0px;top:1.5px;width:195.0px;height:1.1px;background:repeating-linear-gradient(90deg,#5a5a5a 0 .6px,#3c3c3c .6px 1.2px);"></div>
<div class="a" style="left:0.8px;top:4.3px;width:195.2px;height:10.5px;background:#3c3c3c;"></div>
<div class="a" style="left:13.2px;top:4.3px;width:12.1px;height:10.5px;background:#474747;"></div>
<div class="a" style="left:2.0px;top:18.0px;width:87.0px;height:7.6px;background:#656565;"></div>
<span class="t" style="left:3.5px;top:20.1px;color:#f0f0f0;font-size:4.40px;">church_trim</span>
<div class="a" style="left:91.2px;top:18.0px;width:6.8px;height:7.6px;background:#000;"></div>
<div class="a" style="left:2.0px;top:30.0px;width:96.0px;height:6.7px;background:#656565;"></div>
<span class="t" style="left:3.2px;top:31.6px;color:#f0f0f0;font-size:4.40px;">Modifier List</span>
<span class="t" style="left:92.8px;top:32.0px;color:#eee;font-size:3px">&#9660;</span>
<div class="a" style="left:2.2px;top:42.9px;width:46.6px;height:7.5px;background:#656565;border-radius:.7px;"></div>
<span class="t" style="left:2.2px;top:44.9px;width:46.6px;text-align:center;color:#e0e0e0;font-size:4.40px;">Edit Poly</span>
<div class="a" style="left:50.4px;top:42.9px;width:47.6px;height:7.5px;background:#656565;border-radius:.7px;"></div>
<span class="t" style="left:50.4px;top:44.9px;width:47.6px;text-align:center;color:#e0e0e0;font-size:4.40px;">Symmetry</span>
<div class="a" style="left:2.2px;top:52.2px;width:46.6px;height:7.2px;background:#656565;border-radius:.7px;"></div>
<span class="t" style="left:2.2px;top:54.0px;width:46.6px;text-align:center;color:#e0e0e0;font-size:4.40px;">TurboSmooth</span>
<div class="a" style="left:50.4px;top:52.2px;width:47.6px;height:7.2px;background:#656565;border-radius:.7px;"></div>
<span class="t" style="left:50.4px;top:54.0px;width:47.6px;text-align:center;color:#e0e0e0;font-size:4.40px;">Unwrap UVW</span>
<div class="a" style="left:2.2px;top:61.6px;width:46.6px;height:7.2px;background:#656565;border-radius:.7px;"></div>
<span class="t" style="left:2.2px;top:63.4px;width:46.6px;text-align:center;color:#e0e0e0;font-size:4.40px;">Shell</span>
<div class="a" style="left:50.4px;top:61.6px;width:47.6px;height:7.2px;background:#656565;border-radius:.7px;"></div>
<span class="t" style="left:50.4px;top:63.4px;width:47.6px;text-align:center;color:#e0e0e0;font-size:4.40px;">Bend</span>
<div class="a" style="left:1.6px;top:71.4px;width:96.4px;height:43.9px;background:#444;border:.6px solid #cfcfcf;"></div>
<div class="a" style="left:17.0px;top:71.7px;width:80.8px;height:6.9px;background:#4a4e58;border:.5px solid #8fa6cc;"></div>
<span class="t" style="left:18.3px;top:73.3px;color:#f2f2f2;font-size:4.40px;">Unwrap UVW</span>
<span class="t" style="left:10.2px;top:80.3px;color:#e8e8e8;font-size:4.40px;">Editable Poly</span>
<span class="t" style="left:12.3px;top:74.1px;color:#eee;font-size:2.4px">&#9654;</span>
<span class="t" style="left:4.5px;top:81.2px;color:#eee;font-size:2.4px">&#9654;</span>
<div class="a" style="left:3.0px;top:132.4px;width:41.0px;height:0.6px;background:#5e5e5e;"></div>
<div class="a" style="left:56.0px;top:132.4px;width:38.5px;height:0.6px;background:#5e5e5e;"></div>
<div class="a" style="left:46.5px;top:131.8px;width:7.0px;height:1.6px;background:repeating-linear-gradient(90deg,#6a6a6a 0 .6px,transparent .6px 1.2px);"></div>
<div class="a" style="left:2.2px;top:135.7px;width:92.6px;height:120.6px;background:#525252;"></div>
<span class="t" style="left:4.4px;top:138.3px;color:#e8e8e8;font-size:2.6px">&#9660;</span>
<span class="t" style="left:8.6px;top:137.3px;color:#f4f4f4;font-size:4.60px;font-weight:bold;">Selection</span>
<div class="a" style="left:89.3px;top:137.9px;width:1.7px;height:3.0px;background:repeating-linear-gradient(#777 0 .5px,transparent .5px 1px);"></div>
<div class="a" style="left:2.2px;top:259.0px;width:92.6px;height:34.8px;background:#525252;"></div>
<span class="t" style="left:4.4px;top:261.6px;color:#e8e8e8;font-size:2.6px">&#9660;</span>
<span class="t" style="left:8.6px;top:260.7px;color:#f4f4f4;font-size:4.60px;font-weight:bold;">Material IDs</span>
<div class="a" style="left:89.3px;top:261.2px;width:1.7px;height:3.0px;background:repeating-linear-gradient(#777 0 .5px,transparent .5px 1px);"></div>
<div class="a" style="left:2.2px;top:296.2px;width:92.6px;height:56.4px;background:#525252;"></div>
<span class="t" style="left:4.4px;top:298.8px;color:#e8e8e8;font-size:2.6px">&#9660;</span>
<span class="t" style="left:8.6px;top:297.9px;color:#f4f4f4;font-size:4.60px;font-weight:bold;">Edit UVs</span>
<div class="a" style="left:89.3px;top:298.4px;width:1.7px;height:3.0px;background:repeating-linear-gradient(#777 0 .5px,transparent .5px 1px);"></div>
<div class="a" style="left:2.2px;top:355.0px;width:92.6px;height:61.6px;background:#525252;"></div>
<span class="t" style="left:4.4px;top:357.6px;color:#e8e8e8;font-size:2.6px">&#9660;</span>
<span class="t" style="left:8.6px;top:356.7px;color:#f4f4f4;font-size:4.60px;font-weight:bold;">Channel</span>
<div class="a" style="left:89.3px;top:357.2px;width:1.7px;height:3.0px;background:repeating-linear-gradient(#777 0 .5px,transparent .5px 1px);"></div>
<div class="a" style="left:97.7px;top:15.0px;width:0.8px;height:422.0px;background:#3b3b3b;"></div>
<div class="a" style="left:193.6px;top:15.0px;width:0.7px;height:422.0px;background:#3b3b3b;"></div>
<div class="a" style="left:99.6px;top:16.0px;width:93.8px;height:49.8px;background:#525252;"></div>
<span class="t" style="left:101.8px;top:18.6px;color:#e8e8e8;font-size:2.6px">&#9660;</span>
<span class="t" style="left:106.0px;top:17.6px;color:#f4f4f4;font-size:4.60px;font-weight:bold;">Peel</span>
<div class="a" style="left:187.9px;top:18.2px;width:1.7px;height:3.0px;background:repeating-linear-gradient(#777 0 .5px,transparent .5px 1px);"></div>
<div class="a" style="left:99.6px;top:67.6px;width:93.8px;height:65.6px;background:#525252;"></div>
<span class="t" style="left:101.8px;top:70.2px;color:#e8e8e8;font-size:2.6px">&#9660;</span>
<span class="t" style="left:106.0px;top:69.2px;color:#f4f4f4;font-size:4.60px;font-weight:bold;">Projection</span>
<div class="a" style="left:187.9px;top:69.8px;width:1.7px;height:3.0px;background:repeating-linear-gradient(#777 0 .5px,transparent .5px 1px);"></div>
<div class="a" style="left:99.6px;top:135.4px;width:93.8px;height:27.2px;background:#525252;"></div>
<span class="t" style="left:101.8px;top:138.0px;color:#e8e8e8;font-size:2.6px">&#9660;</span>
<span class="t" style="left:106.0px;top:137.0px;color:#f4f4f4;font-size:4.60px;font-weight:bold;">Wrap</span>
<div class="a" style="left:187.9px;top:137.6px;width:1.7px;height:3.0px;background:repeating-linear-gradient(#777 0 .5px,transparent .5px 1px);"></div>
<div class="a" style="left:99.6px;top:164.4px;width:93.8px;height:76.4px;background:#525252;"></div>
<span class="t" style="left:101.8px;top:167.0px;color:#e8e8e8;font-size:2.6px">&#9660;</span>
<span class="t" style="left:106.0px;top:166.0px;color:#f4f4f4;font-size:4.60px;font-weight:bold;">Configure</span>
<div class="a" style="left:187.9px;top:166.6px;width:1.7px;height:3.0px;background:repeating-linear-gradient(#777 0 .5px,transparent .5px 1px);"></div>
<div class="a" style="left:114.8px;top:42.5px;width:59.7px;height:19.0px;background:transparent;border:.5px solid #4b4b4b;border-radius:1px;"></div>
<span class="t" style="left:116.0px;top:40.2px;color:#e8e8e8;font-size:4.3px;background:#525252;padding:0 .5px">Seams:</span>
<div class="a" style="left:115.5px;top:97.2px;width:59.0px;height:31.3px;background:transparent;border:.5px solid #4b4b4b;border-radius:1px;"></div>
<span class="t" style="left:116.7px;top:94.9px;color:#e8e8e8;font-size:4.3px;background:#525252;padding:0 .5px">Align Options:</span>
<div class="a" style="left:117.5px;top:101.5px;width:54.7px;height:8.5px;background:#3f3f3f;"></div>
<div class="a" style="left:118.0px;top:114.0px;width:18.5px;height:9.3px;background:#5e5e5e;border-radius:.7px;"></div>
<span class="t" style="left:118.0px;top:116.9px;width:18.5px;text-align:center;color:#8a8a8a;font-size:4.40px;">Fit</span>
<div class="a" style="left:138.5px;top:114.0px;width:20.5px;height:9.3px;background:#5e5e5e;border-radius:.7px;"></div>
<span class="t" style="left:138.5px;top:116.9px;width:20.5px;text-align:center;color:#8a8a8a;font-size:4.40px;">Center</span>
<div class="a" style="left:160.5px;top:113.5px;width:10.5px;height:10.5px;background:#3f3f3f;"></div>
<div class="a" style="left:115.5px;top:178.5px;width:58.7px;height:34.1px;background:transparent;border:.5px solid #4b4b4b;border-radius:1px;"></div>
<span class="t" style="left:116.7px;top:176.2px;color:#e8e8e8;font-size:4.3px;background:#525252;padding:0 .5px">Display:</span>
<span class="t" style="left:123.5px;top:186.3px;color:#e4e4e4;font-size:4.15px;">Map Seams</span>
<span class="t" style="left:123.5px;top:195.3px;color:#e4e4e4;font-size:4.15px;">Peel Seams</span>
<span class="t" style="left:126.0px;top:204.3px;color:#e4e4e4;font-size:4.15px;">Thick</span>
<span class="t" style="left:151.5px;top:204.3px;color:#cfcfcf;font-size:4.15px;">Thin</span>
<span class="t" style="left:123.5px;top:217.8px;color:#e4e4e4;font-size:4.15px;">Prevent Reflattening</span>
<span class="t" style="left:123.5px;top:227.7px;color:#e4e4e4;font-size:4.15px;">Normalize Map</span>
<div class="a" style="left:117.8px;top:186.2px;width:3.6px;height:3.6px;background:#5f5f5f;"></div>
<span class="t" style="left:118.0px;top:185.8px;color:#fff;font-size:4.2px">&#10003;</span>
<div class="a" style="left:117.8px;top:195.2px;width:3.6px;height:3.6px;background:#5f5f5f;"></div>
<span class="t" style="left:118.0px;top:194.8px;color:#fff;font-size:4.2px">&#10003;</span>
<div class="a" style="left:117.8px;top:227.6px;width:3.6px;height:3.6px;background:#5f5f5f;"></div>
<span class="t" style="left:118.0px;top:227.2px;color:#fff;font-size:4.2px">&#10003;</span>
<div class="a" style="left:117.8px;top:217.7px;width:3.6px;height:3.6px;background:#646464;"></div>
<div class="a" style="left:118.5px;top:204.2px;width:3.9px;height:3.9px;border-radius:50%;background:#6a6a6a"></div>
<div class="a" style="left:119.3px;top:205.0px;width:2.3px;height:2.3px;border-radius:50%;background:#fff"></div>
<div class="a" style="left:144.5px;top:204.2px;width:3.9px;height:3.9px;border-radius:50%;background:#6a6a6a"></div>
<div class="a" style="left:17.5px;top:162.8px;width:62.5px;height:18.7px;background:transparent;border:.5px solid #4b4b4b;border-radius:1px;"></div>
<span class="t" style="left:18.7px;top:160.5px;color:#e8e8e8;font-size:4.3px;background:#525252;padding:0 .5px">Modify Selection:</span>
<div class="a" style="left:17.5px;top:186.5px;width:62.5px;height:63.0px;background:transparent;border:.5px solid #4b4b4b;border-radius:1px;"></div>
<span class="t" style="left:18.7px;top:184.2px;color:#e8e8e8;font-size:4.3px;background:#525252;padding:0 .5px">Select By:</span>
<div class="a" style="left:31.5px;top:190.5px;width:11.0px;height:10.5px;background:#4b7cc0;"></div>
<span class="t" style="left:32.2px;top:209.9px;color:#ddd;font-size:4.20px;">15,0</span>
<span class="t" style="left:63.3px;top:209.9px;color:#ddd;font-size:4.20px;">1</span>
<div class="a" style="left:31.8px;top:208.4px;width:14.7px;height:6.2px;background:#5e5e5e;"></div>
<div class="a" style="left:62.0px;top:208.4px;width:14.0px;height:6.2px;background:#5e5e5e;"></div>
<span class="t" style="left:32.6px;top:209.9px;color:#e2e2e2;font-size:4.20px;">15,0</span>
<span class="t" style="left:63.3px;top:209.9px;color:#e2e2e2;font-size:4.20px;">1</span>
<div class="a" style="left:31.5px;top:221.5px;width:10.0px;height:11.0px;background:#4d6e9c;"></div>
<span class="t" style="left:28.5px;top:240.5px;color:#e4e4e4;font-size:4.40px;">Threshold:</span>
<div class="a" style="left:52.5px;top:239.0px;width:22.5px;height:6.8px;background:#5e5e5e;"></div>
<span class="t" style="left:53.5px;top:240.6px;color:#e2e2e2;font-size:4.20px;">0,01</span>
<span class="t" style="left:36.8px;top:272.3px;color:#e4e4e4;font-size:4.15px;">Set ID:</span>
<div class="a" style="left:56.5px;top:270.8px;width:16.5px;height:6.4px;background:#5e5e5e;"></div>
<span class="t" style="left:57.6px;top:272.2px;color:#e2e2e2;font-size:4.20px;">5</span>
<div class="a" style="left:22.2px;top:281.2px;width:30.2px;height:7.6px;background:#656565;border-radius:.7px;"></div>
<span class="t" style="left:22.2px;top:283.2px;width:30.2px;text-align:center;color:#e0e0e0;font-size:4.40px;">Select ID</span>
<div class="a" style="left:56.5px;top:281.8px;width:16.5px;height:6.4px;background:#5e5e5e;"></div>
<span class="t" style="left:57.6px;top:283.2px;color:#e2e2e2;font-size:4.20px;">5</span>
<div class="a" style="left:20.2px;top:306.0px;width:55.6px;height:9.2px;background:#656565;border-radius:.7px;"></div>
<span class="t" style="left:20.2px;top:308.8px;width:55.6px;text-align:center;color:#e0e0e0;font-size:4.40px;">Open UV Editor ...</span>
<div class="a" style="left:20.8px;top:318.4px;width:55.4px;height:9.2px;background:#656565;border-radius:.7px;"></div>
<span class="t" style="left:20.8px;top:321.2px;width:55.4px;text-align:center;color:#e0e0e0;font-size:4.40px;">Tweak In View</span>
<div class="a" style="left:43.3px;top:333.0px;width:10.7px;height:11.0px;background:#4b7cc0;"></div>
<div class="a" style="left:18.0px;top:364.5px;width:27.5px;height:7.7px;background:#656565;border-radius:.7px;"></div>
<span class="t" style="left:18.0px;top:366.8px;width:27.5px;text-align:center;color:#e0e0e0;font-size:4.00px;">Reset UVWs</span>
<div class="a" style="left:48.2px;top:364.5px;width:28.8px;height:7.7px;background:#656565;border-radius:.7px;"></div>
<span class="t" style="left:48.2px;top:366.6px;width:28.8px;text-align:center;color:#e0e0e0;font-size:4.40px;">Save...</span>
<div class="a" style="left:48.2px;top:374.6px;width:28.8px;height:7.8px;background:#656565;border-radius:.7px;"></div>
<span class="t" style="left:48.2px;top:376.7px;width:28.8px;text-align:center;color:#e0e0e0;font-size:4.40px;">Load...</span>
<div class="a" style="left:17.5px;top:385.6px;width:60.0px;height:24.4px;background:transparent;border:.5px solid #4b4b4b;border-radius:1px;"></div>
<span class="t" style="left:18.7px;top:383.3px;color:#e8e8e8;font-size:4.3px;background:#525252;padding:0 .5px">Channel:</span>
<span class="t" style="left:27.2px;top:392.9px;color:#e4e4e4;font-size:4.15px;">Map Channel:</span>
<div class="a" style="left:56.2px;top:391.4px;width:17.0px;height:6.4px;background:#5e5e5e;"></div>
<span class="t" style="left:57.2px;top:392.9px;color:#e2e2e2;font-size:4.20px;">1</span>
<span class="t" style="left:27.2px;top:401.5px;color:#e4e4e4;font-size:4.15px;">Vertex Color Channel</span>
<div class="a" style="left:20.6px;top:392.8px;width:3.9px;height:3.9px;border-radius:50%;background:#6a6a6a"></div>
<div class="a" style="left:21.4px;top:393.6px;width:2.3px;height:2.3px;border-radius:50%;background:#fff"></div>
<div class="a" style="left:20.6px;top:401.4px;width:3.9px;height:3.9px;border-radius:50%;background:#606060"></div>
<span class="t" style="left:44.4px;top:209.3px;color:#eee;font-size:2px;line-height:2.1px">&#9650;<br>&#9660;</span>
<span class="t" style="left:74.0px;top:209.3px;color:#eee;font-size:2px;line-height:2.1px">&#9650;<br>&#9660;</span>
<span class="t" style="left:72.8px;top:240.2px;color:#eee;font-size:2px;line-height:2.1px">&#9650;<br>&#9660;</span>
<span class="t" style="left:71.0px;top:271.8px;color:#eee;font-size:2px;line-height:2.1px">&#9650;<br>&#9660;</span>
<span class="t" style="left:71.0px;top:282.8px;color:#eee;font-size:2px;line-height:2.1px">&#9650;<br>&#9660;</span>
<span class="t" style="left:71.2px;top:392.4px;color:#eee;font-size:2px;line-height:2.1px">&#9650;<br>&#9660;</span>
<svg class="a" style="left:-828px;top:-80px" width="1024" height="560" viewBox="0 0 1024 560">
<!-- tabs -->
<path d="M834.6 86.2v7M831.1 89.7h7" stroke="#dcdcdc" stroke-width=".95"/>
<rect x="844.2" y="86.3" width="6.6" height="6.6" fill="none" stroke="#2fb8c4" stroke-width=".6" stroke-dasharray="1.2 .6"/><path d="M845 92.3c.8-3.2 2.4-5 5-5.6" stroke="#f0f0f0" stroke-width=".9" fill="none"/>
<rect x="857.8" y="86.6" width="4.8" height="2.2" fill="#ececec"/><path d="M860.2 88.8v1.8M857.8 92.8v-2h4.8v2" stroke="#2fb8c4" stroke-width=".6" fill="none"/><rect x="856.9" y="92" width="1.8" height="1.5" fill="#2fb8c4"/><rect x="861.7" y="92" width="1.8" height="1.5" fill="#2fb8c4"/>
<circle cx="874.2" cy="89.8" r="3.1" fill="#e4e4e4"/><path d="M871 86.9a3.8 3.8 0 0 0 0 5.8" stroke="#2fa0ac" stroke-width=".9" fill="none"/>
<rect x="882.6" y="86.9" width="6.4" height="4.2" fill="#ececec"/><path d="M885.8 91v1.4M883.8 92.7h4" stroke="#ececec" stroke-width=".8"/>
<path d="M897 87.2l4 5" stroke="#ececec" stroke-width="1.4"/><circle cx="896.9" cy="87.1" r="1.2" fill="none" stroke="#ececec" stroke-width=".9"/>
<!-- eye in stack -->
<ellipse cx="834.2" cy="155.2" rx="2.3" ry="1.3" fill="none" stroke="#f0f0f0" stroke-width=".6"/><circle cx="834.2" cy="155.2" r=".7" fill="#f0f0f0"/>
<!-- stack tool icons -->
<path d="M832.2 205l2-2M833.6 200.5l2.8 2.8l1-1l-.9-.9l1.2-2.2l-1-1l-2.2 1.2l-.9-.9z" stroke="#ececec" stroke-width=".6" fill="#ececec"/>
<rect x="841.3" y="199.5" width=".5" height="5.5" fill="#333"/><rect x="855.8" y="199.5" width=".5" height="5.5" fill="#333"/><rect x="880.3" y="199.5" width=".5" height="5.5" fill="#333"/>
<rect x="847.4" y="198.5" width="2.6" height="1" fill="#e8e8e8"/><rect x="847.8" y="199.5" width="1.8" height="6" rx=".9" fill="#2fb8c4"/>
<path d="M861.5 199.5h3v2.5M864.8 203a1.8 1.8 0 1 1-1.5-1" stroke="#5c5c5c" stroke-width=".8" fill="none"/>
<path d="M870.8 199.3h5.6M871.5 199.8v6h4.2v-6M872.9 200.5v4.5M874.3 200.5v4.5M872.5 199v-.8h2.2v.8" stroke="#ececec" stroke-width=".7" fill="none"/>
<rect x="884.3" y="199.3" width="5.2" height="6.2" fill="none" stroke="#ececec" stroke-width=".7"/><path d="M885.3 201h2.5M885.3 202.5h2M885.3 204h3" stroke="#ececec" stroke-width=".5"/><path d="M887.5 202.8l3.2-3.8" stroke="#f0a818" stroke-width="1.2"/>
<!-- selection sub-object icons -->
<rect x="848" y="227.3" width="21.6" height="10.4" fill="#444"/>
<g fill="#2fc4c4"><circle cx="850.5" cy="232.3" r=".8"/><circle cx="856.3" cy="229.3" r=".8"/><circle cx="855.5" cy="235.5" r=".8"/><circle cx="853" cy="229.8" r=".4"/></g>
<path d="M861.5 232.5l6.3-3.5l-1.8 6.2z" stroke="#2fc4c4" stroke-width=".7" fill="none"/>
<rect x="870.3" y="227" width="11.2" height="11" rx="1" fill="#3d6ea8" stroke="#5b9bea" stroke-width=".8"/><rect x="872.5" y="229.2" width="6.8" height="6.8" fill="#35c9c9"/>
<rect x="893.4" y="226.6" width="10.8" height="11.2" fill="#444"/>
<g fill="none" stroke="#ececec" stroke-width=".8"><circle cx="896.5" cy="230.3" r="1.6"/><circle cx="901" cy="230.3" r="1.6"/><circle cx="898.5" cy="233.6" r="1.6"/></g><path d="M899.5 232.8l3.2 2.3l-1.4.3l.8 1.6l-.9.4l-.8-1.6l-.9.9z" fill="#f5a614"/>
<!-- modify selection icons -->
<rect x="848" y="246.8" width="22" height="11" fill="#474747"/>
<rect x="849.2" y="248" width="8.2" height="8.4" fill="none" stroke="#2fc4c4" stroke-width=".7" stroke-dasharray="1.3 .9"/><rect x="849.2" y="252" width="4.5" height="4.4" fill="#e8e8e8"/><path d="M853.5 250.2h2.4M854.7 249v2.4" stroke="#e8e8e8" stroke-width=".5"/>
<rect x="860.3" y="250.6" width="6.2" height="5.8" fill="none" stroke="#2fc4c4" stroke-width=".7" stroke-dasharray="1.3 .9"/><rect x="860.3" y="252.4" width="4" height="4" fill="#e8e8e8"/><path d="M866 248.2h2.6" stroke="#e8e8e8" stroke-width=".6"/>
<rect x="882" y="246.8" width="22.4" height="11" fill="#444"/>
<g fill="#2c2c2c"><rect x="883" y="247.8" width="4.3" height="2.4"/><rect x="888" y="247.8" width="4.3" height="2.4"/><rect x="883" y="251" width="4.3" height="2.4"/><rect x="888" y="251" width="4.3" height="2.4"/><rect x="883" y="254.2" width="4.3" height="2.4"/><rect x="888" y="254.2" width="4.3" height="2.4"/><rect x="894.5" y="247.8" width="2.6" height="8.8"/><rect x="898" y="247.8" width="2.2" height="8.8" fill="#383838"/><rect x="901" y="247.8" width="2.6" height="8.8"/></g>
<!-- select by -->
<rect x="859.7" y="270.3" width="11.2" height="10.7" rx="1" fill="#3d6ea8" stroke="#5b9bea" stroke-width=".8"/>
<path d="M862.5 273.5l3-1.5l3 1.5v4l-3 1.7l-3-1.7z" stroke="#bfe6ec" stroke-width=".6" fill="#7fb4d8"/>
<rect x="883" y="270.5" width="11" height="10.5" fill="#484848"/><path d="M885 273h3M885 275.5h6M885 278h6" stroke="#3a3a3a" stroke-width="1"/>
<rect x="848" y="286.2" width="10.4" height="10.8" fill="#444"/><path d="M850 288v7h6.5M850 291.5a3.5 3.5 0 0 1 3.5 3.5" stroke="#ececec" stroke-width=".8" fill="none"/><path d="M854.5 291.8l3.2 2.3l-1.4.3l.8 1.6l-.9.4l-.8-1.6l-.9.9z" fill="#f5a614"/>
<rect x="878.5" y="286.2" width="10.2" height="10.8" fill="#444"/><g fill="#ececec"><rect x="879.8" y="287.5" width="2" height="2"/><rect x="882.6" y="287.5" width="2" height="2"/><rect x="885.4" y="287.5" width="2" height="2"/></g><rect x="880" y="290.5" width="7" height="4.5" fill="none" stroke="#ececec" stroke-width=".6"/><path d="M884.5 291.8l3.2 2.3l-1.4.3l.8 1.6l-.9.4l-.8-1.6l-.9.9z" fill="#f5a614"/>
<!-- mirror XYZ -->
<rect x="848" y="301.4" width="44.5" height="10.8" fill="#444"/>
<path d="M853.3 302.5v8.6" stroke="#ececec" stroke-width=".7"/><rect x="849" y="304.3" width="3.2" height="4.6" fill="none" stroke="#2fc4c4" stroke-width=".6" stroke-dasharray="1 .6"/><rect x="854.5" y="304.3" width="3.2" height="4.6" fill="none" stroke="#2fc4c4" stroke-width=".6" stroke-dasharray="1 .6"/>
<rect x="859.4" y="301.4" width="10.6" height="10.8" fill="#48658c"/>
<!-- edit uvs icons -->
<rect x="860" y="413" width="33" height="10.8" fill="#444"/>
<rect x="871.2" y="412.8" width="10.8" height="11.2" rx="1" fill="#3d6ea8" stroke="#5b9bea" stroke-width=".8"/>
<g fill="#ececec"><path d="M861.5 421.5l1.8-3h3.4l1.8 3zM864.2 414.5h1.6v1.5h1.5v1.4h-1.5v1.3h-1.6v-1.3h-1.5v-1.4h1.5z"/><path d="M872.8 421.5l1.8-3h3.4l1.8 3zM875.5 414.5h1.6v1.5h1.5v1.4h-1.5v1.3h-1.6v-1.3h-1.5v-1.4h1.5z"/><path d="M884 421.5l1.8-3h3.4l1.8 3zM886.7 414.5h1.6v1.5h1.5v1.4h-1.5v1.3h-1.6v-1.3h-1.5v-1.4h1.5z"/></g>
<circle cx="868" cy="420.3" r="1" fill="#f5a614"/><path d="M877.5 419.8a1.9 1.9 0 1 0 2.8 1.5" stroke="#f5a614" stroke-width="1" fill="none"/>
<!-- Peel icons -->
<rect x="951.7" y="106.7" width="43.8" height="10.9" fill="#444"/>
<g fill="#ececec"><circle cx="956.8" cy="112.2" r="4.3"/><circle cx="967.6" cy="112.2" r="4.3"/><circle cx="978.6" cy="112.2" r="3.7"/><path d="M986.5 108l2.2 1h2.4l2.2-1l-.8 3l.8 1.8l-.6 3.2l-2-.8h-1.6l-2 .8l-.6-3.2l.8-1.8z"/></g>
<path d="M954.5 113.5l4.5-3.5" stroke="#555" stroke-width=".7"/><path d="M965 113.5l4.5-3.5" stroke="#555" stroke-width=".7"/>
<path d="M958 115.3l2.5-1.3v2.6z" fill="#2fc4c4"/><path d="M975.8 109.5a4 4 0 0 1 6 .5M981.5 115a4 4 0 0 1-6-.5" stroke="#2fc4c4" stroke-width=".9" fill="none"/>
<!-- Seams icons -->
<rect x="950.8" y="126.4" width="44.6" height="11" fill="#444"/>
<path d="M952.5 129h6" stroke="#2fc4c4" stroke-width=".8" stroke-dasharray="1.3 .8"/><path d="M955.5 135.5l5-5" stroke="#f0a818" stroke-width="1.3"/>
<path d="M964.5 128.5v3.8h6.5v3" stroke="#2fc4c4" stroke-width=".7" stroke-dasharray="1.2 .7" fill="none"/><circle cx="964.5" cy="128.3" r=".9" fill="#ececec"/><circle cx="971" cy="135.6" r=".9" fill="#ececec"/>
<rect x="975.5" y="127.4" width="4.5" height="9" fill="#383838"/><path d="M981.5 132h2.5" stroke="#666" stroke-width=".6"/>
<rect x="985.8" y="127.8" width="7.6" height="8" fill="none" stroke="#2fc4c4" stroke-width=".8" stroke-dasharray="1.3 .8"/><rect x="987" y="129" width="3.6" height="5.6" fill="#9a9a9a"/><path d="M990 131.3l3.2 2.3l-1.4.3l.8 1.6l-.9.4l-.8-1.6l-.9.9z" fill="#f5a614"/>
<!-- Projection icons -->
<rect x="952.2" y="158.2" width="44.2" height="10.8" fill="#444"/>
<g fill="#ececec"><path d="M955.5 161.8h4.6l2.6 3.6h-9.8z"/><path d="M965.8 160.8a2.8 1 0 0 1 5.6 0v6a2.8 1 0 0 1-5.6 0z"/><circle cx="979.7" cy="163.7" r="4"/><path d="M986.7 161.8l3.6-1.7l3.8 1.4v4.3l-3.6 2l-3.8-1.7z"/></g>
<ellipse cx="968.6" cy="160.9" rx="2.6" ry=".9" fill="#cfcfcf" stroke="#999" stroke-width=".3"/><path d="M986.7 161.8l3.8 1.5l3.6-1.8M990.5 163.3v4.5" stroke="#999" stroke-width=".4" fill="none"/>
<!-- XYZ align (dim) -->
<g stroke="#343434" stroke-width=".8" fill="none"><path d="M948 181.5l5.5 7M953.5 181.5l-5.5 7M958.5 181.5l3 3.5l3-3.5M961.5 185v3.5M969 181.5h5.5l-5.5 7h5.5M983.5 181.5v4l-3 2.5M983.5 185.5l3 2.5"/><path d="M990.6 180v9" stroke-dasharray="1 .6"/><path d="M992.5 184.5l4-2.5v5z"/></g>
<path d="M996.5 203l.3-3.5c0-2.5-4-2.5-5-.8M990.6 197.2l1 2l1.8-.8" stroke="#5c5c5c" stroke-width=".9" fill="none"/>
<!-- X Y Z dark letters in mirror row -->
<g stroke="#2f2f2f" stroke-width=".9" fill="none"><path d="M861.8 303l5.8 7.6M867.6 303l-5.8 7.6" stroke="#3b4a60"/><path d="M872.3 303l3.2 4l3.2-4M875.5 307v3.6M883.3 303h6l-6 7.6h6"/></g>
<!-- Wrap icons -->
<rect x="957" y="226.3" width="10.8" height="11" fill="#444"/><path d="M959.5 235.3c.5-3 2-3.3 3.5-3.6s2.5-1 2.8-3" stroke="#ececec" stroke-width="1" fill="none"/><circle cx="965.8" cy="228.6" r="1" fill="#2fc4c4"/><circle cx="962.8" cy="232" r=".9" fill="#2fc4c4"/><path d="M958.3 234.3l.4 2.2l2-.8z" fill="#ececec"/>
<rect x="980.2" y="226.3" width="10.8" height="11" fill="#474747"/><path d="M982.5 228.5h6v4l-3 3h-3z" stroke="#3c3c3c" stroke-width=".8" fill="#414141"/>
</svg>

</div>
<div id="bot" class="a" style="left:0;top:518px;width:1024px;height:42px;background:#444">
<div class="a" style="left:0.6px;top:2.5px;width:1.6px;height:18.0px;background:#505050;"></div>
<div class="a" style="left:4.0px;top:2.0px;width:5.6px;height:6.8px;background:#5a5a5a;"></div>
<span class="t" style="left:4.0px;top:2.3px;width:5.6px;text-align:center;color:#e4e4e4;font-size:6.00px">&lt;</span>
<div class="a" style="left:10.2px;top:2.0px;width:49.0px;height:6.8px;background:#6a6a6a;"></div>
<span class="t" style="left:10.2px;top:3.6px;width:49.0px;text-align:center;color:#f0f0f0;font-size:4.30px">0 / 100</span>
<div class="a" style="left:60.0px;top:2.0px;width:6.0px;height:6.8px;background:#5a5a5a;"></div>
<span class="t" style="left:60.0px;top:2.3px;width:6.0px;text-align:center;color:#e4e4e4;font-size:6.00px">&gt;</span>
<div class="a" style="left:3.0px;top:10.6px;width:19.6px;height:10.0px;background:#505050;"></div>
<div class="a" style="left:23.0px;top:10.0px;width:981.5px;height:10.8px;background:#262626;"></div>
<div class="a" style="left:26.7px;top:10.7px;width:3.3px;height:9.0px;background:repeating-linear-gradient(#b9ab2f 0 1.2px,#9c9030 1.2px 1.8px);"></div>
<svg class="a" style="left:0;top:10px" width="1024" height="11" viewBox="0 528 1024 11"><path d="M28.2 528.3v4.6M37.9 528.3v3.0M47.6 528.3v4.6M57.3 528.3v3.0M67.0 528.3v4.6M76.7 528.3v3.0M86.4 528.3v4.6M96.1 528.3v3.0M105.8 528.3v4.6M115.5 528.3v3.0M125.2 528.3v4.6M134.9 528.3v3.0M144.6 528.3v4.6M154.3 528.3v3.0M164.0 528.3v4.6M173.7 528.3v3.0M183.4 528.3v4.6M193.1 528.3v3.0M202.8 528.3v4.6M212.5 528.3v3.0M222.2 528.3v4.6M231.9 528.3v3.0M241.6 528.3v4.6M251.3 528.3v3.0M261.0 528.3v4.6M270.7 528.3v3.0M280.4 528.3v4.6M290.1 528.3v3.0M299.8 528.3v4.6M309.5 528.3v3.0M319.2 528.3v4.6M328.9 528.3v3.0M338.6 528.3v4.6M348.3 528.3v3.0M358.0 528.3v4.6M367.7 528.3v3.0M377.4 528.3v4.6M387.1 528.3v3.0M396.8 528.3v4.6M406.5 528.3v3.0M416.2 528.3v4.6M425.9 528.3v3.0M435.6 528.3v4.6M445.3 528.3v3.0M455.0 528.3v4.6M464.7 528.3v3.0M474.4 528.3v4.6M484.1 528.3v3.0M493.8 528.3v4.6M503.5 528.3v3.0M513.2 528.3v4.6M522.9 528.3v3.0M532.6 528.3v4.6M542.3 528.3v3.0M552.0 528.3v4.6M561.7 528.3v3.0M571.4 528.3v4.6M581.1 528.3v3.0M590.8 528.3v4.6M600.5 528.3v3.0M610.2 528.3v4.6M619.9 528.3v3.0M629.6 528.3v4.6M639.3 528.3v3.0M649.0 528.3v4.6M658.7 528.3v3.0M668.4 528.3v4.6M678.1 528.3v3.0M687.8 528.3v4.6M697.5 528.3v3.0M707.2 528.3v4.6M716.9 528.3v3.0M726.6 528.3v4.6M736.3 528.3v3.0M746.0 528.3v4.6M755.7 528.3v3.0M765.4 528.3v4.6M775.1 528.3v3.0M784.8 528.3v4.6M794.5 528.3v3.0M804.2 528.3v4.6M813.9 528.3v3.0M823.6 528.3v4.6M833.3 528.3v3.0M843.0 528.3v4.6M852.7 528.3v3.0M862.4 528.3v4.6M872.1 528.3v3.0M881.8 528.3v4.6M891.5 528.3v3.0M901.2 528.3v4.6M910.9 528.3v3.0M920.6 528.3v4.6M930.3 528.3v3.0M940.0 528.3v4.6M949.7 528.3v3.0M959.4 528.3v4.6M969.1 528.3v3.0M978.8 528.3v4.6M988.5 528.3v3.0M998.2 528.3v4.6" stroke="#757575" stroke-width=".5"/><path d="M9.3 531.2v4.8" stroke="#e8e8e8" stroke-width=".8" fill="none"/><path d="M10.8 532.6l1.6-1.2l2 3.4l1.6-1.2" stroke="#35b8c4" stroke-width=".8" fill="none"/></svg>
<span class="t" style="left:46.3px;top:15.6px;color:#b4b4b4;font-size:4.10px;">2</span>
<span class="t" style="left:65.8px;top:15.6px;color:#b4b4b4;font-size:4.10px;">4</span>
<span class="t" style="left:85.1px;top:15.6px;color:#b4b4b4;font-size:4.10px;">6</span>
<span class="t" style="left:104.5px;top:15.6px;color:#b4b4b4;font-size:4.10px;">8</span>
<span class="t" style="left:122.8px;top:15.6px;color:#b4b4b4;font-size:4.10px;">10</span>
<span class="t" style="left:142.2px;top:15.6px;color:#b4b4b4;font-size:4.10px;">12</span>
<span class="t" style="left:161.6px;top:15.6px;color:#b4b4b4;font-size:4.10px;">14</span>
<span class="t" style="left:181.0px;top:15.6px;color:#b4b4b4;font-size:4.10px;">16</span>
<span class="t" style="left:200.4px;top:15.6px;color:#b4b4b4;font-size:4.10px;">18</span>
<span class="t" style="left:219.8px;top:15.6px;color:#b4b4b4;font-size:4.10px;">20</span>
<span class="t" style="left:239.2px;top:15.6px;color:#b4b4b4;font-size:4.10px;">22</span>
<span class="t" style="left:258.6px;top:15.6px;color:#b4b4b4;font-size:4.10px;">24</span>
<span class="t" style="left:278.0px;top:15.6px;color:#b4b4b4;font-size:4.10px;">26</span>
<span class="t" style="left:297.4px;top:15.6px;color:#b4b4b4;font-size:4.10px;">28</span>
<span class="t" style="left:316.8px;top:15.6px;color:#b4b4b4;font-size:4.10px;">30</span>
<span class="t" style="left:336.2px;top:15.6px;color:#b4b4b4;font-size:4.10px;">32</span>
<span class="t" style="left:355.6px;top:15.6px;color:#b4b4b4;font-size:4.10px;">34</span>
<span class="t" style="left:375.0px;top:15.6px;color:#b4b4b4;font-size:4.10px;">36</span>
<span class="t" style="left:394.4px;top:15.6px;color:#b4b4b4;font-size:4.10px;">38</span>
<span class="t" style="left:413.8px;top:15.6px;color:#b4b4b4;font-size:4.10px;">40</span>
<span class="t" style="left:433.2px;top:15.6px;color:#b4b4b4;font-size:4.10px;">42</span>
<span class="t" style="left:452.6px;top:15.6px;color:#b4b4b4;font-size:4.10px;">44</span>
<span class="t" style="left:472.0px;top:15.6px;color:#b4b4b4;font-size:4.10px;">46</span>
<span class="t" style="left:491.4px;top:15.6px;color:#b4b4b4;font-size:4.10px;">48</span>
<span class="t" style="left:510.8px;top:15.6px;color:#b4b4b4;font-size:4.10px;">50</span>
<span class="t" style="left:530.2px;top:15.6px;color:#b4b4b4;font-size:4.10px;">52</span>
<span class="t" style="left:549.6px;top:15.6px;color:#b4b4b4;font-size:4.10px;">54</span>
<span class="t" style="left:569.0px;top:15.6px;color:#b4b4b4;font-size:4.10px;">56</span>
<span class="t" style="left:588.4px;top:15.6px;color:#b4b4b4;font-size:4.10px;">58</span>
<span class="t" style="left:607.8px;top:15.6px;color:#b4b4b4;font-size:4.10px;">60</span>
<span class="t" style="left:627.2px;top:15.6px;color:#b4b4b4;font-size:4.10px;">62</span>
<span class="t" style="left:646.6px;top:15.6px;color:#b4b4b4;font-size:4.10px;">64</span>
<span class="t" style="left:666.0px;top:15.6px;color:#b4b4b4;font-size:4.10px;">66</span>
<span class="t" style="left:685.4px;top:15.6px;color:#b4b4b4;font-size:4.10px;">68</span>
<span class="t" style="left:704.8px;top:15.6px;color:#b4b4b4;font-size:4.10px;">70</span>
<span class="t" style="left:724.2px;top:15.6px;color:#b4b4b4;font-size:4.10px;">72</span>
<span class="t" style="left:743.6px;top:15.6px;color:#b4b4b4;font-size:4.10px;">74</span>
<span class="t" style="left:763.0px;top:15.6px;color:#b4b4b4;font-size:4.10px;">76</span>
<span class="t" style="left:782.4px;top:15.6px;color:#b4b4b4;font-size:4.10px;">78</span>
<span class="t" style="left:801.8px;top:15.6px;color:#b4b4b4;font-size:4.10px;">80</span>
<span class="t" style="left:821.2px;top:15.6px;color:#b4b4b4;font-size:4.10px;">82</span>
<span class="t" style="left:840.6px;top:15.6px;color:#b4b4b4;font-size:4.10px;">84</span>
<span class="t" style="left:860.0px;top:15.6px;color:#b4b4b4;font-size:4.10px;">86</span>
<span class="t" style="left:879.4px;top:15.6px;color:#b4b4b4;font-size:4.10px;">88</span>
<span class="t" style="left:898.8px;top:15.6px;color:#b4b4b4;font-size:4.10px;">90</span>
<span class="t" style="left:918.2px;top:15.6px;color:#b4b4b4;font-size:4.10px;">92</span>
<span class="t" style="left:937.6px;top:15.6px;color:#b4b4b4;font-size:4.10px;">94</span>
<span class="t" style="left:957.0px;top:15.6px;color:#b4b4b4;font-size:4.10px;">96</span>
<span class="t" style="left:976.4px;top:15.6px;color:#b4b4b4;font-size:4.10px;">98</span>
<span class="t" style="left:994.6px;top:15.6px;color:#b4b4b4;font-size:4.10px;">100</span>
<div class="a" style="left:1.0px;top:22.0px;width:39.6px;height:9.4px;background:#e4c8c8;"></div>
<div class="a" style="left:1.0px;top:31.6px;width:39.6px;height:9.2px;background:#fbfbfb;"></div>
<span class="t" style="left:2.2px;top:34.5px;color:#a2a2a2;font-size:4.35px;font-family:'Liberation Mono',monospace;">MAXScript Mi:</span>
<span class="t" style="left:43.5px;top:25.2px;color:#ececec;font-size:4.30px;">1 Object Selected</span>
<span class="t" style="left:43.5px;top:34.8px;color:#ececec;font-size:4.30px;">Select faces</span>
<div class="a" style="left:668.5px;top:23.0px;width:9.1px;height:7.8px;background:#3d6ea8;border:.6px solid #5b9bea;border-radius:.8px;"></div>
<div class="a" style="left:705.3px;top:23.5px;width:23.3px;height:6.1px;background:#5c5c5c;"></div>
<div class="a" style="left:739.4px;top:23.5px;width:22.8px;height:6.1px;background:#5c5c5c;"></div>
<div class="a" style="left:772.8px;top:23.5px;width:22.6px;height:6.1px;background:#5c5c5c;"></div>
<span class="t" style="left:700.2px;top:24.9px;color:#e0e0e0;font-size:4.20px;">X:</span>
<span class="t" style="left:733.8px;top:24.9px;color:#e0e0e0;font-size:4.20px;">Y:</span>
<span class="t" style="left:767.4px;top:24.9px;color:#e0e0e0;font-size:4.20px;">Z:</span>
<span class="t" style="left:706.3px;top:24.9px;color:#8c8c8c;font-size:4.10px;">653,289</span>
<span class="t" style="left:740.4px;top:24.9px;color:#8c8c8c;font-size:4.10px;">-36,044</span>
<span class="t" style="left:773.8px;top:24.9px;color:#8c8c8c;font-size:4.10px;">0,0</span>
<span class="t" style="left:801.0px;top:24.8px;color:#ececec;font-size:4.30px;">Grid = 10,0</span>
<div class="a" style="left:791.6px;top:32.3px;width:8.4px;height:8.4px;background:#4a7fca;border-radius:.8px;"></div>
<span class="t" style="left:801.8px;top:34.8px;color:#e8e8e8;font-size:4.30px;">Add Time Tag</span>
<div class="a" style="left:854.5px;top:32.3px;width:27.9px;height:5.9px;background:#5c5c5c;"></div>
<span class="t" style="left:855.6px;top:33.6px;color:#e2e2e2;font-size:4.10px;">0</span>
<div class="a" style="left:896.4px;top:22.4px;width:16.6px;height:17.4px;background:#5e5e5e;border-radius:1px;"></div>
<div class="a" style="left:914.6px;top:23.0px;width:18.7px;height:7.4px;background:#646464;border-radius:.7px;"></div>
<span class="t" style="left:914.6px;top:25.0px;width:18.7px;text-align:center;color:#e0e0e0;font-size:4.30px">Auto</span>
<div class="a" style="left:914.6px;top:31.8px;width:18.7px;height:7.5px;background:#646464;border-radius:.7px;"></div>
<span class="t" style="left:914.6px;top:33.9px;width:18.7px;text-align:center;color:#e0e0e0;font-size:4.30px">Set K.</span>
<div class="a" style="left:934.4px;top:23.0px;width:45.4px;height:7.0px;background:#646464;"></div>
<span class="t" style="left:936.2px;top:24.8px;color:#ececec;font-size:4.20px;">Selected</span>
<span class="t" style="left:975.5px;top:25.2px;color:#eee;font-size:2.8px">&#9660;</span>
<div class="a" style="left:944.6px;top:31.8px;width:35.2px;height:7.5px;background:#646464;border-radius:.7px;"></div>
<span class="t" style="left:944.6px;top:33.9px;width:35.2px;text-align:center;color:#e0e0e0;font-size:4.30px">Filters...</span>
<svg class="a" style="left:0;top:0" width="1024" height="42" viewBox="0 518 1024 42">
<rect x="670.3" y="542.6" width="5.6" height="4.6" fill="none" stroke="#cfe0f5" stroke-width=".5" stroke-dasharray="1 .6"/><circle cx="673.1" cy="544.9" r="1.3" fill="#35d0c0"/>
<rect x="681.6" y="544.3" width="4" height="3.4" fill="#ececec"/><path d="M682.4 544.3v-1.2a1.2 1.2 0 0 1 2.4 0v1.2" stroke="#ececec" stroke-width=".6" fill="none"/>
<g fill="none" stroke="#ececec" stroke-width=".5"><rect x="692" y="542.5" width="2" height="2"/><rect x="694.8" y="542.5" width="2" height="2"/><rect x="692" y="545.3" width="2" height="2"/><rect x="694.8" y="545.3" width="2" height="2"/></g>
<path d="M793.3 556.5v-4h4.5M794 555.5q1.5-3 3.5-.5" stroke="#d5e4f7" stroke-width=".6" fill="none"/>
<g fill="#ececec"><path d="M846.3 542.3h.8v4h-.8zM850.8 542.3v4l-3.2-2zM855.3 544.3l2.6-2v4zM858.6 542.3h.8v4h-.8zM860.2 542.3h.8v4h-.8zM864.2 541.3l5 3l-5 3zM873.8 542.3h.8v4h-.8zM875.4 542.3h.8v4h-.8zM877 542.3l2.6 2l-2.6 2zM884 542.3l3.2 2l-3.2 2zM888 542.3h.8v4h-.8z"/><path d="M846.2 553.3l2-1.6v3.2zM851 553.3l-2-1.6v3.2z"/></g>
<circle cx="886.5" cy="552.3" r="1.8" fill="none" stroke="#ececec" stroke-width=".8"/><circle cx="888.6" cy="554.4" r="1.5" fill="#f0a818"/>
<path d="M904.3 543.3v11.4M898.6 549h11.4" stroke="#f2f2f2" stroke-width="1.7"/><path d="M907.5 551.5l2.2-.8l-1.2 3z" fill="#2fc4c4"/>
<path d="M936.3 556.3c1-1.2 1-4.5 1.6-5.2M941 556.3c-1-1.2-1-4.5-1.6-5.2M936 551.2h5.6" stroke="#2fc4c4" stroke-width=".7" fill="none"/>
<g stroke="#ececec" stroke-width=".8" fill="none"><circle cx="988.6" cy="543.6" r="1.9"/><path d="M987.3 545.2l-1.8 2.3"/><path d="M985.5 551.5l4.5 2l-4.5 2z" stroke-width=".6"/></g>
<g fill="#2fc4c4"><rect x="996" y="541.8" width="4.8" height="1"/><rect x="996" y="543.6" width="3" height="1"/><rect x="996" y="545.4" width="4.8" height="1"/><circle cx="1007" cy="544.3" r="1.7"/><path d="M1013.5 544.8l4-2.6v4.6z"/><path d="M1004.8 555.3l4-3.6l1 1l-3.6 4z"/></g>
<path d="M997 551v4.5l1.5 1h2l1-1.5v-3.2M998.4 553.5v-3M999.8 553.5v-3.2" stroke="#ececec" stroke-width=".7" fill="none"/>
<rect x="1013.6" y="551" width="5.6" height="5.6" fill="none" stroke="#ececec" stroke-width=".6"/><rect x="1013.6" y="553.8" width="2.8" height="2.8" fill="#ececec"/><rect x="1016.4" y="551" width="2.8" height="2.8" fill="#ececec"/>
</svg>
</div>
</body></html>
